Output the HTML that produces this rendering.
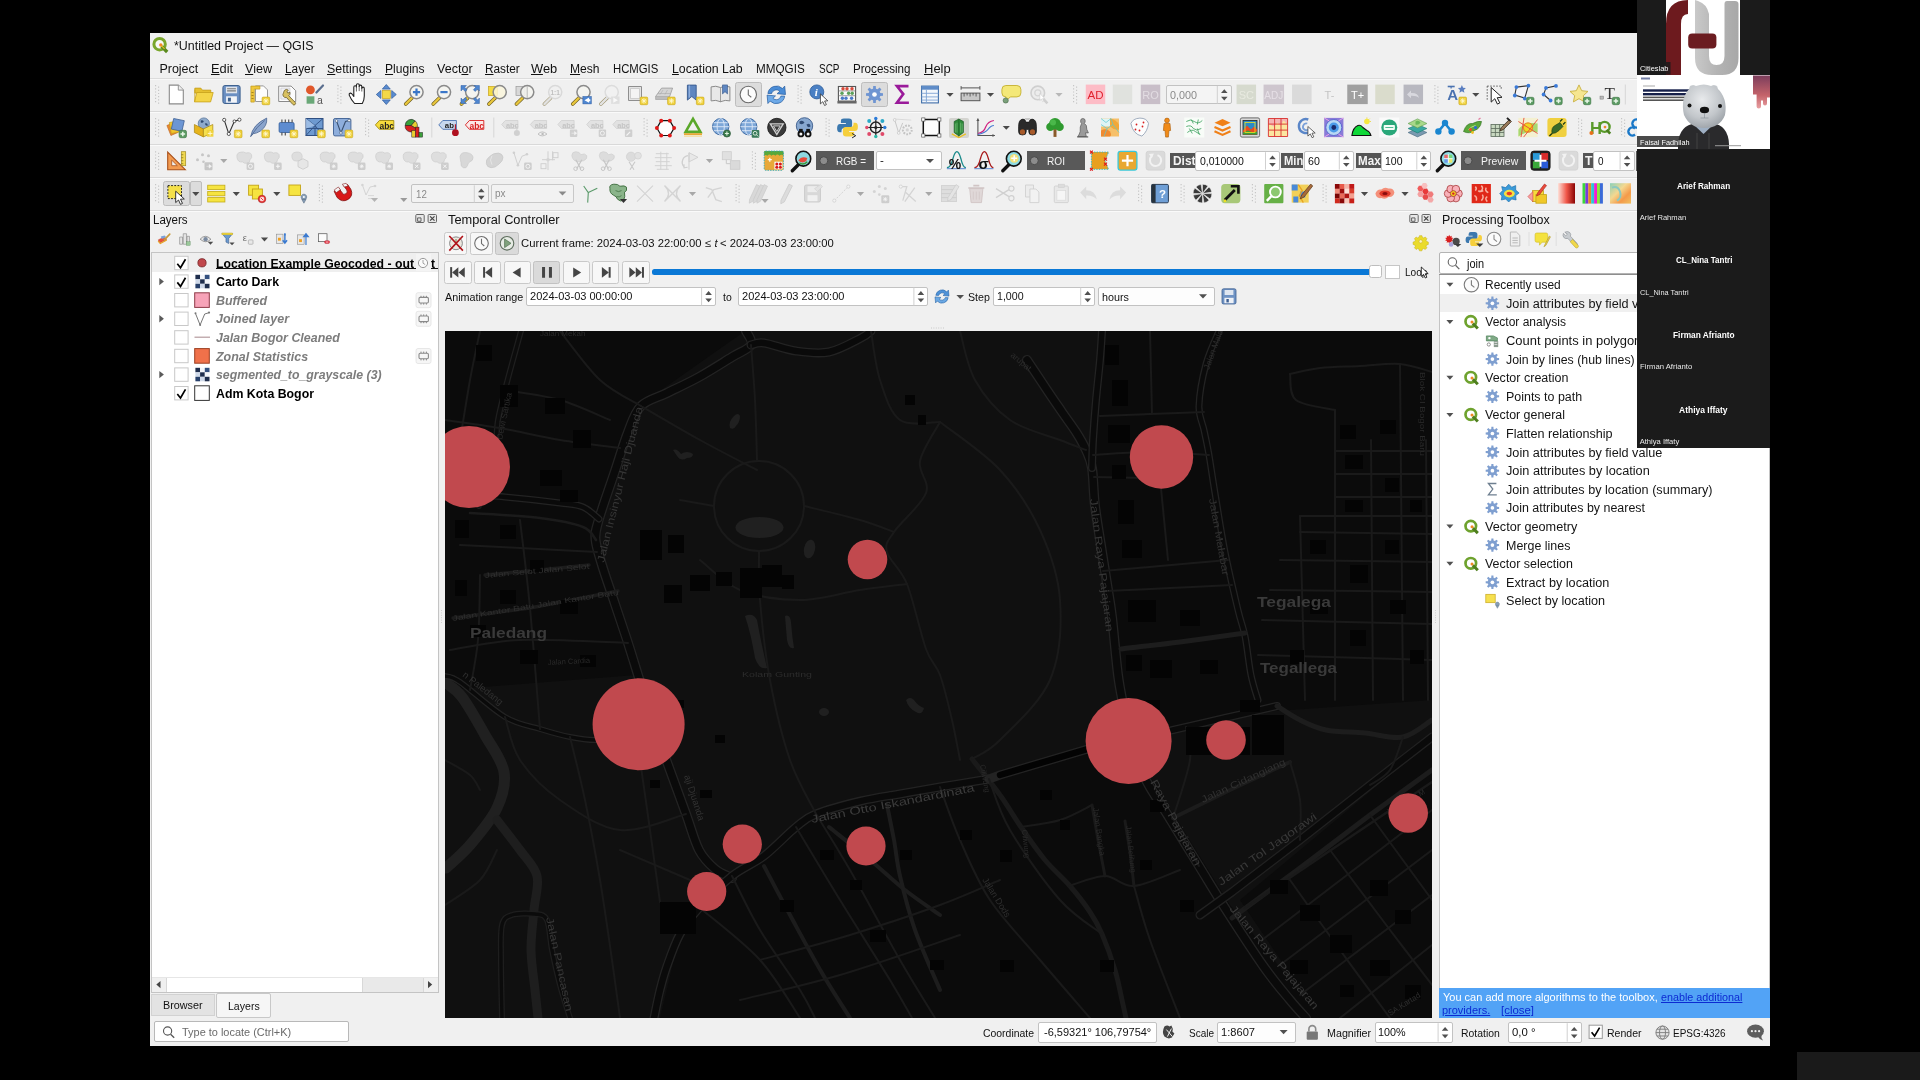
<!DOCTYPE html>
<html><head><meta charset="utf-8"><title>QGIS</title><style>
html,body{margin:0;padding:0;background:#000;}
body{width:1920px;height:1080px;position:relative;overflow:hidden;font-family:"Liberation Sans",sans-serif;}
div,span.t,svg.a{position:absolute;}
span.t{white-space:pre;transform-origin:0 0;}
u{text-decoration-thickness:1px;text-underline-offset:1px;}
text{font-family:"Liberation Sans",sans-serif;}
text.sf{font-family:"Liberation Serif",serif;}
</style></head><body>
<div id="root" style="left:0;top:0;width:1920px;height:1080px;will-change:transform;">
<div style="left:150px;top:33px;width:1620px;height:1013px;background:#f0f0f0;"></div>
<span class="t" style="left:174px;top:39.62px;font-size:12.5px;line-height:12.5px;color:#111;transform:scaleX(0.9941);">*Untitled Project — QGIS</span>
<span class="t" style="left:159.4px;top:62.52px;font-size:12.5px;line-height:12.5px;color:#111;">Project</span>
<span class="t" style="left:210.8px;top:62.52px;font-size:12.5px;line-height:12.5px;color:#111;transform:scaleX(1.0260);"><u>E</u>dit</span>
<span class="t" style="left:245.4px;top:62.52px;font-size:12.5px;line-height:12.5px;color:#111;transform:scaleX(1.0086);"><u>V</u>iew</span>
<span class="t" style="left:285px;top:62.52px;font-size:12.5px;line-height:12.5px;color:#111;transform:scaleX(0.9466);"><u>L</u>ayer</span>
<span class="t" style="left:327.1px;top:62.52px;font-size:12.5px;line-height:12.5px;color:#111;transform:scaleX(0.9919);"><u>S</u>ettings</span>
<span class="t" style="left:384.6px;top:62.52px;font-size:12.5px;line-height:12.5px;color:#111;transform:scaleX(0.9659);"><u>P</u>lugins</span>
<span class="t" style="left:437.1px;top:62.52px;font-size:12.5px;line-height:12.5px;color:#111;">Vect<u>o</u>r</span>
<span class="t" style="left:485px;top:62.52px;font-size:12.5px;line-height:12.5px;color:#111;transform:scaleX(0.9452);"><u>R</u>aster</span>
<span class="t" style="left:531.3px;top:62.52px;font-size:12.5px;line-height:12.5px;color:#111;transform:scaleX(1.0284);"><u>W</u>eb</span>
<span class="t" style="left:570px;top:62.52px;font-size:12.5px;line-height:12.5px;color:#111;transform:scaleX(0.9651);"><u>M</u>esh</span>
<span class="t" style="left:613px;top:62.52px;font-size:12.5px;line-height:12.5px;color:#111;transform:scaleX(0.9060);">HCMGIS</span>
<span class="t" style="left:671.8px;top:62.52px;font-size:12.5px;line-height:12.5px;color:#111;transform:scaleX(0.9876);"><u>L</u>ocation Lab</span>
<span class="t" style="left:756.3px;top:62.52px;font-size:12.5px;line-height:12.5px;color:#111;transform:scaleX(0.9351);">MMQGIS</span>
<span class="t" style="left:818.8px;top:62.52px;font-size:12.5px;line-height:12.5px;color:#111;transform:scaleX(0.7976);">SCP</span>
<span class="t" style="left:852.5px;top:62.52px;font-size:12.5px;line-height:12.5px;color:#111;transform:scaleX(0.9299);">Pro<u>c</u>essing</span>
<span class="t" style="left:923.8px;top:62.52px;font-size:12.5px;line-height:12.5px;color:#111;transform:scaleX(1.0385);"><u>H</u>elp</span>
<div style="left:150px;top:78px;width:1620px;height:1px;background:#dcdcdc;"></div>
<div style="left:150px;top:79px;width:1620px;height:1px;background:#f8f8f8;"></div>
<div style="left:150px;top:111px;width:1620px;height:1px;background:#d9d9d9;"></div>
<div style="left:150px;top:112px;width:1620px;height:1px;background:#fafafa;"></div>
<div style="left:150px;top:144px;width:1620px;height:1px;background:#d9d9d9;"></div>
<div style="left:150px;top:145px;width:1620px;height:1px;background:#fafafa;"></div>
<div style="left:150px;top:177px;width:1620px;height:1px;background:#d9d9d9;"></div>
<div style="left:150px;top:178px;width:1620px;height:1px;background:#fafafa;"></div>
<div style="left:150px;top:210px;width:1620px;height:1px;background:#d9d9d9;"></div>
<div style="left:150px;top:211px;width:1620px;height:1px;background:#fafafa;"></div>
<span class="t" style="left:1442px;top:214.09px;font-size:12.3px;line-height:12.3px;color:#111;transform:scaleX(1.0128);">Processing Toolbox</span>
<div style="left:1438.5px;top:252.2px;width:331.5px;height:22px;background:#ffffff;border:1px solid #b4b4b4;box-sizing:border-box;border-radius:2px;"></div>
<span class="t" style="left:1467.3px;top:257.74px;font-size:12px;line-height:12px;color:#111;transform:scaleX(0.9154);">join</span>
<div style="left:1438.5px;top:274px;width:331.5px;height:715.5px;background:#ffffff;border:1px solid #c4c4c4;box-sizing:border-box;"></div>
<div style="left:1438.5px;top:274px;width:331.5px;height:1px;background:#8e8e8e;"></div>
<div style="left:1439.5px;top:294.2px;width:330.5px;height:18px;background:#f0f0f0;"></div>
<span class="t" style="left:1485.3px;top:279.14px;font-size:12px;line-height:12px;color:#141414;transform:scaleX(0.9955);">Recently used</span>
<span class="t" style="left:1506.2px;top:297.74px;font-size:12px;line-height:12px;color:#141414;transform:scaleX(1.0561);">Join attributes by field value</span>
<span class="t" style="left:1485.3px;top:316.34px;font-size:12px;line-height:12px;color:#141414;">Vector analysis</span>
<span class="t" style="left:1506.2px;top:334.94px;font-size:12px;line-height:12px;color:#141414;transform:scaleX(1.0788);">Count points in polygon</span>
<span class="t" style="left:1506.2px;top:353.54px;font-size:12px;line-height:12px;color:#141414;transform:scaleX(1.0263);">Join by lines (hub lines)</span>
<span class="t" style="left:1485.3px;top:372.14px;font-size:12px;line-height:12px;color:#141414;transform:scaleX(1.0431);">Vector creation</span>
<span class="t" style="left:1506.2px;top:390.74px;font-size:12px;line-height:12px;color:#141414;transform:scaleX(1.0370);">Points to path</span>
<span class="t" style="left:1485.3px;top:409.34px;font-size:12px;line-height:12px;color:#141414;transform:scaleX(1.0338);">Vector general</span>
<span class="t" style="left:1506.2px;top:427.94px;font-size:12px;line-height:12px;color:#141414;transform:scaleX(1.0514);">Flatten relationship</span>
<span class="t" style="left:1506.2px;top:446.54px;font-size:12px;line-height:12px;color:#141414;transform:scaleX(1.0561);">Join attributes by field value</span>
<span class="t" style="left:1506.2px;top:465.14px;font-size:12px;line-height:12px;color:#141414;transform:scaleX(1.0619);">Join attributes by location</span>
<span class="t" style="left:1506.2px;top:483.74px;font-size:12px;line-height:12px;color:#141414;transform:scaleX(1.0532);">Join attributes by location (summary)</span>
<span class="t" style="left:1506.2px;top:502.34px;font-size:12px;line-height:12px;color:#141414;transform:scaleX(1.0367);">Join attributes by nearest</span>
<span class="t" style="left:1485.3px;top:520.94px;font-size:12px;line-height:12px;color:#141414;transform:scaleX(1.0563);">Vector geometry</span>
<span class="t" style="left:1506.2px;top:539.54px;font-size:12px;line-height:12px;color:#141414;transform:scaleX(1.0382);">Merge lines</span>
<span class="t" style="left:1485.3px;top:558.14px;font-size:12px;line-height:12px;color:#141414;transform:scaleX(1.0376);">Vector selection</span>
<span class="t" style="left:1506.2px;top:576.74px;font-size:12px;line-height:12px;color:#141414;transform:scaleX(1.0546);">Extract by location</span>
<span class="t" style="left:1506.2px;top:595.34px;font-size:12px;line-height:12px;color:#141414;transform:scaleX(1.0536);">Select by location</span>
<div style="left:1438.6px;top:988.4px;width:331.4px;height:29.8px;background:#52a3f6;"></div>
<span class="t" style="left:1442.8px;top:992.01px;font-size:10.5px;line-height:10.5px;color:#fff;transform:scaleX(1.0471);">You can add more algorithms to the toolbox, </span>
<span class="t" style="left:1660.6px;top:992.01px;font-size:10.5px;line-height:10.5px;color:#0c2ad2;transform:scaleX(1.0251);text-decoration:underline;">enable additional</span>
<span class="t" style="left:1442.3px;top:1005.01px;font-size:10.5px;line-height:10.5px;color:#0c2ad2;transform:scaleX(1.0455);text-decoration:underline;">providers.</span>
<span class="t" style="left:1501px;top:1005.01px;font-size:10.5px;line-height:10.5px;color:#0c2ad2;transform:scaleX(1.0874);text-decoration:underline;">[close]</span>
<div style="left:735px;top:82.2px;width:26.8px;height:24.8px;background:#dcdcdc;border:1px solid #bdbdbd;box-sizing:border-box;border-radius:2.5px;"></div>
<div style="left:861.3px;top:82.2px;width:26.7px;height:24.8px;background:#dcdcdc;border:1px solid #bdbdbd;box-sizing:border-box;border-radius:2.5px;"></div>
<span class="t" style="left:153.4px;top:214.09px;font-size:12.3px;line-height:12.3px;color:#111;transform:scaleX(0.9372);">Layers</span>
<div style="left:151px;top:252px;width:288px;height:741px;background:#ffffff;border:1px solid #c4c4c4;box-sizing:border-box;"></div>
<div style="left:152px;top:253px;width:286px;height:19px;background:#efefef;"></div>
<span class="t" style="left:216px;top:257.54px;font-size:12px;line-height:12px;color:#000;font-weight:bold;transform:scaleX(1.0205);">Location Example Geocoded - out</span>
<span class="t" style="left:216px;top:276.14px;font-size:12px;line-height:12px;color:#000;font-weight:bold;transform:scaleX(1.0268);">Carto Dark</span>
<span class="t" style="left:216px;top:294.74px;font-size:12px;line-height:12px;color:#7c7c7c;font-weight:bold;font-style:italic;transform:scaleX(1.0382);">Buffered</span>
<span class="t" style="left:216px;top:313.34px;font-size:12px;line-height:12px;color:#7c7c7c;font-weight:bold;font-style:italic;transform:scaleX(1.0424);">Joined layer</span>
<span class="t" style="left:216px;top:331.94px;font-size:12px;line-height:12px;color:#7c7c7c;font-weight:bold;font-style:italic;transform:scaleX(1.0372);">Jalan Bogor Cleaned</span>
<span class="t" style="left:216px;top:350.54px;font-size:12px;line-height:12px;color:#7c7c7c;font-weight:bold;font-style:italic;transform:scaleX(1.0384);">Zonal Statistics</span>
<span class="t" style="left:216px;top:369.14px;font-size:12px;line-height:12px;color:#7c7c7c;font-weight:bold;font-style:italic;transform:scaleX(1.0260);">segmented_to_grayscale (3)</span>
<span class="t" style="left:216px;top:387.74px;font-size:12px;line-height:12px;color:#000;font-weight:bold;transform:scaleX(1.0280);">Adm Kota Bogor</span>
<div style="left:216px;top:268.3px;width:222px;height:1.2px;background:#111;"></div>
<div style="left:415.5px;top:254px;width:15.5px;height:17px;background:#f4f4f4;"></div>
<span class="t" style="left:431px;top:257.54px;font-size:12px;line-height:12px;color:#000;font-weight:bold;">t</span>
<div style="left:152px;top:977px;width:286px;height:15px;background:#f0f0f0;"></div>
<div style="left:152px;top:977px;width:286px;height:1px;background:#e6e6e6;"></div>
<div style="left:166px;top:978px;width:196px;height:14px;background:#ffffff;"></div>
<div style="left:362.5px;top:978px;width:60.5px;height:14px;background:#e9e9e9;"></div>
<div style="left:165.5px;top:978px;width:1px;height:14px;background:#d8d8d8;"></div>
<div style="left:362px;top:978px;width:1px;height:14px;background:#d8d8d8;"></div>
<div style="left:423px;top:978px;width:1px;height:14px;background:#d8d8d8;"></div>
<div style="left:151px;top:994px;width:63.5px;height:21.5px;background:#e3e3e3;border:1px solid #d2d2d2;box-sizing:border-box;"></div>
<div style="left:215.5px;top:993px;width:55.5px;height:24.5px;background:#f6f6f6;border:1px solid #c8c8c8;box-sizing:border-box;border-radius:2px;"></div>
<span class="t" style="left:162.6px;top:1000.27px;font-size:11.5px;line-height:11.5px;color:#111;transform:scaleX(0.9389);">Browser</span>
<span class="t" style="left:227.5px;top:1001.27px;font-size:11.5px;line-height:11.5px;color:#111;transform:scaleX(0.9184);">Layers</span>
<div style="left:153.5px;top:1021.4px;width:195px;height:21px;background:#ffffff;border:1px solid #b8b8b8;box-sizing:border-box;border-radius:2px;"></div>
<span class="t" style="left:182.4px;top:1027.07px;font-size:11.5px;line-height:11.5px;color:#6a6a6a;transform:scaleX(0.9518);">Type to locate (Ctrl+K)</span>
<span class="t" style="left:448.3px;top:213.89px;font-size:12.3px;line-height:12.3px;color:#111;transform:scaleX(1.0398);">Temporal Controller</span>
<div style="left:444.4px;top:232.4px;width:23.1px;height:22.2px;background:#f7f7f7;border:1px solid #c9c9c9;box-sizing:border-box;border-radius:2.5px;"></div>
<div style="left:470px;top:232.4px;width:23px;height:22.2px;background:#f7f7f7;border:1px solid #c9c9c9;box-sizing:border-box;border-radius:2.5px;"></div>
<div style="left:495.2px;top:232.4px;width:23.5px;height:22.2px;background:#dadada;border:1px solid #c2c2c2;box-sizing:border-box;border-radius:2.5px;"></div>
<span class="t" style="left:521px;top:238.39px;font-size:11px;line-height:11px;color:#111;transform:scaleX(1.0252);">Current frame: 2024-03-03 22:00:00 ≤ </span>
<span class="t" style="left:714.5px;top:238.39px;font-size:11px;line-height:11px;color:#111;font-style:italic;">t</span>
<span class="t" style="left:720px;top:238.39px;font-size:11px;line-height:11px;color:#111;transform:scaleX(1.0195);">&lt; 2024-03-03 23:00:00</span>
<div style="left:444.4px;top:261.2px;width:27.5px;height:22.4px;background:#f7f7f7;border:1px solid #c9c9c9;box-sizing:border-box;border-radius:2.5px;"></div>
<div style="left:474.1px;top:261.2px;width:27.2px;height:22.4px;background:#f7f7f7;border:1px solid #c9c9c9;box-sizing:border-box;border-radius:2.5px;"></div>
<div style="left:503.6px;top:261.2px;width:27.2px;height:22.4px;background:#f7f7f7;border:1px solid #c9c9c9;box-sizing:border-box;border-radius:2.5px;"></div>
<div style="left:533.4px;top:261.2px;width:26.9px;height:22.4px;background:#dadada;border:1px solid #c2c2c2;box-sizing:border-box;border-radius:2.5px;"></div>
<div style="left:562.6px;top:261.2px;width:27.2px;height:22.4px;background:#f7f7f7;border:1px solid #c9c9c9;box-sizing:border-box;border-radius:2.5px;"></div>
<div style="left:592.4px;top:261.2px;width:26.9px;height:22.4px;background:#f7f7f7;border:1px solid #c9c9c9;box-sizing:border-box;border-radius:2.5px;"></div>
<div style="left:621.8px;top:261.2px;width:27.9px;height:22.4px;background:#f7f7f7;border:1px solid #c9c9c9;box-sizing:border-box;border-radius:2.5px;"></div>
<div style="left:652px;top:269.2px;width:722px;height:5.4px;background:#0a78d6;border-radius:2.5px;"></div>
<div style="left:1369.2px;top:265.1px;width:13.2px;height:12.5px;background:#ffffff;border:1px solid #bdbdbd;box-sizing:border-box;border-radius:2.5px;"></div>
<div style="left:1385.4px;top:264.6px;width:14.4px;height:14.2px;background:#ffffff;border:1px solid #c6c6c6;box-sizing:border-box;"></div>
<span class="t" style="left:1405px;top:267.19px;font-size:11px;line-height:11px;color:#111;transform:scaleX(0.9194);">Loop</span>
<span class="t" style="left:444.8px;top:291.57px;font-size:11.5px;line-height:11.5px;color:#111;transform:scaleX(0.9349);">Animation range</span>
<div style="left:525.8px;top:286.6px;width:190.3px;height:19.8px;background:#fff;border:1px solid #c2c2c2;box-sizing:border-box;border-radius:2px;"></div>
<span class="t" style="left:530.1px;top:291.47px;font-size:11.5px;line-height:11.5px;color:#111;transform:scaleX(0.9589);">2024-03-03 00:00:00</span>
<span class="t" style="left:723.3px;top:291.57px;font-size:11.5px;line-height:11.5px;color:#111;transform:scaleX(0.9071);">to</span>
<div style="left:737.9px;top:286.6px;width:190.5px;height:19.8px;background:#fff;border:1px solid #c2c2c2;box-sizing:border-box;border-radius:2px;"></div>
<span class="t" style="left:742.2px;top:291.47px;font-size:11.5px;line-height:11.5px;color:#111;transform:scaleX(0.9589);">2024-03-03 23:00:00</span>
<span class="t" style="left:968.3px;top:291.57px;font-size:11.5px;line-height:11.5px;color:#111;transform:scaleX(0.9257);">Step</span>
<div style="left:992.5px;top:286.6px;width:102.7px;height:19.8px;background:#fff;border:1px solid #c2c2c2;box-sizing:border-box;border-radius:2px;"></div>
<span class="t" style="left:996.6px;top:291.47px;font-size:11.5px;line-height:11.5px;color:#111;transform:scaleX(0.9243);">1,000</span>
<div style="left:1098.1px;top:286.6px;width:117.3px;height:19.8px;background:#fdfdfd;border:1px solid #c2c2c2;box-sizing:border-box;border-radius:2px;"></div>
<span class="t" style="left:1101.9px;top:291.57px;font-size:11.5px;line-height:11.5px;color:#111;transform:scaleX(0.9351);">hours</span>
<div style="left:1165.5px;top:85px;width:66.3px;height:19.4px;background:#f4f4f4;border:1px solid #c2c2c2;box-sizing:border-box;border-radius:2px;"></div>
<span class="t" style="left:1170px;top:89.67px;font-size:11.5px;line-height:11.5px;color:#8a8a8a;transform:scaleX(0.9382);">0,000</span>
<div style="left:949px;top:117.5px;width:20px;height:20px;background:#d4d4d0;border-radius:2px;"></div>
<div style="left:816.3px;top:151.1px;width:57.5px;height:19.4px;background:#595959;"></div>
<span class="t" style="left:836.3px;top:155.67px;font-size:11.5px;line-height:11.5px;color:#f4f4f4;transform:scaleX(0.8613);">RGB =</span>
<div style="left:875.5px;top:151.3px;width:66.3px;height:19px;background:#ffffff;border:1px solid #c2c2c2;box-sizing:border-box;border-radius:2px;"></div>
<span class="t" style="left:880px;top:155.07px;font-size:11.5px;line-height:11.5px;color:#111;">-</span>
<div style="left:1026.8px;top:151.1px;width:58.7px;height:19.4px;background:#595959;"></div>
<span class="t" style="left:1047px;top:155.67px;font-size:11.5px;line-height:11.5px;color:#f4f4f4;transform:scaleX(0.8804);">ROI</span>
<div style="left:1170px;top:153px;width:24.5px;height:14.9px;background:#555555;"></div>
<span class="t" style="left:1173px;top:155.24px;font-size:12px;line-height:12px;color:#f4f4f4;font-weight:bold;transform:scaleX(0.9925);">Dist</span>
<div style="left:1194.5px;top:151.2px;width:85.5px;height:19.4px;background:#fff;border:1px solid #c2c2c2;box-sizing:border-box;border-radius:2px;"></div>
<span class="t" style="left:1200px;top:155.87px;font-size:11.5px;line-height:11.5px;color:#111;transform:scaleX(0.9131);">0,010000</span>
<div style="left:1281.3px;top:153px;width:22.2px;height:14.9px;background:#555555;"></div>
<span class="t" style="left:1284px;top:155.24px;font-size:12px;line-height:12px;color:#f4f4f4;font-weight:bold;transform:scaleX(0.9293);">Min</span>
<div style="left:1303.5px;top:151.2px;width:50.3px;height:19.4px;background:#fff;border:1px solid #c2c2c2;box-sizing:border-box;border-radius:2px;"></div>
<span class="t" style="left:1307.5px;top:155.87px;font-size:11.5px;line-height:11.5px;color:#111;transform:scaleX(0.9225);">60</span>
<div style="left:1355.5px;top:153px;width:25.5px;height:14.9px;background:#555555;"></div>
<span class="t" style="left:1358px;top:155.24px;font-size:12px;line-height:12px;color:#f4f4f4;font-weight:bold;transform:scaleX(0.9681);">Max</span>
<div style="left:1381px;top:151.2px;width:50.3px;height:19.4px;background:#fff;border:1px solid #c2c2c2;box-sizing:border-box;border-radius:2px;"></div>
<span class="t" style="left:1385px;top:155.87px;font-size:11.5px;line-height:11.5px;color:#111;transform:scaleX(0.9120);">100</span>
<div style="left:1460.5px;top:151.1px;width:65.8px;height:19.4px;background:#595959;"></div>
<span class="t" style="left:1480.8px;top:155.67px;font-size:11.5px;line-height:11.5px;color:#f4f4f4;transform:scaleX(0.9095);">Preview</span>
<div style="left:1582.8px;top:153px;width:10.2px;height:14.9px;background:#555555;"></div>
<span class="t" style="left:1584.6px;top:155.24px;font-size:12px;line-height:12px;color:#f4f4f4;font-weight:bold;transform:scaleX(1.0095);">T</span>
<div style="left:1593px;top:151.2px;width:41.6px;height:19.4px;background:#fff;border:1px solid #c2c2c2;box-sizing:border-box;border-radius:2px;"></div>
<span class="t" style="left:1597.5px;top:155.87px;font-size:11.5px;line-height:11.5px;color:#111;transform:scaleX(0.8599);">0</span>
<div style="left:1636px;top:151px;width:2px;height:19.6px;background:#595959;"></div>
<div style="left:163px;top:181.3px;width:26.5px;height:24.8px;background:#dcdcdc;border:1px solid #bdbdbd;box-sizing:border-box;border-radius:2.5px;"></div>
<div style="left:189.5px;top:181.3px;width:12.3px;height:24.8px;background:#dcdcdc;border:1px solid #bdbdbd;box-sizing:border-box;border-radius:2px;"></div>
<div style="left:411.3px;top:184.3px;width:77.5px;height:19.1px;background:#f2f2f2;border:1px solid #c2c2c2;box-sizing:border-box;border-radius:2px;"></div>
<span class="t" style="left:415.5px;top:188.82px;font-size:11.5px;line-height:11.5px;color:#8a8a8a;transform:scaleX(0.8443);">12</span>
<div style="left:490.5px;top:184.3px;width:83.8px;height:19.1px;background:#f2f2f2;border:1px solid #c8c8c8;box-sizing:border-box;border-radius:2px;"></div>
<span class="t" style="left:495px;top:188.37px;font-size:11.5px;line-height:11.5px;color:#8a8a8a;transform:scaleX(0.8645);">px</span>
<svg class="a" style="left:445px;top:331px" width="987" height="687" viewBox="445 331 987 687">
<rect x="445" y="331" width="987" height="687" fill="#101010"/>
<g fill="none" stroke-linecap="round" stroke-linejoin="round">
</g>
<g fill="#0b0b0b">
<path d="M445,331 L745,331 L640,405 L598,520 L600,560 L636,675 L445,690Z"/>
<path d="M1100,331 L1432,331 L1432,700 L1262,712 L1128,741 L1112,640 L1095,500 Z"/>
<path d="M660,1018 L680,934 L732,876 L816,814 L940,788 L1086,750 L1128,741 L1230,905 L1320,1018Z"/>
<path d="M1240,900 L1432,740 L1432,1018 L1320,1018Z"/>
</g>
<g fill="none" stroke-linecap="round" stroke-linejoin="round">
<path d="M446,683 C448.7,685.3 455.5,688.3 462.0,697.0 C468.5,705.7 478.0,722.5 485.0,735.0 C492.0,747.5 502.0,759.8 504.0,772.0 C506.0,784.2 502.7,795.8 497.0,808.0 C491.3,820.2 478.5,835.0 470.0,845.0 C461.5,855.0 450.0,864.2 446.0,868.0" stroke="#202020" stroke-width="11"/>
<path d="M497,820 C500.8,825.0 513.3,840.7 520.0,850.0 C526.7,859.3 534.7,866.0 537.0,876.0 C539.3,886.0 535.0,897.7 534.0,910.0 C533.0,922.3 530.8,936.7 531.0,950.0 C531.2,963.3 533.8,978.7 535.0,990.0 C536.2,1001.3 537.5,1013.3 538.0,1018.0" stroke="#1e1e1e" stroke-width="9"/>
<path d="M972,759 C976.7,765.0 991.8,783.7 1000.0,795.0 C1008.2,806.3 1013.5,816.2 1021.0,827.0 C1028.5,837.8 1036.8,850.2 1045.0,860.0 C1053.2,869.8 1062.5,877.3 1070.0,886.0 C1077.5,894.7 1084.7,904.0 1090.0,912.0 C1095.3,920.0 1097.8,924.3 1102.0,934.0 C1106.2,943.7 1111.7,959.0 1115.0,970.0 C1118.3,981.0 1120.2,992.0 1122.0,1000.0 C1123.8,1008.0 1125.3,1015.0 1126.0,1018.0" stroke="#1a1a1a" stroke-width="5"/>
<path d="M746,331 C746.8,333.3 753.3,340.7 751.0,345.0 C748.7,349.3 740.7,351.7 732.0,357.0 C723.3,362.3 709.8,371.0 699.0,377.0 C688.2,383.0 676.7,388.2 667.0,393.0 C657.3,397.8 647.5,399.5 641.0,406.0 C634.5,412.5 632.3,421.2 628.0,432.0 C623.7,442.8 619.8,456.5 615.0,471.0 C610.2,485.5 602.2,507.7 599.0,519.0 C595.8,530.3 595.0,531.3 595.5,539.0 C596.0,546.7 598.8,554.2 602.0,565.0 C605.2,575.8 610.7,591.0 615.0,604.0 C619.3,617.0 624.2,631.2 628.0,643.0 C631.8,654.8 634.0,662.2 638.0,675.0 C642.0,687.8 647.2,705.5 652.0,720.0 C656.8,734.5 661.3,746.3 667.0,762.0 C672.7,777.7 680.7,799.3 686.0,814.0 C691.3,828.7 694.2,840.8 699.0,850.0 C703.8,859.2 709.5,864.3 715.0,869.0 C720.5,873.7 729.2,876.5 732.0,878.0" stroke="#232323" stroke-width="10"/>
<path d="M746,331 C746.8,333.3 753.3,340.7 751.0,345.0 C748.7,349.3 740.7,351.7 732.0,357.0 C723.3,362.3 709.8,371.0 699.0,377.0 C688.2,383.0 676.7,388.2 667.0,393.0 C657.3,397.8 647.5,399.5 641.0,406.0 C634.5,412.5 632.3,421.2 628.0,432.0 C623.7,442.8 619.8,456.5 615.0,471.0 C610.2,485.5 602.2,507.7 599.0,519.0 C595.8,530.3 595.0,531.3 595.5,539.0 C596.0,546.7 598.8,554.2 602.0,565.0 C605.2,575.8 610.7,591.0 615.0,604.0 C619.3,617.0 624.2,631.2 628.0,643.0 C631.8,654.8 634.0,662.2 638.0,675.0 C642.0,687.8 647.2,705.5 652.0,720.0 C656.8,734.5 661.3,746.3 667.0,762.0 C672.7,777.7 680.7,799.3 686.0,814.0 C691.3,828.7 694.2,840.8 699.0,850.0 C703.8,859.2 709.5,864.3 715.0,869.0 C720.5,873.7 729.2,876.5 732.0,878.0" stroke="#0a0a0a" stroke-width="7.4"/>
<path d="M751,345 C753.2,344.7 756.5,342.0 764.0,343.0 C771.5,344.0 785.2,349.5 796.0,351.0 C806.8,352.5 818.2,354.2 829.0,352.0 C839.8,349.8 854.0,341.5 861.0,338.0 C868.0,334.5 869.3,332.2 871.0,331.0" stroke="#232323" stroke-width="9"/>
<path d="M751,345 C753.2,344.7 756.5,342.0 764.0,343.0 C771.5,344.0 785.2,349.5 796.0,351.0 C806.8,352.5 818.2,354.2 829.0,352.0 C839.8,349.8 854.0,341.5 861.0,338.0 C868.0,334.5 869.3,332.2 871.0,331.0" stroke="#0a0a0a" stroke-width="6.4"/>
<path d="M445,493 C455.0,493.7 485.8,495.3 505.0,497.0 C524.2,498.7 547.0,501.3 560.0,503.0 C573.0,504.7 576.5,504.3 583.0,507.0 C589.5,509.7 596.3,517.0 599.0,519.0" stroke="#232323" stroke-width="7"/>
<path d="M445,493 C455.0,493.7 485.8,495.3 505.0,497.0 C524.2,498.7 547.0,501.3 560.0,503.0 C573.0,504.7 576.5,504.3 583.0,507.0 C589.5,509.7 596.3,517.0 599.0,519.0" stroke="#0a0a0a" stroke-width="4.4"/>
<path d="M470,513 C481.7,513.8 521.2,515.7 540.0,518.0 C558.8,520.3 573.7,523.3 583.0,527.0 C592.3,530.7 593.8,537.8 596.0,540.0" stroke="#1b1b1b" stroke-width="2.6"/>
<path d="M521,331 C519.7,335.8 515.7,350.2 513.0,360.0 C510.3,369.8 507.5,380.0 505.0,390.0 C502.5,400.0 499.7,410.3 498.0,420.0 C496.3,429.7 497.0,438.0 495.0,448.0 C493.0,458.0 488.7,470.3 486.0,480.0 C483.3,489.7 480.2,501.7 479.0,506.0" stroke="#1f1f1f" stroke-width="6"/>
<path d="M521,331 C519.7,335.8 515.7,350.2 513.0,360.0 C510.3,369.8 507.5,380.0 505.0,390.0 C502.5,400.0 499.7,410.3 498.0,420.0 C496.3,429.7 497.0,438.0 495.0,448.0 C493.0,458.0 488.7,470.3 486.0,480.0 C483.3,489.7 480.2,501.7 479.0,506.0" stroke="#0c0c0c" stroke-width="3.4"/>
<path d="M445,676 C447.5,677.0 450.0,675.2 460.0,682.0 C470.0,688.8 491.7,709.2 505.0,717.0 C518.3,724.8 529.2,725.7 540.0,729.0 C550.8,732.3 560.7,735.2 570.0,737.0 C579.3,738.8 587.7,740.3 596.0,740.0 C604.3,739.7 616.0,735.8 620.0,735.0" stroke="#232323" stroke-width="6"/>
<path d="M445,676 C447.5,677.0 450.0,675.2 460.0,682.0 C470.0,688.8 491.7,709.2 505.0,717.0 C518.3,724.8 529.2,725.7 540.0,729.0 C550.8,732.3 560.7,735.2 570.0,737.0 C579.3,738.8 587.7,740.3 596.0,740.0 C604.3,739.7 616.0,735.8 620.0,735.0" stroke="#0a0a0a" stroke-width="3.4"/>
<path d="M654,1018 C655.0,1013.3 657.8,998.7 660.0,990.0 C662.2,981.3 663.7,975.3 667.0,966.0 C670.3,956.7 674.7,943.7 680.0,934.0 C685.3,924.3 690.3,917.7 699.0,908.0 C707.7,898.3 721.2,884.7 732.0,876.0 C742.8,867.3 753.3,864.2 764.0,856.0 C774.7,847.8 787.3,834.0 796.0,827.0 C804.7,820.0 805.2,818.3 816.0,814.0 C826.8,809.7 847.0,804.3 861.0,801.0 C875.0,797.7 886.8,796.3 900.0,794.0 C913.2,791.7 925.2,789.5 940.0,787.0 C954.8,784.5 980.8,780.3 989.0,779.0" stroke="#232323" stroke-width="9"/>
<path d="M654,1018 C655.0,1013.3 657.8,998.7 660.0,990.0 C662.2,981.3 663.7,975.3 667.0,966.0 C670.3,956.7 674.7,943.7 680.0,934.0 C685.3,924.3 690.3,917.7 699.0,908.0 C707.7,898.3 721.2,884.7 732.0,876.0 C742.8,867.3 753.3,864.2 764.0,856.0 C774.7,847.8 787.3,834.0 796.0,827.0 C804.7,820.0 805.2,818.3 816.0,814.0 C826.8,809.7 847.0,804.3 861.0,801.0 C875.0,797.7 886.8,796.3 900.0,794.0 C913.2,791.7 925.2,789.5 940.0,787.0 C954.8,784.5 980.8,780.3 989.0,779.0" stroke="#0a0a0a" stroke-width="6.4"/>
<path d="M989,779 L1000,775 L1086,749.5 L1128,741" stroke="#232323" stroke-width="9"/>
<path d="M1000,775 L1086,749.5" stroke="#030303" stroke-width="6.4"/>
<path d="M1128,741 C1135.5,739.2 1156.8,733.8 1173.0,730.0 C1189.2,726.2 1207.7,722.0 1225.0,718.0 C1242.3,714.0 1268.3,708.0 1277.0,706.0" stroke="#232323" stroke-width="8"/>
<path d="M1128,741 C1135.5,739.2 1156.8,733.8 1173.0,730.0 C1189.2,726.2 1207.7,722.0 1225.0,718.0 C1242.3,714.0 1268.3,708.0 1277.0,706.0" stroke="#0a0a0a" stroke-width="5.4"/>
<path d="M1277,706 C1280.8,708.3 1291.8,716.0 1300.0,720.0 C1308.2,724.0 1315.2,727.8 1326.0,730.0 C1336.8,732.2 1352.2,731.8 1365.0,733.0 C1377.8,734.2 1391.8,739.2 1403.0,737.0 C1414.2,734.8 1427.2,722.8 1432.0,720.0" stroke="#1d1d1d" stroke-width="5"/>
<path d="M1027,360 C1030.3,365.0 1041.2,381.3 1047.0,390.0 C1052.8,398.7 1057.2,405.0 1062.0,412.0 C1066.8,419.0 1072.0,425.7 1076.0,432.0 C1080.0,438.3 1083.3,444.0 1086.0,450.0 C1088.7,456.0 1090.5,458.7 1092.0,468.0 C1093.5,477.3 1093.3,492.0 1095.0,506.0 C1096.7,520.0 1099.8,538.0 1102.0,552.0 C1104.2,566.0 1106.3,579.2 1108.0,590.0 C1109.7,600.8 1110.3,602.8 1112.0,617.0 C1113.7,631.2 1116.0,659.5 1118.0,675.0 C1120.0,690.5 1122.3,699.0 1124.0,710.0 C1125.7,721.0 1127.3,735.8 1128.0,741.0" stroke="#232323" stroke-width="10"/>
<path d="M1027,360 C1030.3,365.0 1041.2,381.3 1047.0,390.0 C1052.8,398.7 1057.2,405.0 1062.0,412.0 C1066.8,419.0 1072.0,425.7 1076.0,432.0 C1080.0,438.3 1083.3,444.0 1086.0,450.0 C1088.7,456.0 1090.5,458.7 1092.0,468.0 C1093.5,477.3 1093.3,492.0 1095.0,506.0 C1096.7,520.0 1099.8,538.0 1102.0,552.0 C1104.2,566.0 1106.3,579.2 1108.0,590.0 C1109.7,600.8 1110.3,602.8 1112.0,617.0 C1113.7,631.2 1116.0,659.5 1118.0,675.0 C1120.0,690.5 1122.3,699.0 1124.0,710.0 C1125.7,721.0 1127.3,735.8 1128.0,741.0" stroke="#0a0a0a" stroke-width="7.4"/>
<path d="M1102,331 C1101.7,335.8 1101.0,348.5 1100.0,360.0 C1099.0,371.5 1097.2,386.7 1096.0,400.0 C1094.8,413.3 1093.7,428.7 1093.0,440.0 C1092.3,451.3 1092.2,463.3 1092.0,468.0" stroke="#232323" stroke-width="8"/>
<path d="M1102,331 C1101.7,335.8 1101.0,348.5 1100.0,360.0 C1099.0,371.5 1097.2,386.7 1096.0,400.0 C1094.8,413.3 1093.7,428.7 1093.0,440.0 C1092.3,451.3 1092.2,463.3 1092.0,468.0" stroke="#0a0a0a" stroke-width="5.4"/>
<path d="M1128,741 C1131.2,747.8 1140.5,769.8 1147.0,782.0 C1153.5,794.2 1158.3,800.0 1167.0,814.0 C1175.7,828.0 1189.3,850.3 1199.0,866.0 C1208.7,881.7 1214.2,891.2 1225.0,908.0 C1235.8,924.8 1253.2,951.7 1264.0,967.0 C1274.8,982.3 1283.0,991.5 1290.0,1000.0 C1297.0,1008.5 1303.3,1015.0 1306.0,1018.0" stroke="#232323" stroke-width="10"/>
<path d="M1128,741 C1131.2,747.8 1140.5,769.8 1147.0,782.0 C1153.5,794.2 1158.3,800.0 1167.0,814.0 C1175.7,828.0 1189.3,850.3 1199.0,866.0 C1208.7,881.7 1214.2,891.2 1225.0,908.0 C1235.8,924.8 1253.2,951.7 1264.0,967.0 C1274.8,982.3 1283.0,991.5 1290.0,1000.0 C1297.0,1008.5 1303.3,1015.0 1306.0,1018.0" stroke="#0a0a0a" stroke-width="7.4"/>
<path d="M1219,331 C1216.8,336.5 1209.3,351.5 1206.0,364.0 C1202.7,376.5 1199.3,395.0 1199.0,406.0 C1198.7,417.0 1202.3,421.8 1204.0,430.0 C1205.7,438.2 1207.2,444.5 1209.0,455.0 C1210.8,465.5 1212.3,476.8 1215.0,493.0 C1217.7,509.2 1221.2,532.5 1225.0,552.0 C1228.8,571.5 1234.7,596.0 1238.0,610.0 C1241.3,624.0 1242.8,625.2 1245.0,636.0 C1247.2,646.8 1248.8,664.3 1251.0,675.0 C1253.2,685.7 1256.8,695.8 1258.0,700.0" stroke="#232323" stroke-width="7"/>
<path d="M1219,331 C1216.8,336.5 1209.3,351.5 1206.0,364.0 C1202.7,376.5 1199.3,395.0 1199.0,406.0 C1198.7,417.0 1202.3,421.8 1204.0,430.0 C1205.7,438.2 1207.2,444.5 1209.0,455.0 C1210.8,465.5 1212.3,476.8 1215.0,493.0 C1217.7,509.2 1221.2,532.5 1225.0,552.0 C1228.8,571.5 1234.7,596.0 1238.0,610.0 C1241.3,624.0 1242.8,625.2 1245.0,636.0 C1247.2,646.8 1248.8,664.3 1251.0,675.0 C1253.2,685.7 1256.8,695.8 1258.0,700.0" stroke="#0a0a0a" stroke-width="4.4"/>
<path d="M1121,649 C1130.8,647.8 1159.3,644.7 1180.0,642.0 C1200.7,639.3 1234.2,634.5 1245.0,633.0" stroke="#1d1d1d" stroke-width="5"/>
<path d="M1200,915 L1232,892 L1300,840 L1370,785 L1432,737" stroke="#212121" stroke-width="9"/>
<path d="M1200,915 L1232,892 L1300,840 L1370,785 L1432,737" stroke="#0a0a0a" stroke-width="6.4"/>
<path d="M1232,918 L1300,868 L1370,815 L1432,770" stroke="#1c1c1c" stroke-width="5"/>
<path d="M1245,908 L1432,782" stroke="#1a1a1a" stroke-width="2.4"/>
<path d="M1173,818 L1230,790 L1290,762" stroke="#1c1c1c" stroke-width="4"/>
<path d="M1092,805 L1098,840 L1105,876" stroke="#1a1a1a" stroke-width="3"/>
<path d="M1125,821 L1130,852 L1134,886" stroke="#1a1a1a" stroke-width="3"/>
<path d="M502,1018 C501.8,1008.3 501.0,975.5 501.0,960.0 C501.0,944.5 500.2,932.5 502.0,925.0 C503.8,917.5 506.5,916.8 512.0,915.0 C517.5,913.2 529.2,913.2 535.0,914.0 C540.8,914.8 544.2,914.0 547.0,920.0 C549.8,926.0 549.8,939.2 552.0,950.0 C554.2,960.8 557.0,973.7 560.0,985.0 C563.0,996.3 568.3,1012.5 570.0,1018.0" stroke="#1e1e1e" stroke-width="6"/>
<path d="M502,1018 C501.8,1008.3 501.0,975.5 501.0,960.0 C501.0,944.5 500.2,932.5 502.0,925.0 C503.8,917.5 506.5,916.8 512.0,915.0 C517.5,913.2 529.2,913.2 535.0,914.0 C540.8,914.8 544.2,914.0 547.0,920.0 C549.8,926.0 549.8,939.2 552.0,950.0 C554.2,960.8 557.0,973.7 560.0,985.0 C563.0,996.3 568.3,1012.5 570.0,1018.0" stroke="#0b0b0b" stroke-width="3.4"/>
<path d="M485,575 L540,570 L589,565" stroke="#1c1c1c" stroke-width="3.4"/>
<path d="M453,618 L530,608 L618,591" stroke="#1c1c1c" stroke-width="3.4"/>
<path d="M829,827 C835.8,832.5 857.3,849.5 870.0,860.0 C882.7,870.5 893.3,880.8 905.0,890.0 C916.7,899.2 934.2,910.8 940.0,915.0" stroke="#1d1d1d" stroke-width="4"/>
<path d="M887,805 C888.2,810.8 891.8,828.2 894.0,840.0 C896.2,851.8 896.5,861.0 900.0,876.0 C903.5,891.0 908.3,911.0 915.0,930.0 C921.7,949.0 935.8,980.0 940.0,990.0" stroke="#1d1d1d" stroke-width="4"/>
<path d="M764,866 C768.3,874.2 780.3,897.2 790.0,915.0 C799.7,932.8 812.0,955.8 822.0,973.0 C832.0,990.2 845.3,1010.5 850.0,1018.0" stroke="#1c1c1c" stroke-width="4"/>
</g>
<g fill="none" stroke="#1a1a1a" stroke-width="2" stroke-linecap="round" stroke-linejoin="round">
<circle cx="759" cy="506" r="45"/>
<path d="M940,422 C936.7,428.5 922.3,449.2 920.0,461.0 C917.7,472.8 930.3,481.2 926.0,493.0 C921.7,504.8 900.5,522.2 894.0,532.0 C887.5,541.8 884.8,543.3 887.0,552.0 C889.2,560.7 900.5,567.8 907.0,584.0 C913.5,600.2 920.5,633.8 926.0,649.0 C931.5,664.2 935.7,663.2 940.0,675.0 C944.3,686.8 948.7,705.8 952.0,720.0 C955.3,734.2 958.7,753.3 960.0,760.0"/>
<path d="M751,345 C751.7,354.2 754.0,380.8 755.0,400.0 C756.0,419.2 756.7,450.0 757.0,460.0"/>
<path d="M641,406 C650.8,411.7 680.7,429.3 700.0,440.0 C719.3,450.7 747.5,465.0 757.0,470.0"/>
<path d="M680,500 L714,506"/>
<path d="M804,506 C813.3,508.3 845.0,515.7 860.0,520.0 C875.0,524.3 888.3,530.0 894.0,532.0"/>
<path d="M759,551 C759.2,559.2 758.2,578.5 760.0,600.0 C761.8,621.5 765.0,653.3 770.0,680.0 C775.0,706.7 782.3,737.7 790.0,760.0 C797.7,782.3 811.7,805.0 816.0,814.0"/>
<path d="M700,560 C706.7,565.0 723.3,583.3 740.0,590.0 C756.7,596.7 780.0,600.0 800.0,600.0 C820.0,600.0 842.2,592.7 860.0,590.0 C877.8,587.3 899.2,585.0 907.0,584.0"/>
<path d="M871,331 C872.5,339.2 875.2,365.2 880.0,380.0 C884.8,394.8 890.0,413.0 900.0,420.0 C910.0,427.0 933.3,421.7 940.0,422.0"/>
<path d="M960,331 C962.5,339.2 966.7,365.2 975.0,380.0 C983.3,394.8 995.8,410.0 1010.0,420.0 C1024.2,430.0 1047.3,435.0 1060.0,440.0 C1072.7,445.0 1081.7,448.3 1086.0,450.0"/>
<path d="M940,422 C950.0,430.0 983.3,452.0 1000.0,470.0 C1016.7,488.0 1030.0,508.3 1040.0,530.0 C1050.0,551.7 1058.3,575.0 1060.0,600.0 C1061.7,625.0 1060.0,656.7 1050.0,680.0 C1040.0,703.3 1013.0,726.8 1000.0,740.0 C987.0,753.2 976.7,755.8 972.0,759.0"/>
<path d="M1100,416 C1108.3,415.7 1132.7,414.7 1150.0,414.0 C1167.3,413.3 1195.0,412.3 1204.0,412.0"/>
<path d="M1093,455 C1102.5,454.5 1130.7,452.0 1150.0,452.0 C1169.3,452.0 1199.2,454.5 1209.0,455.0"/>
<path d="M1094,477 L1150,478"/>
<path d="M1103,571 C1112.5,570.2 1139.2,567.8 1160.0,566.0 C1180.8,564.2 1216.7,561.0 1228.0,560.0"/>
<path d="M1106,591 C1116.7,590.5 1149.0,589.0 1170.0,588.0 C1191.0,587.0 1221.7,585.5 1232.0,585.0"/>
<path d="M1160,478 L1168,560"/>
<path d="M1150,331 L1152,414"/>
<path d="M1290,374 C1295.0,373.0 1308.3,369.3 1320.0,368.0 C1331.7,366.7 1346.7,366.7 1360.0,366.0 C1373.3,365.3 1388.0,363.0 1400.0,364.0 C1412.0,365.0 1426.7,370.7 1432.0,372.0"/>
<path d="M1290,374 C1291.0,378.3 1288.5,394.0 1296.0,400.0 C1303.5,406.0 1328.5,408.3 1335.0,410.0"/>
<path d="M1335,451 L1432,451"/>
<path d="M1335,474 L1432,474"/>
<path d="M1335,497 L1432,497"/>
<path d="M1300,516 L1432,516"/>
<path d="M1300,532 L1432,534"/>
<path d="M1280,560 L1432,562"/>
<path d="M1270,590 L1432,592"/>
<path d="M1262,620 L1432,624"/>
<path d="M1258,655 L1432,660"/>
<path d="M1335,410 L1335,700"/>
<path d="M1371,440 L1373,700"/>
<path d="M1400,364 L1403,700"/>
<path d="M1426,440 L1428,700"/>
<path d="M1300,516 L1305,700"/>
<path d="M445,420 C454.2,421.3 480.8,424.7 500.0,428.0 C519.2,431.3 540.0,436.7 560.0,440.0 C580.0,443.3 610.0,446.7 620.0,448.0"/>
<path d="M445,455 C452.5,455.8 481.7,461.2 490.0,460.0 C498.3,458.8 494.2,450.0 495.0,448.0"/>
<path d="M560,331 C566.7,339.2 586.5,367.5 600.0,380.0 C613.5,392.5 634.2,401.7 641.0,406.0"/>
<path d="M480,331 C478.3,339.2 473.3,361.8 470.0,380.0 C466.7,398.2 463.3,421.2 460.0,440.0 C456.7,458.8 451.7,484.2 450.0,493.0"/>
<path d="M505,390 C514.2,391.7 542.5,395.0 560.0,400.0 C577.5,405.0 601.7,416.7 610.0,420.0"/>
<path d="M460,545 C470.0,545.5 497.2,546.8 520.0,548.0 C542.8,549.2 584.2,551.3 597.0,552.0"/>
<path d="M450,650 C461.7,648.3 490.3,641.2 520.0,640.0 C549.7,638.8 610.0,642.5 628.0,643.0"/>
<path d="M520,520 C521.7,534.7 526.7,573.2 530.0,608.0 C533.3,642.8 538.3,708.8 540.0,729.0"/>
<path d="M480,575 C479.7,585.8 479.7,620.8 478.0,640.0 C476.3,659.2 471.3,681.7 470.0,690.0"/>
<path d="M505,717 C507.5,724.2 510.8,746.2 520.0,760.0 C529.2,773.8 543.3,788.3 560.0,800.0 C576.7,811.7 599.0,827.7 620.0,830.0 C641.0,832.3 675.0,816.7 686.0,814.0"/>
<path d="M570,737 C572.5,747.5 580.0,776.2 585.0,800.0 C590.0,823.8 595.5,853.3 600.0,880.0 C604.5,906.7 608.7,937.0 612.0,960.0 C615.3,983.0 618.7,1008.3 620.0,1018.0"/>
<path d="M445,905 C450.8,900.8 471.3,889.2 480.0,880.0 C488.7,870.8 494.2,855.0 497.0,850.0"/>
<path d="M445,760 C449.2,762.5 464.2,770.0 470.0,775.0 C475.8,780.0 478.3,787.5 480.0,790.0"/>
<path d="M640,760 C641.7,771.7 646.7,806.3 650.0,830.0 C653.3,853.7 658.3,890.0 660.0,902.0"/>
<path d="M620,850 L690,880"/>
<path d="M700,908 C710.0,916.7 743.3,941.7 760.0,960.0 C776.7,978.3 793.3,1008.3 800.0,1018.0"/>
<path d="M732,876 C736.7,885.0 748.7,911.0 760.0,930.0 C771.3,949.0 790.8,975.3 800.0,990.0 C809.2,1004.7 812.5,1013.3 815.0,1018.0"/>
<path d="M796,827 C803.3,839.2 824.3,874.5 840.0,900.0 C855.7,925.5 878.0,960.3 890.0,980.0 C902.0,999.7 908.3,1011.7 912.0,1018.0"/>
<path d="M816,814 C821.7,823.3 836.0,845.7 850.0,870.0 C864.0,894.3 885.8,935.3 900.0,960.0 C914.2,984.7 929.2,1008.3 935.0,1018.0"/>
<path d="M760,960 C775.0,955.8 820.0,944.2 850.0,935.0 C880.0,925.8 915.0,914.2 940.0,905.0 C965.0,895.8 990.0,884.2 1000.0,880.0"/>
<path d="M740,1000 C756.7,995.8 803.3,985.8 840.0,975.0 C876.7,964.2 940.0,941.7 960.0,935.0"/>
<path d="M940,787 C943.3,795.8 951.7,821.2 960.0,840.0 C968.3,858.8 976.7,880.0 990.0,900.0 C1003.3,920.0 1023.3,940.3 1040.0,960.0 C1056.7,979.7 1081.7,1008.3 1090.0,1018.0"/>
<path d="M989,779 C992.5,787.5 998.2,809.8 1010.0,830.0 C1021.8,850.2 1044.7,882.7 1060.0,900.0 C1075.3,917.3 1095.0,928.3 1102.0,934.0"/>
<path d="M1021,827 C1027.5,825.8 1048.2,823.7 1060.0,820.0 C1071.8,816.3 1086.7,807.5 1092.0,805.0"/>
<path d="M1069,886 C1075.0,884.3 1094.2,876.0 1105.0,876.0 C1115.8,876.0 1121.5,887.0 1134.0,886.0 C1146.5,885.0 1172.3,872.7 1180.0,870.0"/>
<path d="M1134,886 C1136.7,895.0 1142.3,918.0 1150.0,940.0 C1157.7,962.0 1175.0,1005.0 1180.0,1018.0"/>
<path d="M1262,940 L1432,810"/>
<path d="M1280,965 L1432,850"/>
<path d="M1300,995 L1432,895"/>
<path d="M1340,1018 L1432,945"/>
<path d="M1290,880 C1298.3,891.7 1323.3,927.0 1340.0,950.0 C1356.7,973.0 1381.7,1006.7 1390.0,1018.0"/>
<path d="M1330,850 C1340.0,863.3 1373.0,907.5 1390.0,930.0 C1407.0,952.5 1425.0,975.8 1432.0,985.0"/>
<path d="M1370,815 L1432,900"/>
<path d="M1173,818 C1175.8,823.3 1185.7,842.0 1190.0,850.0 C1194.3,858.0 1197.5,863.3 1199.0,866.0"/>
<path d="M1186,727 C1186.7,732.5 1192.2,744.8 1190.0,760.0 C1187.8,775.2 1175.8,808.3 1173.0,818.0"/>
<path d="M1290,762 C1291.7,768.3 1298.3,787.0 1300.0,800.0 C1301.7,813.0 1300.0,833.3 1300.0,840.0"/>
<path d="M1403,737 C1400.8,742.5 1395.5,762.0 1390.0,770.0 C1384.5,778.0 1373.3,782.5 1370.0,785.0"/>
</g>
<g fill="#040404">
<rect x="476" y="345" width="16" height="16"/>
<rect x="500" y="385" width="18" height="22"/>
<rect x="545" y="398" width="20" height="16"/>
<rect x="573" y="430" width="18" height="18"/>
<rect x="470" y="430" width="16" height="22"/>
<rect x="540" y="470" width="22" height="16"/>
<rect x="560" y="490" width="18" height="12"/>
<rect x="455" y="520" width="14" height="18"/>
<rect x="500" y="525" width="16" height="14"/>
<rect x="530" y="560" width="14" height="12"/>
<rect x="455" y="580" width="12" height="16"/>
<rect x="500" y="590" width="16" height="14"/>
<rect x="560" y="600" width="18" height="14"/>
<rect x="470" y="625" width="16" height="12"/>
<rect x="520" y="650" width="18" height="14"/>
<rect x="580" y="655" width="16" height="12"/>
<rect x="640" y="530" width="22" height="30"/>
<rect x="668" y="535" width="16" height="18"/>
<rect x="690" y="575" width="20" height="16"/>
<rect x="716" y="572" width="16" height="14"/>
<rect x="740" y="568" width="22" height="30"/>
<rect x="762" y="565" width="20" height="22"/>
<rect x="782" y="575" width="12" height="14"/>
<rect x="664" y="585" width="18" height="18"/>
<rect x="1105" y="345" width="14" height="20"/>
<rect x="1112" y="380" width="16" height="26"/>
<rect x="1108" y="425" width="22" height="18"/>
<rect x="1112" y="465" width="14" height="14"/>
<rect x="1118" y="500" width="16" height="24"/>
<rect x="1122" y="540" width="20" height="18"/>
<rect x="1128" y="600" width="28" height="22"/>
<rect x="1126" y="655" width="16" height="16"/>
<rect x="1150" y="660" width="22" height="18"/>
<rect x="1140" y="700" width="20" height="14"/>
<rect x="1180" y="610" width="20" height="16"/>
<rect x="1200" y="660" width="18" height="14"/>
<rect x="1186" y="727" width="64" height="28"/>
<rect x="1252" y="715" width="32" height="40"/>
<rect x="1240" y="700" width="20" height="12"/>
<rect x="660" y="902" width="36" height="32"/>
<rect x="672" y="700" width="12" height="8"/>
<rect x="640" y="715" width="12" height="8"/>
<rect x="650" y="780" width="10" height="8"/>
<rect x="700" y="790" width="12" height="8"/>
<rect x="715" y="735" width="10" height="8"/>
<rect x="1340" y="425" width="16" height="14"/>
<rect x="1380" y="420" width="16" height="14"/>
<rect x="1345" y="455" width="18" height="14"/>
<rect x="1385" y="478" width="14" height="14"/>
<rect x="1345" y="500" width="18" height="12"/>
<rect x="1410" y="500" width="12" height="12"/>
<rect x="1310" y="540" width="16" height="14"/>
<rect x="1350" y="565" width="18" height="18"/>
<rect x="1385" y="540" width="14" height="14"/>
<rect x="1310" y="600" width="18" height="14"/>
<rect x="1350" y="630" width="16" height="16"/>
<rect x="1390" y="600" width="16" height="14"/>
<rect x="1290" y="650" width="14" height="14"/>
<rect x="1410" y="650" width="14" height="14"/>
<rect x="1270" y="880" width="18" height="14"/>
<rect x="1300" y="905" width="20" height="16"/>
<rect x="1330" y="935" width="22" height="18"/>
<rect x="1370" y="880" width="18" height="16"/>
<rect x="1395" y="910" width="16" height="14"/>
<rect x="1290" y="960" width="18" height="14"/>
<rect x="1370" y="960" width="20" height="16"/>
<rect x="1405" y="985" width="16" height="14"/>
<rect x="1340" y="985" width="14" height="12"/>
<rect x="820" y="850" width="14" height="10"/>
<rect x="850" y="880" width="12" height="10"/>
<rect x="780" y="900" width="14" height="12"/>
<rect x="900" y="850" width="12" height="10"/>
<rect x="870" y="930" width="16" height="12"/>
<rect x="960" y="830" width="12" height="10"/>
<rect x="1000" y="850" width="12" height="12"/>
<rect x="1040" y="790" width="12" height="10"/>
<rect x="1060" y="820" width="10" height="10"/>
<rect x="1150" y="800" width="14" height="12"/>
<rect x="1140" y="860" width="12" height="10"/>
<rect x="1180" y="900" width="14" height="12"/>
<rect x="1100" y="960" width="14" height="12"/>
<rect x="1000" y="960" width="14" height="12"/>
<rect x="930" y="960" width="14" height="10"/>
<rect x="905" y="395" width="10" height="10"/>
<rect x="918" y="415" width="8" height="10"/>
</g>
<g fill="#202020"><ellipse cx="759.500" cy="527.500" rx="24" ry="10.500"/><path d="M745,616 q8,-4 12,4 q4,22 10,48 q-8,2 -12,-10 q-4,-24 -10,-42z"/><path d="M785,616 q5,-2 6,6 q1,14 3,26 q-5,2 -7,-8z"/><ellipse cx="809.500" cy="549" rx="5.500" ry="9.500" transform="rotate(12 809.5 549)"/><path d="M730,428 q-2,-6 4,-12 q4,-4 6,0 q0,6 -4,10 q-2,4 -6,2z"/><path d="M673,450 q4,-2 8,4 q6,-4 12,0 q0,4 -6,4 q-6,4 -10,-2z"/><ellipse cx="824" cy="712" rx="5" ry="4"/><path d="M906,700 q4,-4 8,0 q4,6 10,8 q-2,8 -8,4 q-8,-4 -10,-12z"/></g>
<text x="470" y="637.5" font-size="15" fill="#3a3a3a" font-weight="bold" textLength="77" lengthAdjust="spacingAndGlyphs">Paledang</text>
<text x="1257" y="606.5" font-size="15" fill="#3a3a3a" font-weight="bold" textLength="74" lengthAdjust="spacingAndGlyphs">Tegalega</text>
<text x="1260" y="672.5" font-size="15" fill="#3a3a3a" font-weight="bold" textLength="77" lengthAdjust="spacingAndGlyphs">Tegallega</text>
<text x="604" y="563" font-size="10.5" fill="#363636" transform="rotate(-76 604 563)" textLength="160" lengthAdjust="spacingAndGlyphs">Jalan Insinyur Haji Djuanda</text>
<text x="812" y="823" font-size="11" fill="#3c3c3c" transform="rotate(-11 812 823)" textLength="166" lengthAdjust="spacingAndGlyphs">Jalan Otto Iskandardinata</text>
<text x="1090" y="499" font-size="10.5" fill="#363636" transform="rotate(83 1090 499)" textLength="134" lengthAdjust="spacingAndGlyphs">Jalan Raya Pajajaran</text>
<text x="1209" y="499" font-size="10" fill="#303030" transform="rotate(80 1209 499)" textLength="78" lengthAdjust="spacingAndGlyphs">Jalan Malabar</text>
<text x="1221" y="886" font-size="11" fill="#383838" transform="rotate(-35 1221 886)" textLength="118" lengthAdjust="spacingAndGlyphs">Jalan Tol Jagorawi</text>
<text x="1229" y="909" font-size="11" fill="#383838" transform="rotate(50 1229 909)" textLength="132" lengthAdjust="spacingAndGlyphs">Jalan Raya Pajajaran</text>
<text x="1150" y="782" font-size="11" fill="#383838" transform="rotate(62 1150 782)" textLength="96" lengthAdjust="spacingAndGlyphs">Raya Pajajaran</text>
<text x="1203" y="803" font-size="9.5" fill="#303030" transform="rotate(-25 1203 803)" textLength="92" lengthAdjust="spacingAndGlyphs">Jalan Cidangiang</text>
<text x="462" y="676" font-size="9.5" fill="#303030" transform="rotate(38 462 676)">n Paledang</text>
<text x="546" y="918" font-size="10.5" fill="#363636" transform="rotate(78 546 918)" textLength="96" lengthAdjust="spacingAndGlyphs">Jalan Pancasan</text>
<text x="742" y="677" font-size="8" fill="#2c2c2c" textLength="70" lengthAdjust="spacingAndGlyphs">Kolam Gunting</text>
<text x="1420" y="372" font-size="7.5" fill="#2a2a2a" transform="rotate(90 1420 372)" textLength="84" lengthAdjust="spacingAndGlyphs">Blok CI Bogor Baru</text>
<text x="982" y="880" font-size="9" fill="#2e2e2e" transform="rotate(58 982 880)">Jalan Dods</text>
<text x="684" y="776" font-size="9.5" fill="#323232" transform="rotate(72 684 776)">aji Djuanda</text>
<text x="540" y="336" font-size="8" fill="#2a2a2a">Jalan Mekah</text>
<text x="502" y="440" font-size="8.5" fill="#2c2c2c" transform="rotate(-78 502 440)">Dewi Sartika</text>
<text x="485" y="578" font-size="7.5" fill="#2e2e2e" transform="rotate(-5 485 578)" textLength="105" lengthAdjust="spacingAndGlyphs">Jalan Selot  Jalan Selot</text>
<text x="453" y="621" font-size="7.5" fill="#2e2e2e" transform="rotate(-9 453 621)" textLength="168" lengthAdjust="spacingAndGlyphs">Jalan Kantor Batu Jalan Kantor Batu</text>
<text x="548" y="665" font-size="7.5" fill="#2a2a2a" transform="rotate(-3 548 665)">Jalan Cardia</text>
<text x="980" y="765" font-size="7.5" fill="#2a2a2a" transform="rotate(80 980 765)">Ciliwung</text>
<text x="1022" y="830" font-size="7.5" fill="#2a2a2a" transform="rotate(84 1022 830)">Ciliwung</text>
<text x="1093" y="808" font-size="8" fill="#2a2a2a" transform="rotate(82 1093 808)">Jalan Bangka</text>
<text x="1126" y="826" font-size="7.5" fill="#282828" transform="rotate(84 1126 826)">Jalan Belitung</text>
<text x="1388" y="815" font-size="7.5" fill="#2a2a2a" transform="rotate(-30 1388 815)">Jalan Bina M</text>
<text x="1390" y="1016" font-size="8" fill="#2e2e2e" transform="rotate(-32 1390 1016)">SA.Kartad</text>
<text x="1010" y="356" font-size="8.5" fill="#2c2c2c" transform="rotate(40 1010 356)">arupat</text>
<text x="1209" y="370" font-size="8.5" fill="#2c2c2c" transform="rotate(-70 1209 370)">Jalan Mala</text>
<circle cx="469" cy="467" r="41" fill="#c1494e"/>
<circle cx="867.5" cy="559.5" r="19.8" fill="#c1494e"/>
<circle cx="1161.5" cy="457" r="31.7" fill="#c1494e"/>
<circle cx="638.6" cy="724.3" r="46" fill="#c1494e"/>
<circle cx="1128.6" cy="741" r="43" fill="#c1494e"/>
<circle cx="1226" cy="740" r="19.8" fill="#c1494e"/>
<circle cx="1408.2" cy="813" r="19.8" fill="#c1494e"/>
<circle cx="742.3" cy="844.2" r="19.6" fill="#c1494e"/>
<circle cx="866" cy="846" r="19.6" fill="#c1494e"/>
<circle cx="706.7" cy="891.5" r="19.6" fill="#c1494e"/>
</svg>
<span class="t" style="left:983.4px;top:1027.73px;font-size:11.3px;line-height:11.3px;color:#111;transform:scaleX(0.9225);">Coordinate</span>
<div style="left:1038.2px;top:1022.2px;width:119px;height:20.4px;background:#fff;border:1px solid #c2c2c2;box-sizing:border-box;border-radius:2px;"></div>
<span class="t" style="left:1043.5px;top:1027.43px;font-size:11.3px;line-height:11.3px;color:#111;transform:scaleX(0.9736);">-6,59321° 106,79754°</span>
<span class="t" style="left:1189px;top:1027.73px;font-size:11.3px;line-height:11.3px;color:#111;transform:scaleX(0.8844);">Scale</span>
<div style="left:1217.2px;top:1022.2px;width:78.7px;height:20.4px;background:#fdfdfd;border:1px solid #c2c2c2;box-sizing:border-box;border-radius:2px;"></div>
<span class="t" style="left:1221px;top:1027.43px;font-size:11.3px;line-height:11.3px;color:#111;transform:scaleX(0.9837);">1:8607</span>
<span class="t" style="left:1327.2px;top:1027.73px;font-size:11.3px;line-height:11.3px;color:#111;transform:scaleX(0.9489);">Magnifier</span>
<div style="left:1374.5px;top:1022.2px;width:78.1px;height:20.4px;background:#fff;border:1px solid #c2c2c2;box-sizing:border-box;border-radius:2px;"></div>
<span class="t" style="left:1378.2px;top:1027.43px;font-size:11.3px;line-height:11.3px;color:#111;transform:scaleX(0.9550);">100%</span>
<span class="t" style="left:1460.6px;top:1027.73px;font-size:11.3px;line-height:11.3px;color:#111;transform:scaleX(0.9219);">Rotation</span>
<div style="left:1507.9px;top:1022.2px;width:73.8px;height:20.4px;background:#fff;border:1px solid #c2c2c2;box-sizing:border-box;border-radius:2px;"></div>
<span class="t" style="left:1512px;top:1027.43px;font-size:11.3px;line-height:11.3px;color:#111;transform:scaleX(1.0057);">0,0 °</span>
<span class="t" style="left:1607.2px;top:1027.73px;font-size:11.3px;line-height:11.3px;color:#111;transform:scaleX(0.9335);">Render</span>
<span class="t" style="left:1673.1px;top:1027.73px;font-size:11.3px;line-height:11.3px;color:#111;transform:scaleX(0.8814);">EPSG:4326</span>
<svg class="a" style="left:0;top:0" width="1920" height="1080" viewBox="0 0 1920 1080">
<circle cx="1452.4" cy="262" r="4.2" fill="none" stroke="#666" stroke-width="1.1"/><path d="M1455.5,265.3 l3.8,3.8" stroke="#666" stroke-width="1.3"/>
<path d="M1446.4,282.7 l3.5,4 l3.5,-4z" fill="#505050"/>
<circle cx="1471.4" cy="284.7" r="7.2" fill="#fbfbfb" stroke="#7a7a7a" stroke-width="1.1"/><path d="M1471.4,280.236 v4.752 l3,2.4" fill="none" stroke="#7a7a7a" stroke-width="1.1"/>
<polygon points="1499.12,302.28 1499.12,304.32 1497.02,304.44 1496.48,305.76 1497.87,307.34 1496.44,308.77 1494.86,307.38 1493.54,307.92 1493.42,310.02 1491.38,310.02 1491.26,307.92 1489.94,307.38 1488.36,308.77 1486.93,307.34 1488.32,305.76 1487.78,304.44 1485.68,304.32 1485.68,302.28 1487.78,302.16 1488.32,300.84 1486.93,299.26 1488.36,297.83 1489.94,299.22 1491.26,298.68 1491.38,296.58 1493.42,296.58 1493.54,298.68 1494.86,299.22 1496.44,297.83 1497.87,299.26 1496.48,300.84 1497.02,302.16" fill="#7f9fd0"/><circle cx="1492.4" cy="303.3" r="1.836" fill="#fff"/>
<path d="M1446.4,319.9 l3.5,4 l3.5,-4z" fill="#505050"/>
<g transform="translate(1471.4,321.9)"><circle cx="-.6" cy="-.4" r="5.3" fill="#fff" stroke="#6ea22e" stroke-width="2.7"/><path d="M1.4,1.6 l5,5" stroke="#4e7f1e" stroke-width="3"/><circle cx=".6" cy=".2" r="1.5" fill="#f08a24"/></g>
<g transform="translate(1492.4,340.5)"><path d="M-6,-4.6 h7 l4,2 v3 h-11z" fill="#7faa86" stroke="#4e7f5a" stroke-width=".7"/><circle cx="-3" cy="-2.4" r="1.2" fill="#fff"/><circle cx="-3.6" cy="4" r="1.6" fill="#fff" stroke="#777" stroke-width=".8"/><path d="M1.4,.6 h4.4 v6 h-4.4z" fill="#8a9a8e"/><path d="M2,2 h3 M2,4 h3" stroke="#eee" stroke-width=".7"/></g>
<polygon points="1499.12,358.08 1499.12,360.12 1497.02,360.24 1496.48,361.56 1497.87,363.14 1496.44,364.57 1494.86,363.18 1493.54,363.72 1493.42,365.82 1491.38,365.82 1491.26,363.72 1489.94,363.18 1488.36,364.57 1486.93,363.14 1488.32,361.56 1487.78,360.24 1485.68,360.12 1485.68,358.08 1487.78,357.96 1488.32,356.64 1486.93,355.06 1488.36,353.63 1489.94,355.02 1491.26,354.48 1491.38,352.38 1493.42,352.38 1493.54,354.48 1494.86,355.02 1496.44,353.63 1497.87,355.06 1496.48,356.64 1497.02,357.96" fill="#7f9fd0"/><circle cx="1492.4" cy="359.1" r="1.836" fill="#fff"/>
<path d="M1446.4,375.7 l3.5,4 l3.5,-4z" fill="#505050"/>
<g transform="translate(1471.4,377.7)"><circle cx="-.6" cy="-.4" r="5.3" fill="#fff" stroke="#6ea22e" stroke-width="2.7"/><path d="M1.4,1.6 l5,5" stroke="#4e7f1e" stroke-width="3"/><circle cx=".6" cy=".2" r="1.5" fill="#f08a24"/></g>
<polygon points="1499.12,395.28 1499.12,397.32 1497.02,397.44 1496.48,398.76 1497.87,400.34 1496.44,401.77 1494.86,400.38 1493.54,400.92 1493.42,403.02 1491.38,403.02 1491.26,400.92 1489.94,400.38 1488.36,401.77 1486.93,400.34 1488.32,398.76 1487.78,397.44 1485.68,397.32 1485.68,395.28 1487.78,395.16 1488.32,393.84 1486.93,392.26 1488.36,390.83 1489.94,392.22 1491.26,391.68 1491.38,389.58 1493.42,389.58 1493.54,391.68 1494.86,392.22 1496.44,390.83 1497.87,392.26 1496.48,393.84 1497.02,395.16" fill="#7f9fd0"/><circle cx="1492.4" cy="396.3" r="1.836" fill="#fff"/>
<path d="M1446.4,412.9 l3.5,4 l3.5,-4z" fill="#505050"/>
<g transform="translate(1471.4,414.9)"><circle cx="-.6" cy="-.4" r="5.3" fill="#fff" stroke="#6ea22e" stroke-width="2.7"/><path d="M1.4,1.6 l5,5" stroke="#4e7f1e" stroke-width="3"/><circle cx=".6" cy=".2" r="1.5" fill="#f08a24"/></g>
<polygon points="1499.12,432.48 1499.12,434.52 1497.02,434.64 1496.48,435.96 1497.87,437.54 1496.44,438.97 1494.86,437.58 1493.54,438.12 1493.42,440.22 1491.38,440.22 1491.26,438.12 1489.94,437.58 1488.36,438.97 1486.93,437.54 1488.32,435.96 1487.78,434.64 1485.68,434.52 1485.68,432.48 1487.78,432.36 1488.32,431.04 1486.93,429.46 1488.36,428.03 1489.94,429.42 1491.26,428.88 1491.38,426.78 1493.42,426.78 1493.54,428.88 1494.86,429.42 1496.44,428.03 1497.87,429.46 1496.48,431.04 1497.02,432.36" fill="#7f9fd0"/><circle cx="1492.4" cy="433.5" r="1.836" fill="#fff"/>
<polygon points="1499.12,451.08 1499.12,453.12 1497.02,453.24 1496.48,454.56 1497.87,456.14 1496.44,457.57 1494.86,456.18 1493.54,456.72 1493.42,458.82 1491.38,458.82 1491.26,456.72 1489.94,456.18 1488.36,457.57 1486.93,456.14 1488.32,454.56 1487.78,453.24 1485.68,453.12 1485.68,451.08 1487.78,450.96 1488.32,449.64 1486.93,448.06 1488.36,446.63 1489.94,448.02 1491.26,447.48 1491.38,445.38 1493.42,445.38 1493.54,447.48 1494.86,448.02 1496.44,446.63 1497.87,448.06 1496.48,449.64 1497.02,450.96" fill="#7f9fd0"/><circle cx="1492.4" cy="452.1" r="1.836" fill="#fff"/>
<polygon points="1499.12,469.68 1499.12,471.72 1497.02,471.84 1496.48,473.16 1497.87,474.74 1496.44,476.17 1494.86,474.78 1493.54,475.32 1493.42,477.42 1491.38,477.42 1491.26,475.32 1489.94,474.78 1488.36,476.17 1486.93,474.74 1488.32,473.16 1487.78,471.84 1485.68,471.72 1485.68,469.68 1487.78,469.56 1488.32,468.24 1486.93,466.66 1488.36,465.23 1489.94,466.62 1491.26,466.08 1491.38,463.98 1493.42,463.98 1493.54,466.08 1494.86,466.62 1496.44,465.23 1497.87,466.66 1496.48,468.24 1497.02,469.56" fill="#7f9fd0"/><circle cx="1492.4" cy="470.7" r="1.836" fill="#fff"/>
<path d="M1496.4,483.5 h-8 l4.4,5.6 l-4.4,5.8 h8.4" fill="none" stroke="#6e7f90" stroke-width="1.3"/>
<polygon points="1499.12,506.88 1499.12,508.92 1497.02,509.04 1496.48,510.36 1497.87,511.94 1496.44,513.37 1494.86,511.98 1493.54,512.52 1493.42,514.62 1491.38,514.62 1491.26,512.52 1489.94,511.98 1488.36,513.37 1486.93,511.94 1488.32,510.36 1487.78,509.04 1485.68,508.92 1485.68,506.88 1487.78,506.76 1488.32,505.44 1486.93,503.86 1488.36,502.43 1489.94,503.82 1491.26,503.28 1491.38,501.18 1493.42,501.18 1493.54,503.28 1494.86,503.82 1496.44,502.43 1497.87,503.86 1496.48,505.44 1497.02,506.76" fill="#7f9fd0"/><circle cx="1492.4" cy="507.9" r="1.836" fill="#fff"/>
<path d="M1446.4,524.5 l3.5,4 l3.5,-4z" fill="#505050"/>
<g transform="translate(1471.4,526.5)"><circle cx="-.6" cy="-.4" r="5.3" fill="#fff" stroke="#6ea22e" stroke-width="2.7"/><path d="M1.4,1.6 l5,5" stroke="#4e7f1e" stroke-width="3"/><circle cx=".6" cy=".2" r="1.5" fill="#f08a24"/></g>
<polygon points="1499.12,544.08 1499.12,546.12 1497.02,546.24 1496.48,547.56 1497.87,549.14 1496.44,550.57 1494.86,549.18 1493.54,549.72 1493.42,551.82 1491.38,551.82 1491.26,549.72 1489.94,549.18 1488.36,550.57 1486.93,549.14 1488.32,547.56 1487.78,546.24 1485.68,546.12 1485.68,544.08 1487.78,543.96 1488.32,542.64 1486.93,541.06 1488.36,539.63 1489.94,541.02 1491.26,540.48 1491.38,538.38 1493.42,538.38 1493.54,540.48 1494.86,541.02 1496.44,539.63 1497.87,541.06 1496.48,542.64 1497.02,543.96" fill="#7f9fd0"/><circle cx="1492.4" cy="545.1" r="1.836" fill="#fff"/>
<path d="M1446.4,561.7 l3.5,4 l3.5,-4z" fill="#505050"/>
<g transform="translate(1471.4,563.7)"><circle cx="-.6" cy="-.4" r="5.3" fill="#fff" stroke="#6ea22e" stroke-width="2.7"/><path d="M1.4,1.6 l5,5" stroke="#4e7f1e" stroke-width="3"/><circle cx=".6" cy=".2" r="1.5" fill="#f08a24"/></g>
<polygon points="1499.12,581.28 1499.12,583.32 1497.02,583.44 1496.48,584.76 1497.87,586.34 1496.44,587.77 1494.86,586.38 1493.54,586.92 1493.42,589.02 1491.38,589.02 1491.26,586.92 1489.94,586.38 1488.36,587.77 1486.93,586.34 1488.32,584.76 1487.78,583.44 1485.68,583.32 1485.68,581.28 1487.78,581.16 1488.32,579.84 1486.93,578.26 1488.36,576.83 1489.94,578.22 1491.26,577.68 1491.38,575.58 1493.42,575.58 1493.54,577.68 1494.86,578.22 1496.44,576.83 1497.87,578.26 1496.48,579.84 1497.02,581.16" fill="#7f9fd0"/><circle cx="1492.4" cy="582.3" r="1.836" fill="#fff"/>
<g transform="translate(1492.4,600.9)"><rect x="-6.6" y="-6.6" width="9.4" height="8.4" fill="#f6e04e" stroke="#c9a820" stroke-width=".7"/><path d="M5,1.2 a2,2 0 1 1 -.01,0 M5,7.4 l-1.6,-3 h3.2z" fill="#8aa0b8" stroke="#6e8298" stroke-width=".5"/></g>
<g transform="translate(1452.5,239)"><path d="M-4,-7 l1,2.2 2.2-1 -.6,2.4 2.4,.4 -1.8,1.6 1.8,1.6 -2.4,.4 .6,2.4 -2.2-1 -1,2.2 -1-2.2 -2.2,1 .6-2.4 -2.4-.4 1.8-1.6 -1.8-1.6 2.4-.4 -.6-2.4 2.2,1z" fill="#d81e1e" transform="translate(0,1.4) scale(.82)"/><circle cx="3.6" cy="2.4" r="3.6" fill="#4a4a4a"/><circle cx="-1.4" cy="5.4" r="2.3" fill="#a8a4d8"/><path d="M2,5 l3.4,3 l3.4,-3z" fill="#3a3a3a"/></g>
<g transform="translate(1473.8,239)"><path d="M-3,-7 h4 q2.6,0 2.6,2.6 v3 q0,2 -2,2 h-4 q-2.4,0 -2.4,2.4 v1 h-1.4 q-2,0 -2,-3 q0,-3.4 2.4,-3.4 h4.6 v-.8 h-4 v-1.6 q0,-2.2 2.2,-2.2z" fill="#3b78ae"/><path d="M3,7 h-4 q-2.6,0 -2.6,-2.6 v-3 q0,-2 2,-2 h4 q2.4,0 2.4,-2.4 v-1 h1.4 q2,0 2,3 q0,3.4 -2.4,3.4 h-4.6 v.8 h4 v1.6 q0,2.2 -2.2,2.2z" fill="#f6cf3c"/><path d="M2.4,4.6 l3.6,3.4 l3.6,-3.4z" fill="#3a3a3a"/></g>
<circle cx="1494" cy="239" r="6.8" fill="#fbfbfb" stroke="#8a8a8a" stroke-width="1.1"/><path d="M1494,234.784 v4.488 l3,2.4" fill="none" stroke="#8a8a8a" stroke-width="1.1"/>
<g transform="translate(1515,239)"><path d="M-4.6,-7 h6 l3.4,3.4 v10.6 h-9.4z" fill="#efefef" stroke="#b4b4b4" stroke-width=".9"/><path d="M-2.6,-1 h5.4 M-2.6,1.4 h5.4 M-2.6,3.8 h5.4" stroke="#b8b8b8" stroke-width="1"/></g>
<path d="M1529,232 v14 M1556.2,232 v14" stroke="#dedede" stroke-width="1"/>
<g transform="translate(1542.7,239)"><path d="M-6,-6 h9.4 q1.6,0 1.6,1.6 v6 q0,1.6 -1.6,1.6 h-4 l-2.6,3 v-3 h-2.8 q-1.6,0 -1.6,-1.6 v-6 q0,-1.6 1.6,-1.6z" fill="#f4e23e" stroke="#d0b822" stroke-width=".6"/><path d="M6.6,-3 l-4.4,8.6 l-1,2.2 l2,-1.4 l4.6,-8.6z" fill="#e8d04a" stroke="#a89020" stroke-width=".5"/></g>
<g transform="translate(1571.2,239)"><path d="M-6.4,-6.8 q3,-1.6 5,.4 q1.6,1.8 .6,3.6 l6.6,7 q1,1.4 -.2,2.4 q-1.2,1 -2.4,-.2 l-6.6,-7 q-2.4,.8 -4,-1 q-1.4,-1.8 -.4,-4 l2.2,2.4 l1.8,-1.6z" fill="#c8ccd0" stroke="#8a8e94" stroke-width=".6"/><path d="M1.4,0.4 l5.4,5.8 q1,1.4 -.2,2.4 q-1.2,1 -2.4,-.2 l-5.2,-5.6z" fill="#f0d84a" stroke="#b09a28" stroke-width=".5"/></g>
<path d="M155.6,85 v19 M158.6,86.5 v19" stroke="#c4c4c4" stroke-width="1.1" stroke-dasharray="1.2 2"/>
<g transform="translate(176.3,94.5)"><path d="M-7,-9.4 h9 l5,5 v13.8 h-14z" fill="#fff" stroke="#8a8a8a" stroke-width="1.1"/><path d="M2,-9.4 v5 h5" fill="#eee" stroke="#8a8a8a" stroke-width=".9"/></g>
<g transform="translate(203.8,94.5)"><path d="M-9,-6.4 h6 l1.6,2 h8.4 v3 h-16z" fill="#e6c030" stroke="#c09a18" stroke-width=".7"/><path d="M-9.4,7.4 l2.4,-9.4 h16.4 l-2.6,9.4z" fill="#f4d548" stroke="#c8a21c" stroke-width=".8"/><path d="M-9,-5 v12" stroke="#c8a21c" stroke-width=".8"/></g>
<g transform="translate(231.5,94.5)"><rect x="-8.6" y="-9" width="17.2" height="18" rx="2" fill="#6b8fc2" stroke="#3f628f" stroke-width="1"/><rect x="-5.6" y="-7.8" width="11.2" height="6.6" fill="#dfe4ec"/><path d="M-4.4,-5.8 h8.8 M-4.4,-3.6 h8.8" stroke="#7a7a7a" stroke-width="1.1"/><rect x="-5.4" y="1.8" width="10.8" height="6.4" fill="#f2f4f8"/><rect x="-3.6" y="3.2" width="3" height="3.8" fill="#3f628f"/></g>
<g transform="translate(259.5,94.5)"><path d="M-4,-8.6 h8 l4,4 v11.6 h-12z" fill="#fdfdfd" stroke="#9a9a9a" stroke-width="1"/><path d="M-8.6,-8.4 h9 v3 h-5.6 v13 h-3.4z" fill="#f0c83c" stroke="#c09a18" stroke-width=".7"/><path d="M-6,-2 h-2 M-6,1 h-2 M-6,4 h-2" stroke="#8a6a10" stroke-width=".7"/><rect x="2.6" y="2.6" width="7.6" height="7.6" rx="1" fill="#f0d23c" stroke="#c8a418" stroke-width=".6"/><path d="M6.4,3.8 v5.2 M3.8,6.4 h5.2 M4.6,4.6 l3.6,3.6 M8.2,4.6 l-3.6,3.6" stroke="#fff8d0" stroke-width=".9"/></g>
<g transform="translate(287.3,94.5)"><path d="M-8.6,-8.4 h12.4 l4.6,4.6 v10.8 h-17z" fill="#fcfcfc" stroke="#8a8a8a" stroke-width="1"/><path d="M-6.4,-6.4 h9 v11 h-9z" fill="#f0f0f4" stroke="#c0c0c8" stroke-width=".6"/><path d="M-3,-4 q2,-2 4,-.4 l-1.4,1.8 l1,1.2 l2,-1 q.8,2.4 -1.2,3.6 l6.6,6.8 q.8,1.2 -.4,2.2 q-1.2,.8 -2,-.2 l-6.4,-7 q-2,.4 -3.2,-1.2 q-1,-1.8 .2,-3.4z" fill="#d8c060" stroke="#6a5a28" stroke-width=".8"/></g>
<g transform="translate(315,94.5)"><circle cx="-4.6" cy="-4.6" r="4.4" fill="#e0572a"/><rect x="-8.4" y="1.8" width="7.8" height="7.4" fill="#6aa878"/><path d="M1.4,-2 l6.6,-7" stroke="#5a6e8e" stroke-width="2.2" stroke-linecap="round"/><text x="2" y="9" font-size="10.5" fill="#555">a</text></g>
<path d="M337.9,85 v19 M340.9,86.5 v19" stroke="#c4c4c4" stroke-width="1.1" stroke-dasharray="1.2 2"/>
<g transform="translate(358.8,94.5)"><path d="M-4.2,9 q-3.6,-4 -5.4,-8.4 q-.4,-1.6 1,-2 q1.2,-.2 2.2,1.4 l1.4,2 v-9.2 q0,-1.6 1.3,-1.6 q1.3,0 1.3,1.6 v-2 q0,-1.6 1.4,-1.6 q1.4,0 1.4,1.6 v1.2 q0,-1.4 1.3,-1.4 q1.3,0 1.3,1.6 v1.6 q.2,-1.2 1.3,-1.2 q1.2,0 1.2,1.6 v7.4 q0,4 -2,7.4z" fill="#fff" stroke="#222" stroke-width="1.1" stroke-linejoin="round"/><path d="M-2.4,-3 v-4 M.4,-3.4 v-5 M3,-3 v-4" stroke="#222" stroke-width=".7"/></g>
<g transform="translate(386.3,94.5)"><rect x="-4" y="-4" width="8" height="8" fill="#f4d848" stroke="#c8a21c" stroke-width=".7"/><path d="M0,-10 l4,4.6 h-8z M0,10 l4,-4.6 h-8z M-10,0 l4.6,-4 v8z M10,0 l-4.6,-4 v8z" fill="#5a8cd0" stroke="#2f5a9a" stroke-width=".7"/></g>
<g transform="translate(414.3,94.5)"><path d="M-2.4,3.4 l-6.2,6.2" stroke="#6a5a20" stroke-width="3.6" stroke-linecap="round"/><path d="M-2.4,3.4 l-6.2,6.2" stroke="#e8c63c" stroke-width="2.2" stroke-linecap="round"/><circle cx="2.2" cy="-2.4" r="6.6" fill="#f4f4f0" stroke="#8a8a8a" stroke-width="1.5"/><path d="M2.2,-6 v7.2 M-1.4,-2.4 h7.2" stroke="#3a76c8" stroke-width="2.2"/></g>
<g transform="translate(441.8,94.5)"><path d="M-2.4,3.4 l-6.2,6.2" stroke="#6a5a20" stroke-width="3.6" stroke-linecap="round"/><path d="M-2.4,3.4 l-6.2,6.2" stroke="#e8c63c" stroke-width="2.2" stroke-linecap="round"/><circle cx="2.2" cy="-2.4" r="6.6" fill="#f4f4f0" stroke="#8a8a8a" stroke-width="1.5"/><path d="M-1.4,-2.4 h7.2" stroke="#3a76c8" stroke-width="2.2"/></g>
<g transform="translate(470,94.5)"><path d="M-2.4,3.4 l-6.2,6.2" stroke="#6a5a20" stroke-width="3.6" stroke-linecap="round"/><path d="M-2.4,3.4 l-6.2,6.2" stroke="#e8c63c" stroke-width="2.2" stroke-linecap="round"/><circle cx="2.2" cy="-2.4" r="6.6" fill="#f4f4f0" stroke="#8a8a8a" stroke-width="1.5"/><path d="M-9,-9 h5.4 l-1.8,1.8 l2.4,2.4 l-1.8,1.8 l-2.4,-2.4 l-1.8,1.8z M9.4,-9 v5.4 l-1.8,-1.8 l-2.4,2.4 l-1.8,-1.8 l2.4,-2.4 l-1.8,-1.8z M9.4,9 h-5.4 l1.8,-1.8 l-2.4,-2.4 l1.8,-1.8 l2.4,2.4 l1.8,-1.8z M-9,9 v-5.4 l1.8,1.8 l2.4,-2.4 l1.8,1.8 l-2.4,2.4 l1.8,1.8z" fill="#4e86d0" stroke="#2a5aa0" stroke-width=".5"/></g>
<g transform="translate(497.5,94.5)"><rect x="-9" y="-8" width="9" height="9" fill="#f4dc40" stroke="#c8a21c" stroke-width=".7"/><path d="M-2.4,3.4 l-6.2,6.2" stroke="#6a5a20" stroke-width="3.6" stroke-linecap="round"/><path d="M-2.4,3.4 l-6.2,6.2" stroke="#e8c63c" stroke-width="2.2" stroke-linecap="round"/><circle cx="2.2" cy="-2.4" r="6.6" fill="rgba(250,246,220,.85)" stroke="#8a8a8a" stroke-width="1.5"/></g>
<g transform="translate(525,94.5)"><rect x="-9" y="-8" width="9" height="9" fill="#d8d8d8" stroke="#9a9a9a" stroke-width=".7"/><path d="M-2.4,3.4 l-6.2,6.2" stroke="#6a5a20" stroke-width="3.6" stroke-linecap="round"/><path d="M-2.4,3.4 l-6.2,6.2" stroke="#e8c63c" stroke-width="2.2" stroke-linecap="round"/><circle cx="2.2" cy="-2.4" r="6.6" fill="rgba(245,245,240,.85)" stroke="#8a8a8a" stroke-width="1.5"/><path d="M2.2,-8.4 v12" stroke="#aaa" stroke-width=".8"/></g>
<g transform="translate(553,94.5)" opacity="0.55"><path d="M-2.4,3.4 l-6.2,6.2" stroke="#6a5a20" stroke-width="3.6" stroke-linecap="round"/><path d="M-2.4,3.4 l-6.2,6.2" stroke="#d8d8d8" stroke-width="2.2" stroke-linecap="round"/><circle cx="2.2" cy="-2.4" r="6.6" fill="#f0f0f0" stroke="#c8c8c8" stroke-width="1.5"/><text x="-2.6" y="0.4" font-size="6.5" font-weight="bold" fill="#999">1:1</text></g>
<g transform="translate(581.3,94.5)"><path d="M-2.4,3.4 l-6.2,6.2" stroke="#6a5a20" stroke-width="3.6" stroke-linecap="round"/><path d="M-2.4,3.4 l-6.2,6.2" stroke="#e8c63c" stroke-width="2.2" stroke-linecap="round"/><circle cx="2.2" cy="-2.4" r="6.6" fill="#f4f4f0" stroke="#8a8a8a" stroke-width="1.5"/><rect x="1.6" y="2" width="8.4" height="7.4" fill="#4e86d0" stroke="#2a5aa0" stroke-width=".5"/><path d="M3.2,5.7 l4.6,-2.6 v1.6 h1.2 v2 h-1.2 v1.6z" fill="#fff"/></g>
<g transform="translate(609.5,94.5)" opacity="0.6"><path d="M-2.4,3.4 l-6.2,6.2" stroke="#6a5a20" stroke-width="3.6" stroke-linecap="round"/><path d="M-2.4,3.4 l-6.2,6.2" stroke="#dcdcdc" stroke-width="2.2" stroke-linecap="round"/><circle cx="2.2" cy="-2.4" r="6.6" fill="#f2f2f2" stroke="#d0d0d0" stroke-width="1.5"/><rect x="1.6" y="2" width="8.4" height="7.4" fill="#d4d4d4"/><path d="M8.4,5.7 l-4.6,-2.6 v5.2z" fill="#fff"/></g>
<g transform="translate(637.5,94.5)"><path d="M-9,-8 h13 v14 h-13z" fill="#e4e4e4" stroke="#8e8e8e" stroke-width="1"/><path d="M-7,-6 h9 v10 h-9z" fill="#f4f4f4" stroke="#bbb" stroke-width=".6"/><rect x="2.6" y="2.6" width="7.6" height="7.6" rx="1" fill="#f0d23c" stroke="#c8a418" stroke-width=".6"/><path d="M6.4,3.8 v5.2 M3.8,6.4 h5.2 M4.6,4.6 l3.6,3.6 M8.2,4.6 l-3.6,3.6" stroke="#fff8d0" stroke-width=".9"/></g>
<g transform="translate(665,94.5)"><path d="M-9.4,2 l6,-8.4 l11,0 l-3,8.4z" fill="#d4d4d4" stroke="#9a9a9a" stroke-width=".8"/><path d="M-9.4,2 v3 l14,0 v-3" fill="#bcbcbc" stroke="#9a9a9a" stroke-width=".6"/><path d="M-5,0 l3,-4.4 M0,0 l2.4,-4.4 M-7,-1 h12" stroke="#aaa" stroke-width=".6"/><rect x="2.6" y="2.6" width="7.6" height="7.6" rx="1" fill="#f0d23c" stroke="#c8a418" stroke-width=".6"/><path d="M6.4,3.8 v5.2 M3.8,6.4 h5.2 M4.6,4.6 l3.6,3.6 M8.2,4.6 l-3.6,3.6" stroke="#fff8d0" stroke-width=".9"/></g>
<g transform="translate(693.8,94.5)"><path d="M-6.4,-9.4 h8.8 v15 l-4.4,-3.6 l-4.4,3.6z" fill="#5e86c0" stroke="#36588c" stroke-width=".9"/><path d="M-4.4,-9 v12" stroke="#8eaedc" stroke-width="1.4"/><rect x="2.6" y="2.6" width="7.6" height="7.6" rx="1" fill="#f0d23c" stroke="#c8a418" stroke-width=".6"/><path d="M6.4,3.8 v5.2 M3.8,6.4 h5.2 M4.6,4.6 l3.6,3.6 M8.2,4.6 l-3.6,3.6" stroke="#fff8d0" stroke-width=".9"/></g>
<g transform="translate(720.5,94.5)"><path d="M-9.4,-7.6 q4.6,-1.6 9.4,.6 q4.8,-2.2 9.4,-.6 v14 q-4.6,-1.4 -9.4,.8 q-4.8,-2.2 -9.4,-.8z" fill="#e8e8e8" stroke="#8a8a8a" stroke-width="1"/><path d="M0,-7 v14.6" stroke="#8a8a8a" stroke-width=".8"/><path d="M2,-9.6 h5 v9 l-2.5,-2.2 l-2.5,2.2z" fill="#5e86c0" stroke="#36588c" stroke-width=".6"/></g>
<circle cx="748.3" cy="94.5" r="8.2" fill="#fbfbfb" stroke="#6a6a6a" stroke-width="1.1"/><path d="M748.3,89.416 v5.412 l3,2.4" fill="none" stroke="#6a6a6a" stroke-width="1.1"/>
<g transform="translate(776.3,94.5)"><path d="M-8.4,-1 a8.6,8.6 0 0 1 14.6,-5 l2.2,-2.4 l.8,8.4 l-8.4,-.8 l2.6,-2.4 a4.8,4.8 0 0 0 -8,2.2z" fill="#4a8cd6" stroke="#245a9e" stroke-width=".7"/><path d="M8.4,1.6 a8.6,8.6 0 0 1 -14.6,5 l-2.2,2.4 l-.8,-8.4 l8.4,.8 l-2.6,2.4 a4.8,4.8 0 0 0 8,-2.2z" fill="#6eaae8" stroke="#245a9e" stroke-width=".7"/></g>
<path d="M798.1,85 v19 M801.1,86.5 v19" stroke="#c4c4c4" stroke-width="1.1" stroke-dasharray="1.2 2"/>
<g transform="translate(818.8,94.5)"><circle cx="-2" cy="-2.6" r="7" fill="#4a80c4" stroke="#2a5a98" stroke-width=".8"/><text x="-4" y="1.6" class="sf" font-size="11" font-weight="bold" font-style="italic" fill="#fff">i</text><path d="M1.6,-.6 l0,10 l2.4,-2.2 l1.8,3.8 l1.8,-.9 l-1.8,-3.6 l3.2,-.2z" fill="#fff" stroke="#333" stroke-width=".8"/></g>
<g transform="translate(847,94.5)"><rect x="-8.6" y="-8" width="17.2" height="14.6" fill="#fbfbfb" stroke="#555" stroke-width="1.1"/><path d="M-8.6,-3.6 h17.2 M-8.6,1.2 h17.2" stroke="#777" stroke-width=".7"/><circle cx="-4" cy="-5.8" r="1.7" fill="#d84a3a"/><circle cx="0" cy="-5.8" r="1.7" fill="#d84a3a"/><circle cx="5" cy="-5.8" r="1.7" fill="#d84a3a"/><circle cx="-5" cy="-1.2" r="1.7" fill="#5aa05a"/><circle cx="1.6" cy="-1.2" r="1.7" fill="#5aa05a"/><circle cx="5.2" cy="-1.2" r="1.7" fill="#5aa05a"/><circle cx="-4.6" cy="3.8" r="1.7" fill="#4a7ac8"/><circle cx="-1" cy="3.8" r="1.7" fill="#4a7ac8"/><circle cx="4.6" cy="3.8" r="1.7" fill="#4a7ac8"/><path d="M-9.6,6.6 h19.2 v2.4 h-19.2z" fill="#666"/></g>
<polygon points="883.00,93.21 883.00,95.79 880.34,95.95 879.66,97.61 881.42,99.60 879.60,101.42 877.61,99.66 875.95,100.34 875.79,103.00 873.21,103.00 873.05,100.34 871.39,99.66 869.40,101.42 867.58,99.60 869.34,97.61 868.66,95.95 866.00,95.79 866.00,93.21 868.66,93.05 869.34,91.39 867.58,89.40 869.40,87.58 871.39,89.34 873.05,88.66 873.21,86.00 875.79,86.00 875.95,88.66 877.61,89.34 879.60,87.58 881.42,89.40 879.66,91.39 880.34,93.05" fill="#6f95d2"/><circle cx="874.5" cy="94.5" r="2.322" fill="#fff"/>
<g transform="translate(902.5,94.5)"><path d="M6,-8.4 h-11.6 l6.4,8 l-6.4,8.6 h12" fill="none" stroke="#9a1a9a" stroke-width="2.6" stroke-linejoin="miter"/></g>
<g transform="translate(930,94.5)"><rect x="-8.4" y="-8.4" width="16.8" height="16.8" fill="#f4f8fc" stroke="#3f6ea8" stroke-width="1.1"/><rect x="-8.4" y="-8.4" width="16.8" height="3.6" fill="#5e8cc8"/><path d="M-8.4,-1.2 h16.8 M-8.4,2.4 h16.8 M-8.4,5.6 h16.8 M-3.6,-4.8 v13.2" stroke="#7fa4d4" stroke-width=".9"/></g>
<path d="M946.4,92.9 l3.6,3.9 l3.6,-3.9z" fill="#4a4a4a"/>
<g transform="translate(970.5,94.5)"><path d="M-9.4,-6.6 h18.8" stroke="#555" stroke-width="1"/><path d="M-9.4,-8.4 v3.6 M9.4,-8.4 v3.6" stroke="#555" stroke-width="1"/><rect x="-9.4" y="-1.4" width="18.8" height="7.6" fill="#c8c8c8" stroke="#555" stroke-width="1"/><path d="M-6.4,-1.4 v3.4 M-3.4,-1.4 v2.4 M-.4,-1.4 v3.4 M2.6,-1.4 v2.4 M5.6,-1.4 v3.4" stroke="#444" stroke-width=".8"/></g>
<path d="M986.9,92.9 l3.6,3.9 l3.6,-3.9z" fill="#4a4a4a"/>
<g transform="translate(1011.3,94.5)"><path d="M-5.4,-9 h11 q4,0 4,4 v3.4 q0,4 -4,4 h-6.6 l-4.4,4.4 v-4.4 q-4,0 -4,-4 v-3.4 q0,-4 4,-4z" fill="#f4e878" stroke="#c4b030" stroke-width=".9"/><circle cx="-5.6" cy="6" r="2.6" fill="#7aa07a" stroke="#4a6a4a" stroke-width=".6"/></g>
<g transform="translate(1038.8,94.5)"><circle cx="-1" cy="-1.6" r="6.8" fill="#ececec" stroke="#cfcfcf" stroke-width="1.6"/><circle cx="-1" cy="-1.6" r="3" fill="none" stroke="#d4d4d4" stroke-width="1.2"/><path d="M3.6,3.4 l5,5.4" stroke="#d0d0d0" stroke-width="2.6"/><path d="M1,-1 l0,7 l1.6,-1.4 l1.2,2.6 l1.2,-.6 l-1.2,-2.4 l2.2,-.2z" fill="#fff" stroke="#ccc" stroke-width=".6"/></g>
<path d="M1055.4,92.9 l3.6,3.9 l3.6,-3.9z" fill="#b8b8b8"/>
<path d="M1073.6,85 v19 M1076.6,86.5 v19" stroke="#c4c4c4" stroke-width="1.1" stroke-dasharray="1.2 2"/>
<rect x="1085.75" y="84.6" width="19.5" height="19.5" fill="#fdbcc6"/>
<text x="1095.5" y="98.5" font-size="11.5" text-anchor="middle" fill="#e0222e">AD</text>
<rect x="1112.75" y="84.6" width="19.5" height="19.5" fill="#e0e2de"/>
<rect x="1140.75" y="84.6" width="19.5" height="19.5" fill="#c8bec8"/>
<text x="1150.5" y="98.5" font-size="11" text-anchor="middle" fill="#e2dce2">RO</text>
<rect x="415.8" y="214.5" width="8.4" height="8" rx="1" fill="#e8e8e8" stroke="#666" stroke-width="1"/>
<rect x="428.1" y="214.5" width="8.4" height="8" rx="1" fill="#e8e8e8" stroke="#666" stroke-width="1"/>
<path d="M417.6,217.9 h3.4 v3.4 h-3.4z" fill="none" stroke="#555" stroke-width=".9"/>
<path d="M430.1,216.3 l4.4,4.4 m0,-4.4 l-4.4,4.4" stroke="#444" stroke-width="1.2"/>
<rect x="174.7" y="256.3" width="13.4" height="13.4" fill="#fff" stroke="#c8c8c8" stroke-width="1"/>
<path d="M177.3,263.8 l3.2,4 l5,-8.6" fill="none" stroke="#000" stroke-width="1.7"/>
<rect x="174.7" y="274.9" width="13.4" height="13.4" fill="#fff" stroke="#c8c8c8" stroke-width="1"/>
<path d="M177.3,282.4 l3.2,4 l5,-8.6" fill="none" stroke="#000" stroke-width="1.7"/>
<rect x="174.7" y="293.5" width="13.4" height="13.4" fill="#fff" stroke="#c8c8c8" stroke-width="1"/>
<rect x="174.7" y="312.1" width="13.4" height="13.4" fill="#fff" stroke="#c8c8c8" stroke-width="1"/>
<rect x="174.7" y="330.7" width="13.4" height="13.4" fill="#fff" stroke="#c8c8c8" stroke-width="1"/>
<rect x="174.7" y="349.3" width="13.4" height="13.4" fill="#fff" stroke="#c8c8c8" stroke-width="1"/>
<rect x="174.7" y="367.9" width="13.4" height="13.4" fill="#fff" stroke="#c8c8c8" stroke-width="1"/>
<rect x="174.7" y="386.5" width="13.4" height="13.4" fill="#fff" stroke="#c8c8c8" stroke-width="1"/>
<path d="M177.3,394 l3.2,4 l5,-8.6" fill="none" stroke="#000" stroke-width="1.7"/>
<circle cx="423" cy="263" r="4.6" fill="#fbfbfb" stroke="#9a9a9a" stroke-width="1"/><path d="M423,260 v3.2 l2.2,1.4" fill="none" stroke="#9a9a9a" stroke-width=".9"/>
<path d="M159.3,277.9 l4.6,3.7 l-4.6,3.7z" fill="#5a5a5a"/>
<path d="M159.3,315.1 l4.6,3.7 l-4.6,3.7z" fill="#5a5a5a"/>
<path d="M159.3,370.9 l4.6,3.7 l-4.6,3.7z" fill="#5a5a5a"/>
<circle cx="202" cy="262.8" r="4.1" fill="#c0474b" stroke="#7e2a2c" stroke-width=".9"/>
<rect x="195.4" y="274.8" width="4.7" height="4.5" fill="#1f2e4d"/><rect x="200.1" y="274.8" width="4.7" height="4.5" fill="#f3f6fa"/><rect x="204.8" y="274.8" width="4.7" height="4.5" fill="#34507f"/><rect x="195.4" y="279.3" width="4.7" height="4.5" fill="#cfd9e9"/><rect x="200.1" y="279.3" width="4.7" height="4.5" fill="#1f2e4d"/><rect x="204.8" y="279.3" width="4.7" height="4.5" fill="#f3f6fa"/><rect x="195.4" y="283.8" width="4.7" height="4.5" fill="#27406b"/><rect x="200.1" y="283.8" width="4.7" height="4.5" fill="#cfd9e9"/><rect x="204.8" y="283.8" width="4.7" height="4.5" fill="#1f2e4d"/>
<rect x="195.4" y="367.8" width="4.7" height="4.5" fill="#1f2e4d"/><rect x="200.1" y="367.8" width="4.7" height="4.5" fill="#f3f6fa"/><rect x="204.8" y="367.8" width="4.7" height="4.5" fill="#34507f"/><rect x="195.4" y="372.3" width="4.7" height="4.5" fill="#cfd9e9"/><rect x="200.1" y="372.3" width="4.7" height="4.5" fill="#1f2e4d"/><rect x="204.8" y="372.3" width="4.7" height="4.5" fill="#f3f6fa"/><rect x="195.4" y="376.8" width="4.7" height="4.5" fill="#27406b"/><rect x="200.1" y="376.8" width="4.7" height="4.5" fill="#cfd9e9"/><rect x="204.8" y="376.8" width="4.7" height="4.5" fill="#1f2e4d"/>
<rect x="194.7" y="292.8" width="14.6" height="14.6" fill="#f7a3b8" stroke="#8e3a48" stroke-width="1"/>
<path d="M195.5,313.5 l4.6,11.5 l4.6,-11 l4,-1.2" fill="none" stroke="#777" stroke-width="1"/><circle cx="209" cy="312.6" r="1.1" fill="#777"/><circle cx="195.5" cy="313.3" r="1" fill="#777"/><circle cx="200.1" cy="325" r="1" fill="#777"/>
<path d="M194.5,337.2 h15.5" stroke="#b59a9e" stroke-width="1.2"/>
<rect x="194.7" y="348.6" width="14.6" height="14.6" fill="#f0714a" stroke="#9c3f22" stroke-width="1"/>
<rect x="194.7" y="385.8" width="14.6" height="14.6" fill="#fff" stroke="#333" stroke-width="1"/>
<rect x="416" y="292.7" width="15" height="15" rx="2" fill="#f6f6f6" stroke="#e2e2e2" stroke-width=".8"/>
<rect x="419" y="297.4" width="9.4" height="5.6" rx="1.2" fill="none" stroke="#8a8a8a" stroke-width="1.1"/>
<path d="M421,297.4 v-1.6 m2.7,1.6 v-1.6 m2.7,1.6 v-1.6 M421,303 v1.6 m2.7,-1.6 v1.6 m2.7,-1.6 v1.6" stroke="#8a8a8a" stroke-width="1"/>
<rect x="416" y="311.3" width="15" height="15" rx="2" fill="#f6f6f6" stroke="#e2e2e2" stroke-width=".8"/>
<rect x="419" y="316" width="9.4" height="5.6" rx="1.2" fill="none" stroke="#8a8a8a" stroke-width="1.1"/>
<path d="M421,316 v-1.6 m2.7,1.6 v-1.6 m2.7,1.6 v-1.6 M421,321.6 v1.6 m2.7,-1.6 v1.6 m2.7,-1.6 v1.6" stroke="#8a8a8a" stroke-width="1"/>
<rect x="416" y="348.5" width="15" height="15" rx="2" fill="#f6f6f6" stroke="#e2e2e2" stroke-width=".8"/>
<rect x="419" y="353.2" width="9.4" height="5.6" rx="1.2" fill="none" stroke="#8a8a8a" stroke-width="1.1"/>
<path d="M421,353.2 v-1.6 m2.7,1.6 v-1.6 m2.7,1.6 v-1.6 M421,358.8 v1.6 m2.7,-1.6 v1.6 m2.7,-1.6 v1.6" stroke="#8a8a8a" stroke-width="1"/>
<path d="M160.5,981 l-4.2,3.6 l4.2,3.6z" fill="#444"/><path d="M428,981 l4.2,3.6 l-4.2,3.6z" fill="#444"/>
<circle cx="167.6" cy="1031" r="4.1" fill="none" stroke="#555" stroke-width="1.1"/><path d="M170.6,1034.2 l3.6,3.6" stroke="#555" stroke-width="1.3"/>
<rect x="1409.8" y="214.5" width="8.4" height="8" rx="1" fill="#e8e8e8" stroke="#666" stroke-width="1"/>
<rect x="1422" y="214.5" width="8.4" height="8" rx="1" fill="#e8e8e8" stroke="#666" stroke-width="1"/>
<path d="M1411.6,217.9 h3.4 v3.4 h-3.4z" fill="none" stroke="#555" stroke-width=".9"/>
<path d="M1424,216.3 l4.4,4.4 m0,-4.4 l-4.4,4.4" stroke="#444" stroke-width="1.2"/>
<circle cx="456" cy="243.3" r="6.4" fill="#ece8e0" stroke="#8a8a8a" stroke-width="1"/><path d="M456,239 v4.5" stroke="#6a8a5a" stroke-width="1"/><path d="M449.3,236 l13.6,14.6 M462.9,236 l-13.6,14.6" stroke="#b01218" stroke-width="1.6"/>
<circle cx="481.5" cy="243.3" r="6.8" fill="#fafafa" stroke="#6e6e6e" stroke-width="1.1"/><path d="M481.5,238.8 v4.8 l2.8,2.4" fill="none" stroke="#6e6e6e" stroke-width="1.1"/>
<circle cx="507" cy="243.3" r="6.8" fill="#e6ebe4" stroke="#5e6e5e" stroke-width="1.1"/><path d="M504.6,239 l6.4,4.3 l-6.4,4.3z" fill="#7fa27c" stroke="#4e6e4e" stroke-width=".7"/>
<path d="M451.15,267.1 v10.6" stroke="#454545" stroke-width="2"/><path d="M452.15,272.4 l6.2,-5.2 l0,10.4 z M458.55,272.4 l6.2,-5.2 l0,10.4 z" fill="#454545"/>
<path d="M484.1,267.1 v10.6" stroke="#454545" stroke-width="2"/><path d="M485.1,272.4 l7,-5.3 l0,10.6 z" fill="#454545"/>
<path d="M512.6,272.4 l8,-5 l0,10 z" fill="#454545"/>
<path d="M543.55,267.1 v10.6 M550.45,267.1 v10.6" stroke="#454545" stroke-width="3"/>
<path d="M581.2,272.4 l-8,-5 l0,10 z" fill="#454545"/>
<path d="M609.65,267.1 v10.6" stroke="#454545" stroke-width="2"/><path d="M608.85,272.4 l-7,-5.3 l0,10.6 z" fill="#454545"/>
<path d="M642.95,267.1 v10.6" stroke="#454545" stroke-width="2"/><path d="M641.95,272.4 l-6.2,-5.2 l0,10.4 z M635.55,272.4 l-6.2,-5.2 l0,10.4 z" fill="#454545"/>
<path d="M1421.3,267 l0,9.4 l2.3,-2 l1.7,3.6 l1.6,-.8 l-1.7,-3.4 l3,-.2 z" fill="#fff" stroke="#000" stroke-width=".8"/>
<g transform="translate(1420.7,240.2) scale(.76)"><path d="M-1.6,-7.6h3.2l.6,2.2 1.8,.8 2-1.2 2.2,2.2-1.2,2 .8,1.8 2.2,.6v3.2l-2.2,.6-.8,1.8 1.2,2-2.2,2.2-2-1.2-1.8,.8-.6,2.2h-3.2l-.6-2.2-1.8-.8-2,1.2-2.2-2.2 1.2-2-.8-1.8-2.2-.6v-3.2l2.2-.6 .8-1.8-1.2-2 2.2-2.2 2,1.2 1.8-.8z" fill="#eadb2c" stroke="#c9b418" stroke-width=".7" transform="translate(0,1.6)"/><circle cx="0" cy="1.6" r="2.2" fill="#faf3c0" stroke="#c9a820" stroke-width=".6"/></g>
<path d="M701.6,287.6 v17.8" stroke="#d0d0d0" stroke-width="1"/>
<path d="M705.3,294.9 l3.3,-3.8 l3.3,3.8z M705.3,298.5 l3.3,3.8 l3.3,-3.8z" fill="#505050"/>
<path d="M913.9,287.6 v17.8" stroke="#d0d0d0" stroke-width="1"/>
<path d="M917.6,294.9 l3.3,-3.8 l3.3,3.8z M917.6,298.5 l3.3,3.8 l3.3,-3.8z" fill="#505050"/>
<g transform="translate(942,296.3)"><path d="M-6.2,-1 a6.4,6.4 0 0 1 11,-3.4 l1.6,-1.8 l.6,6 l-6,-.6 l1.8,-1.7 a3.8,3.8 0 0 0 -6.2,1.7z" fill="#4e92d8" stroke="#2a66a8" stroke-width=".6"/><path d="M6.2,1.4 a6.4,6.4 0 0 1 -11,3.4 l-1.6,1.8 l-.6,-6 l6,.6 l-1.8,1.7 a3.8,3.8 0 0 0 6.2,-1.7z" fill="#6aa8e4" stroke="#2a66a8" stroke-width=".6"/></g>
<path d="M956.4,295 l3.8,4 l3.8,-4z" fill="#505050"/>
<path d="M1080.7,287.6 v17.8" stroke="#d0d0d0" stroke-width="1"/>
<path d="M1084.4,294.9 l3.3,-3.8 l3.3,3.8z M1084.4,298.5 l3.3,3.8 l3.3,-3.8z" fill="#505050"/>
<path d="M1199,294.3 l4,4.2 l4,-4.2z" fill="#505050"/>
<g transform="translate(1229,296.4)"><rect x="-7" y="-7.6" width="14" height="15.2" rx="1.6" fill="#6f93c4" stroke="#3d5f92" stroke-width=".8"/><rect x="-4.4" y="-6.4" width="8.8" height="5" fill="#dfe6f0"/><rect x="-4.6" y="1.4" width="9.2" height="5.4" fill="#eef1f6"/><rect x="-2.6" y="2.6" width="2.4" height="3.4" fill="#3d5f92"/></g>
<path d="M931,328 h14" stroke="#c8c8c8" stroke-width="1" stroke-dasharray="1 1.4"/>
<path d="M1217.3,86 v17.4" stroke="#d0d0d0" stroke-width="1"/>
<path d="M1221,93.1 l3.3,-3.8 l3.3,3.8z M1221,96.7 l3.3,3.8 l3.3,-3.8z" fill="#505050"/>
<rect x="1236.55" y="84.6" width="19.5" height="19.5" fill="#d6dace"/>
<text x="1246.3" y="98.5" font-size="11" text-anchor="middle" fill="#e8eae0">SC</text>
<rect x="1263.55" y="84.6" width="20.5" height="19.5" fill="#cec6ce"/>
<text x="1273.8" y="98.5" font-size="10" text-anchor="middle" fill="#e6e0e6">ADJ</text>
<rect x="1292.05" y="84.6" width="19.5" height="19.5" fill="#dadada"/>
<rect x="1319.75" y="84.6" width="19.5" height="19.5" fill="#f0f0f0"/>
<text x="1329.5" y="98.5" font-size="11" text-anchor="middle" fill="#c4c4c4">T-</text>
<rect x="1347.25" y="84.6" width="20.5" height="19.5" fill="#a0a0a0"/>
<text x="1357.5" y="98.5" font-size="11" text-anchor="middle" fill="#fff">T+</text>
<rect x="1375.25" y="84.6" width="19.5" height="19.5" fill="#dadccc"/>
<rect x="1403.55" y="84.6" width="19.5" height="19.5" fill="#b8b8c0"/>
<path d="M1407,94.5 l4,-4 v2.6 q7,-.4 8,5 q-2.4,-2.6 -8,-2.4 v2.6z" fill="#d8d8de"/>
<path d="M1434.9,85 v19 M1437.9,86.5 v19" stroke="#c4c4c4" stroke-width="1.1" stroke-dasharray="1.2 2"/>
<g transform="translate(1456.3,94.5)"><text x="-9" y="5" font-size="15" font-weight="bold" fill="#4a72b0">A</text><path d="M-8.6,-8 h7" stroke="#4a72b0" stroke-width="1.6"/><path d="M-5.2,-8 v2" stroke="#4a72b0" stroke-width="1.2"/><path d="M5.6,-9.4 l1.2,2.6 2.8,.3 -2.1,1.9 .6,2.8 -2.5,-1.4 -2.5,1.4 .6,-2.8 -2.1,-1.9 2.8,-.3z" fill="#5a7ec0"/><rect x="2.6" y="2.6" width="7.6" height="7.6" rx="1" fill="#f0d23c" stroke="#c8a418" stroke-width=".6"/><path d="M6.4,3.8 v5.2 M3.8,6.4 h5.2 M4.6,4.6 l3.6,3.6 M8.2,4.6 l-3.6,3.6" stroke="#fff8d0" stroke-width=".9"/></g>
<path d="M1472.2,92.9 l3.6,3.9 l3.6,-3.9z" fill="#4a4a4a"/>
<g transform="translate(1495.8,94.5)"><path d="M-8.6,-8.4 h14 v3" fill="none" stroke="#555" stroke-width=".9" stroke-dasharray="1.6 1.4"/><path d="M-8.6,-8.4 v14" fill="none" stroke="#555" stroke-width=".9" stroke-dasharray="1.6 1.4"/><path d="M-4.6,-7 l0,14.6 l3.6,-3.4 l2.6,5.4 l2.4,-1.2 l-2.6,-5.2 l4.8,-.4z" fill="#fff" stroke="#222" stroke-width="1"/></g>
<g transform="translate(1523.8,94.5)"><path d="M-7.4,-7.4 l12,-1.4 l-3.6,12.4 l-10,-3z" fill="#f4f4f8" stroke="#333" stroke-width="1.1"/><circle cx="-7.4" cy="-7.4" r="1.9" fill="#3a7ad8"/><circle cx="4.6" cy="-8.8" r="1.9" fill="#3a7ad8"/><circle cx="-9" cy="1" r="1.9" fill="#3a7ad8"/><circle cx="1" cy="4" r="1.9" fill="#3a7ad8"/><rect x="2.8" y="2.8" width="7.4" height="7.4" rx="1.6" fill="#5a9a62" stroke="#3a7442" stroke-width=".6"/><path d="M6.5,4.2 v4.6 M4.2,6.5 h4.6" stroke="#e8f6e8" stroke-width="1.5"/></g>
<g transform="translate(1552,94.5)"><path d="M4,-8.6 l-10,2 l-2.4,6.6 l7,6" fill="none" stroke="#333" stroke-width="1.1"/><circle cx="4" cy="-8.6" r="1.9" fill="#3a7ad8"/><circle cx="-6" cy="-6.6" r="1.9" fill="#3a7ad8"/><circle cx="-8.4" cy="0" r="1.9" fill="#3a7ad8"/><circle cx="-1.4" cy="6" r="1.9" fill="#3a7ad8"/><rect x="2.8" y="2.8" width="7.4" height="7.4" rx="1.6" fill="#5a9a62" stroke="#3a7442" stroke-width=".6"/><path d="M6.5,4.2 v4.6 M4.2,6.5 h4.6" stroke="#e8f6e8" stroke-width="1.5"/></g>
<g transform="translate(1580.6,94.5)"><path d="M-1.6,-9.6 l2.7,5.8 6.3,.7 -4.7,4.3 1.3,6.2 -5.6,-3.2 -5.6,3.2 1.3,-6.2 -4.7,-4.3 6.3,-.7z" fill="#f6e690" stroke="#c8b040" stroke-width=".9"/><rect x="2.8" y="2.8" width="7.4" height="7.4" rx="1.6" fill="#5a9a62" stroke="#3a7442" stroke-width=".6"/><path d="M6.5,4.2 v4.6 M4.2,6.5 h4.6" stroke="#e8f6e8" stroke-width="1.5"/></g>
<g transform="translate(1609.4,94.5)"><text x="-5" y="4" class="sf" font-size="17" fill="#333">T</text><rect x="-9.4" y="1.6" width="3.4" height="3" fill="#bbb" stroke="#777" stroke-width=".5"/><rect x="2.8" y="2.8" width="7.4" height="7.4" rx="1.6" fill="#5a9a62" stroke="#3a7442" stroke-width=".6"/><path d="M6.5,4.2 v4.6 M4.2,6.5 h4.6" stroke="#e8f6e8" stroke-width="1.5"/></g>
<path d="M1625.3,84.5 v20" stroke="#d6d6d6" stroke-width="1"/>
<g transform="translate(160,44.6)"><circle cx="-.4" cy="-.4" r="5.700" fill="#f8f8f8" stroke="#7aa62c" stroke-width="3"/><path d="M1.600,1.800 l5.600,5.600" stroke="#5a8a1e" stroke-width="3.400"/><circle cx=".8" cy=".4" r="1.700" fill="#f08a24"/><path d="M1.600,1.200 l3,3" stroke="#e8c020" stroke-width="1.200"/></g>
<path d="M155.6,118 v19 M158.6,119.5 v19" stroke="#c4c4c4" stroke-width="1.1" stroke-dasharray="1.2 2"/>
<g transform="translate(176.3,127.5)"><path d="M-9.4,-2 l7,-3 l4,10 l-7,3z" fill="#e88a30" stroke="#b8601a" stroke-width=".6"/><path d="M-7,-5 l8,-1.6 l2,11 l-8,1.6z" fill="#f2c42c" stroke="#c09a18" stroke-width=".6"/><path d="M-2.6,-9 l10.6,2.2 l-2.4,10.6 l-10.6,-2.2z" fill="#6c96d4" stroke="#3f5f92" stroke-width=".8"/><rect x="2.8" y="2.8" width="7.4" height="7.4" rx="1.6" fill="#5a9a62" stroke="#3a7442" stroke-width=".6"/><path d="M6.5,4.2 v4.6 M4.2,6.5 h4.6" stroke="#e8f6e8" stroke-width="1.5"/></g>
<g transform="translate(203.8,127.5)"><circle cx="0" cy="-4" r="5.6" fill="#8eaacc" stroke="#4a6a92" stroke-width=".7"/><path d="M-3,-7 q2,-1 3,1 q-1,2 -3,1z M1,-4 q3,-1 3,2 q-2,1 -3,-2z" fill="#2f4a72"/><path d="M-9.4,-3 l9,4.4 v8 l-9,-4.4z" fill="#e6b41c" stroke="#a88410" stroke-width=".7"/><path d="M-.4,1.4 l9.4,-4.4 v8 l-9.4,4.4z" fill="#f6e04e" stroke="#a88410" stroke-width=".7"/><rect x="3" y="2.6" width="6.6" height="6.6" fill="#f0d23c"/><path d="M6.3,3.6 v4.6 M4,5.9 h4.6" stroke="#fff8d0" stroke-width="1"/></g>
<g transform="translate(231.8,127.5)"><path d="M-7.6,-7.6 l4.6,14 l5.6,-12.6 l5,-1.6" fill="none" stroke="#333" stroke-width="1.1"/><circle cx="-7.6" cy="-7.6" r="1.6" fill="#fff" stroke="#333" stroke-width=".8"/><circle cx="-3" cy="6.4" r="1.6" fill="#fff" stroke="#333" stroke-width=".8"/><circle cx="2.6" cy="-6.2" r="1.4" fill="#fff" stroke="#333" stroke-width=".8"/><circle cx="7.6" cy="-7.8" r="1.6" fill="#fff" stroke="#333" stroke-width=".8"/><rect x="2.6" y="2.6" width="7.6" height="7.6" rx="1" fill="#f0d23c" stroke="#c8a418" stroke-width=".6"/><path d="M6.4,3.8 v5.2 M3.8,6.4 h5.2 M4.6,4.6 l3.6,3.6 M8.2,4.6 l-3.6,3.6" stroke="#fff8d0" stroke-width=".9"/></g>
<g transform="translate(259.3,127.5)"><path d="M-8.6,9 q2,-12 16,-18.4 q.8,8 -6.4,13 q-4,2.4 -7,2.6z" fill="#8aa4cc" stroke="#4a6490" stroke-width=".8"/><path d="M-8.6,9 q6,-10 14,-16" fill="none" stroke="#4a6490" stroke-width=".8"/><rect x="2.6" y="2.6" width="7.6" height="7.6" rx="1" fill="#f0d23c" stroke="#c8a418" stroke-width=".6"/><path d="M6.4,3.8 v5.2 M3.8,6.4 h5.2 M4.6,4.6 l3.6,3.6 M8.2,4.6 l-3.6,3.6" stroke="#fff8d0" stroke-width=".9"/></g>
<g transform="translate(287.5,127.5)"><rect x="-8.4" y="-5" width="15" height="10" rx="1.4" fill="#5e8cd0" stroke="#2f5a9a" stroke-width=".8"/><path d="M-5.6,-5 v-3 M-2.2,-5 v-3 M1.2,-5 v-3 M4.6,-5 v-3 M-5.6,5 v3 M-2.2,5 v3" stroke="#555" stroke-width="1.2"/><rect x="2.6" y="2.6" width="7.6" height="7.6" rx="1" fill="#f0d23c" stroke="#c8a418" stroke-width=".6"/><path d="M6.4,3.8 v5.2 M3.8,6.4 h5.2 M4.6,4.6 l3.6,3.6 M8.2,4.6 l-3.6,3.6" stroke="#fff8d0" stroke-width=".9"/></g>
<g transform="translate(315,127.5)"><rect x="-9" y="-9" width="17" height="17" fill="#6e9ad0" stroke="#2f4f82" stroke-width="1"/><path d="M-9,-9 l9,7 l8,-7 M0,-2 v10 M-9,1 h17 M-9,8 l9,-10 l8,10" stroke="#2f4f82" stroke-width=".9" fill="none"/><path d="M-9,-9 l9,7 l-9,3z" fill="#a8c4e8" opacity=".8"/><rect x="2.6" y="2.6" width="7.6" height="7.6" rx="1" fill="#f0d23c" stroke="#c8a418" stroke-width=".6"/><path d="M6.4,3.8 v5.2 M3.8,6.4 h5.2 M4.6,4.6 l3.6,3.6 M8.2,4.6 l-3.6,3.6" stroke="#fff8d0" stroke-width=".9"/></g>
<g transform="translate(342.5,127.5)"><rect x="-9" y="-9" width="17.4" height="17.4" rx="1.6" fill="#8eaedc" stroke="#4a6a9a" stroke-width="1"/><path d="M-6,-6.6 l4.4,12 l4.6,-11.4 l3.6,-1" fill="none" stroke="#39506f" stroke-width="1.1"/><circle cx="-6" cy="-6.6" r="1.3" fill="#fff" stroke="#39506f" stroke-width=".6"/><circle cx="-1.6" cy="5.4" r="1.3" fill="#fff" stroke="#39506f" stroke-width=".6"/><circle cx="6.6" cy="-7" r="1.3" fill="#fff" stroke="#39506f" stroke-width=".6"/><rect x="2.6" y="2.6" width="7.6" height="7.6" rx="1" fill="#f0d23c" stroke="#c8a418" stroke-width=".6"/><path d="M6.4,3.8 v5.2 M3.8,6.4 h5.2 M4.6,4.6 l3.6,3.6 M8.2,4.6 l-3.6,3.6" stroke="#fff8d0" stroke-width=".9"/></g>
<path d="M365.6,118 v19 M368.6,119.5 v19" stroke="#c4c4c4" stroke-width="1.1" stroke-dasharray="1.2 2"/>
<g transform="translate(385,125.9)"><path d="M-9.6,-1 l4,-4.4 h14.4 v8.8 h-14.4z" fill="#f6dc3c" stroke="#a08a10" stroke-width=".9"/><text x="1.8" y="2.6" font-size="8.4" font-weight="bold" text-anchor="middle" fill="#222">abc</text></g>
<g transform="translate(413.8,127.5)"><path d="M-8.6,-2 a6,6 0 0 1 10,-4.6 l-4,4.6z" fill="#3aa03a" stroke="#222" stroke-width=".6"/><path d="M1.4,-6.6 a6,6 0 0 1 1.2,8 l-5.2,-3.4z" fill="#e8d030" stroke="#222" stroke-width=".6"/><path d="M2.6,1.4 a6,6 0 0 1 -11.2,-3.4 l6,0z" fill="#d82020" stroke="#222" stroke-width=".6"/><rect x="-2" y="3" width="3.6" height="6.6" fill="#e8d030" stroke="#222" stroke-width=".5"/><rect x="1.6" y="-.4" width="3.6" height="10" fill="#d82020" stroke="#222" stroke-width=".5"/><rect x="5.2" y="5" width="3.6" height="4.6" fill="#3aa03a" stroke="#222" stroke-width=".5"/></g>
<path d="M431.8,117.5 v20" stroke="#d6d6d6" stroke-width="1"/>
<g transform="translate(448.8,125.9)"><path d="M-10,-1 l4,-4.4 h13.6 v8.8 h-13.6z" fill="#c8d8ee" stroke="#4a72b0" stroke-width=".9"/><text x="0.6" y="2.2" font-size="7.8" font-weight="bold" text-anchor="middle" fill="#222">ab</text><circle cx="6.6" cy="6.8" r="3.4" fill="#b01020"/><path d="M6.6,3.4 v-5" stroke="#b01020" stroke-width="1.1"/></g>
<g transform="translate(475,125.9)"><path d="M-9.6,-1 l4,-4.4 h14.4 v8.8 h-14.4z" fill="#fce8e8" stroke="#d81e1e" stroke-width=".9"/><text x="1.8" y="2.6" font-size="8.4" font-weight="bold" text-anchor="middle" fill="#d81e1e">abc</text></g>
<path d="M493.8,117.5 v20" stroke="#d6d6d6" stroke-width="1"/>
<g transform="translate(511.3,127.5)"><path d="M-9.6,-3 l3.6,-4 h12.6 v8 h-12.6z" fill="#e2e2e2" stroke="#cfcfcf" stroke-width=".8"/><text x="1" y="0.2" font-size="7.4" font-weight="bold" text-anchor="middle" fill="#c4c4c4">abc</text><circle cx="5.6" cy="5.6" r="3" fill="#d0d0d0"/><path d="M5.6,2.6 v-4" stroke="#d0d0d0" stroke-width="1"/></g>
<g transform="translate(540,127.5)"><path d="M-9.6,-3 l3.6,-4 h12.6 v8 h-12.6z" fill="#e2e2e2" stroke="#cfcfcf" stroke-width=".8"/><text x="1" y="0.2" font-size="7.4" font-weight="bold" text-anchor="middle" fill="#c4c4c4">abc</text><path d="M-2,6.6 q4,-4.4 9,0 q-5,3.6 -9,0z" fill="none" stroke="#bbb" stroke-width=".9"/><circle cx="2.6" cy="6.4" r="1.2" fill="#bbb"/></g>
<g transform="translate(567.5,127.5)"><path d="M-9.6,-3 l3.6,-4 h12.6 v8 h-12.6z" fill="#e2e2e2" stroke="#cfcfcf" stroke-width=".8"/><text x="1" y="0.2" font-size="7.4" font-weight="bold" text-anchor="middle" fill="#c4c4c4">abc</text><rect x="2.4" y="2" width="7.4" height="7.4" rx="1" fill="#cfcfcf"/><path d="M4,5.7 h3 v-1.6 l2.2,1.6 l-2.2,1.6 v-1.6" fill="#f4f4f4" stroke="#f4f4f4" stroke-width=".6"/></g>
<g transform="translate(596.3,127.5)"><path d="M-9.6,-3 l3.6,-4 h12.6 v8 h-12.6z" fill="#e2e2e2" stroke="#cfcfcf" stroke-width=".8"/><text x="1" y="0.2" font-size="7.4" font-weight="bold" text-anchor="middle" fill="#c4c4c4">abc</text><rect x="2.4" y="2" width="7.4" height="7.4" rx="1" fill="#cfcfcf"/><circle cx="6.1" cy="5.7" r="2" fill="none" stroke="#f4f4f4" stroke-width=".9"/></g>
<g transform="translate(622.5,127.5)"><path d="M-9.6,-3 l3.6,-4 h12.6 v8 h-12.6z" fill="#e2e2e2" stroke="#cfcfcf" stroke-width=".8"/><text x="1" y="0.2" font-size="7.4" font-weight="bold" text-anchor="middle" fill="#c4c4c4">abc</text><rect x="2.4" y="2" width="7.4" height="7.4" rx="1" fill="#cfcfcf"/><path d="M4,8 l3.6,-3.6" stroke="#f4f4f4" stroke-width="1.1"/></g>
<path d="M644.1,118 v19 M647.1,119.5 v19" stroke="#c4c4c4" stroke-width="1.1" stroke-dasharray="1.2 2"/>
<g transform="translate(665.5,128.1)"><polygon points="8.6,0.0 4.3,7.4 -4.3,7.4 -8.6,0.0 -4.3,-7.4 4.3,-7.4" fill="#fff" stroke="#111" stroke-width="1.2"/><circle cx="8.6" cy="0.0" r="2" fill="#e01818"/><circle cx="4.3" cy="7.4" r="2" fill="#e01818"/><circle cx="-4.3" cy="7.4" r="2" fill="#e01818"/><circle cx="-8.6" cy="0.0" r="2" fill="#e01818"/><circle cx="-4.3" cy="-7.4" r="2" fill="#e01818"/><circle cx="4.3" cy="-7.4" r="2" fill="#e01818"/></g>
<g transform="translate(693,127.5)"><path d="M0,-8.6 l7.4,13 h-14.8z" fill="none" stroke="#5aa82a" stroke-width="2.6" stroke-linejoin="miter"/><path d="M-9,6.6 h18" stroke="#e8a020" stroke-width="1.6"/><path d="M-9,8.6 h18" stroke="#f4d890" stroke-width="1.2"/></g>
<g transform="translate(721.3,127.5)"><circle cx="-.6" cy="-.8" r="8.2" fill="#7da7d8" stroke="#3a66a0" stroke-width=".9"/><ellipse cx="-.6" cy="-.8" rx="3.6" ry="8.2" fill="none" stroke="#dfeaf8" stroke-width=".9"/><path d="M-8.8,-.8 h16.4 M-7.6,-4.8 h14 M-7.6,3.2 h14" stroke="#dfeaf8" stroke-width=".9"/><circle cx="5.6" cy="6" r="3.6" fill="#3a7a4a" stroke="#1e4a2a" stroke-width=".6"/><path d="M5.6,4 v4 M3.6,6 h4" stroke="#dff0df" stroke-width="1.1"/></g>
<g transform="translate(749.3,127.5)"><circle cx="-.6" cy="-.8" r="8.2" fill="#7da7d8" stroke="#3a66a0" stroke-width=".9"/><ellipse cx="-.6" cy="-.8" rx="3.6" ry="8.2" fill="none" stroke="#dfeaf8" stroke-width=".9"/><path d="M-8.8,-.8 h16.4 M-7.6,-4.8 h14 M-7.6,3.2 h14" stroke="#dfeaf8" stroke-width=".9"/><rect x="2.4" y="2.6" width="7.6" height="7.6" rx="1" fill="#3a7a5a"/><circle cx="5.8" cy="5.8" r="1.9" fill="none" stroke="#e8f6e8" stroke-width=".9"/><path d="M7.2,7.2 l1.8,1.8" stroke="#e8f6e8" stroke-width=".9"/></g>
<g transform="translate(776.8,127.5)"><circle r="9.2" fill="#3a3a3a" stroke="#111" stroke-width=".8"/><path d="M-6.4,-3.6 h12.8 l-6.4,10.6z" fill="none" stroke="#d0d0d0" stroke-width="1.4"/><path d="M-3.4,-1.6 h6.8 l-3.4,5.6z" fill="none" stroke="#d0d0d0" stroke-width="1"/></g>
<g transform="translate(804.5,127.5)"><circle cx="0" cy="-1.6" r="8.2" fill="#88a8d0" stroke="#3a5a8a" stroke-width=".9"/><path d="M-5,-6 q3,-2 5,1 q-2,3 -5,1z M2,-3 q4,-2 4,2 q-3,2 -4,-2z" fill="#2f4a72"/><circle cx="-3.6" cy="6.4" r="3.4" fill="#111"/><circle cx="3.6" cy="6.4" r="3.4" fill="#111"/><rect x="-5.4" y="1.4" width="3.6" height="5" fill="#111"/><rect x="1.8" y="1.4" width="3.6" height="5" fill="#111"/><circle cx="-3.6" cy="6.6" r="1.5" fill="#f4f4f4"/><circle cx="3.6" cy="6.6" r="1.5" fill="#f4f4f4"/></g>
<path d="M826.1,118 v19 M829.1,119.5 v19" stroke="#c4c4c4" stroke-width="1.1" stroke-dasharray="1.2 2"/>
<g transform="translate(847.5,127.5)"><path d="M-3.6,-9 h5 q3.2,0 3.2,3.2 v3.6 q0,2.6 -2.6,2.6 h-5 q-3,0 -3,3 v1.4 h-1.8 q-2.6,0 -2.6,-4 q0,-4.4 3,-4.4 h5.8 v-1 h-5 v-2 q0,-2.4 3,-2.4z" fill="#3b78ae"/><path d="M3.6,9 h-5 q-3.2,0 -3.2,-3.2 v-3.6 q0,-2.6 2.6,-2.6 h5 q3,0 3,-3 v-1.4 h1.8 q2.6,0 2.6,4 q0,4.4 -3,4.4 h-5.8 v1 h5 v2 q0,2.400 -3,2.400z" fill="#f6cf3c"/><path d="M4.6,6 l3.6,2.2 l-3.6,2.2" fill="none" stroke="#222" stroke-width="1"/></g>
<g transform="translate(875.8,127.5)"><circle r="5.4" fill="none" stroke="#222" stroke-width="1.5"/><path d="M0,-9 v18 M-9,0 h18" stroke="#222" stroke-width="1.2"/><circle cx="-6.6" cy="-6.6" r="2" fill="#2aa8c8"/><circle cx="6.6" cy="-6.6" r="2" fill="#2aa8c8"/><circle cx="-6.6" cy="6.6" r="2" fill="#e04a6a"/><circle cx="6.6" cy="6.6" r="2" fill="#e04a6a"/><circle cx="0" cy="-9" r="1.7" fill="#2a7ad8"/><circle cx="0" cy="9" r="1.7" fill="#2ab8a8"/><circle cx="-9" cy="0" r="1.7" fill="#e04a6a"/><circle cx="9" cy="0" r="1.7" fill="#2a7ad8"/><circle r="1.6" fill="#222"/></g>
<g transform="translate(903.3,127.5)"><path d="M-8.6,-7.6 l4,13 l4,-10" fill="none" stroke="#c8c8c8" stroke-width="1"/><circle cx="-8.6" cy="-7.6" r="1.4" fill="#f4f4f4" stroke="#c4c4c4" stroke-width=".7"/><circle cx="-4.6" cy="5.4" r="1.4" fill="#f4f4f4" stroke="#c4c4c4" stroke-width=".7"/><circle cx="4" cy="2.4" r="4.4" fill="none" stroke="#c4c4c4" stroke-width="2" stroke-dasharray="1.8 1.2"/><circle cx="4" cy="2.4" r="1.6" fill="#d4d4d4"/><path d="M-8,-8.4 l16,1" stroke="#d4d4d4" stroke-width=".8"/></g>
<g transform="translate(931.3,127.5)"><rect x="-8" y="-8" width="16" height="16" fill="#fcfcfc" stroke="#111" stroke-width="1.5"/><rect x="-9.6" y="-9.6" width="3.2" height="3.2" fill="#fff" stroke="#555" stroke-width=".7"/><rect x="6.4" y="-9.6" width="3.2" height="3.2" fill="#fff" stroke="#555" stroke-width=".7"/><rect x="-9.600" y="6.4" width="3.2" height="3.2" fill="#fff" stroke="#555" stroke-width=".7"/><rect x="6.4" y="6.4" width="3.2" height="3.2" fill="#fff" stroke="#555" stroke-width=".7"/></g>
<g transform="translate(958.8,127.5)"><path d="M-4.600,-6 l4.600,-2.400 l4.600,2.400 v11 l-4.600,3.400 l-4.600,-3.400z" fill="#2f8a3a" stroke="#1a5a22" stroke-width=".7"/><path d="M0,-8.4 v17.800" stroke="#1a5a22" stroke-width=".6"/><path d="M-3.400,-4 v9 M-1.800,-4.800 v10 M1.800,-4.800 v10 M3.400,-4 v9" stroke="#8ed08e" stroke-width=".5"/><path d="M-7,6.400 l7,3.600 l7,-3.600" fill="none" stroke="#e8c020" stroke-width="1.3"/></g>
<g transform="translate(986.3,127.5)"><path d="M-8.400,-9 v17 h17" fill="none" stroke="#555" stroke-width="1.1"/><path d="M-8.400,6 q6,-1 8,-7 q2,-5 8,-6" fill="none" stroke="#d02080" stroke-width="1.2"/><path d="M-8.400,7 q8,-2 10,-5 q3,-4 6,-4" fill="none" stroke="#4a7ad0" stroke-width="1.100"/><path d="M-8.400,-9 l-1.600,2.400 h3.200z M8.600,8 l-2.400,-1.600 v3.200z" fill="#555"/></g>
<path d="M1002.7,125.9 l3.6,3.9 l3.6,-3.9z" fill="#4a4a4a"/>
<g transform="translate(1027.5,127.5)"><path d="M-9,-1 q0,-7 4.400,-7.400 q2.600,0 3,3 h3.200 q.4,-3 3,-3 q4.400,.4 4.400,7.400 v5 q0,3.600 -4,3.600 q-3.800,0 -3.800,-3.600 v-2 h-2.400 v2 q0,3.600 -3.800,3.600 q-4,0 -4,-3.600z" fill="#2a2a2a" stroke="#111" stroke-width=".6"/><circle cx="-5" cy="4.400" r="2.600" fill="#a85a2a"/><circle cx="5" cy="4.400" r="2.600" fill="#a85a2a"/><path d="M-3,-9.400 l1.200,1.800 h3.600 l1.200,-1.800z" fill="#c8c8c8"/></g>
<g transform="translate(1055,127.5)"><circle cx="0" cy="-3.400" r="6" fill="#2f9a2f"/><circle cx="-4.600" cy="-.6" r="4.200" fill="#2f9a2f"/><circle cx="4.600" cy="-.6" r="4.200" fill="#2f9a2f"/><circle cx="-2" cy="-5" r="3" fill="#4ab84a"/><rect x="-1.500" y="2" width="3" height="7.400" fill="#8a5a2a"/></g>
<g transform="translate(1083.8,127.5)"><path d="M-1,-9 q2.400,0 2.400,2.400 q0,1.600 -1,2.400 q3,1.600 2.600,6 l1.600,3.600 h-3 l1,3.600 h-8.600 q1.600,-2 2.400,-5 q-.6,-5 1.400,-8 q-1,-.8 -1,-2.600 q0,-2.400 2.200,-2.400z" fill="#9a9a9a" stroke="#5a5a5a" stroke-width=".7"/><path d="M-6.600,9.400 h11" stroke="#5a5a5a" stroke-width="1.2"/></g>
<g transform="translate(1110,127.5)"><rect x="-9" y="-9" width="18" height="18" fill="#f6c06a"/><path d="M-9,-9 h9 v8 h-9z" fill="#dff4f4"/><path d="M0,-9 q6,1 9,6 v5 q-5,1 -9,-3z" fill="#f2a838"/><path d="M-9,3 q5,-3 9,1 q2,4 0,5 h-9z" fill="#f08a30"/><path d="M-9,-3 l6,4 l-3,8 M-3,1 l6,-4 l6,8 M3,-3 l-2,-6 M-9,-9 l5,4 l5,-4" fill="none" stroke="#5ac8d0" stroke-width=".7"/></g>
<g transform="translate(1139.5,127.5)"><path d="M-8.600,-4 q2,-5 9,-5.400 q7,0 8.600,5.400 q-1,8 -6.600,12.600 q-9,-2 -11,-12.600z" fill="#fdfdfd" stroke="#8a9ab0" stroke-width=".8"/><circle cx="-3" cy="-3" r=".9" fill="#d82020"/><circle cx="3" cy="-1" r=".9" fill="#d82020"/><circle cx="0" cy="3" r=".9" fill="#d82020"/><circle cx="-4" cy="2" r=".9" fill="#d82020"/><circle cx="4" cy="-5" r=".9" fill="#d82020"/></g>
<g transform="translate(1167,127.5)"><circle cx="0" cy="-7" r="2.400" fill="#f08a18" stroke="#a85a08" stroke-width=".6"/><path d="M-3,-4 h6 l.6,7 h-1.600 l-.6,6.600 h-2.800 l-.6,-6.600 h-1.600z" fill="#f08a18" stroke="#a85a08" stroke-width=".6"/></g>
<g transform="translate(1194.3,127.5)"><rect x="-10" y="-10" width="20" height="20" fill="#f8fcf8"/><path d="M-8,-6 q4,-3 8,0 q4,3 8,-1 M-8,-1 q5,-2 7,2 q3,3 8,0 M-7,5 q5,-4 8,-1 l5,3 M-3,-8 l2,4 M4,-8 l-1,5 M-5,1 l3,5 M3,1 l2,6" fill="none" stroke="#4aa86a" stroke-width=".9"/></g>
<g transform="translate(1222.5,127.5)"><path d="M0,-8.400 l8,3.600 l-8,3.600 l-8,-3.600z" fill="#f08018"/><path d="M-8,-.6 l8,3.600 l8,-3.600" fill="none" stroke="#f08018" stroke-width="2.200"/><path d="M-8,3.800 l8,3.600 l8,-3.600" fill="none" stroke="#f08018" stroke-width="2.200"/></g>
<g transform="translate(1250,127.5)"><rect x="-9.600" y="-9.600" width="19.200" height="19.200" rx="1.600" fill="#d8d8d8" stroke="#6a6a6a" stroke-width="1"/><rect x="-7" y="-7" width="14" height="14" fill="#2a8ac8" stroke="#222" stroke-width=".8"/><path d="M-7,3 l4,-5 l4,4 l3,-3 l3,3 v5 h-14z" fill="#e84a20"/><path d="M-7,5 l5,-2 l5,2 l4,-1 v3 h-14z" fill="#3aa03a"/><rect x="-5" y="-5" width="10" height="10" fill="none" stroke="#f0e020" stroke-width=".8"/></g>
<g transform="translate(1278,127.5)"><rect x="-9.600" y="-9" width="19.200" height="18" fill="#fbe6a0"/><path d="M-9.600,-9 h19.200 v6 l-4,-4 l-3,5 l-3,-3 l-4,4 l-5.200,-3z" fill="#f4b4b4"/><path d="M-9.600,-3.400 h19.200 M-9.600,2.600 h19.200 M-9.600,-9 h19.200 M-9.600,9 h19.200 M-3.400,-9 v18 M3,-9 v18 M-9.600,-9 v18 M9.600,-9 v18" stroke="#d83030" stroke-width=".9"/></g>
<g transform="translate(1306.3,127.5)"><path d="M2,-8 a7,7 0 1 0 2,12" fill="none" stroke="#5a86c8" stroke-width="2.400"/><path d="M1,-4 a3.400,3.400 0 1 0 2,5" fill="none" stroke="#7aa0d8" stroke-width="1.800"/><path d="M1.600,-1 l0,9.600 l2.400,-2.200 l1.800,3.800 l1.700,-.8 l-1.800,-3.700 l3.200,-.2z" fill="#fff" stroke="#444" stroke-width=".8"/></g>
<g transform="translate(1333.8,127.5)"><rect x="-9.600" y="-9.600" width="19.200" height="19.200" fill="#8a7ad8"/><circle r="8" fill="#b8d8f4" stroke="#4a5ac8" stroke-width=".8"/><circle r="5" fill="#4a9ae8"/><circle r="2.400" fill="#1a2a6a"/><path d="M-9.600,-9.600 l5,3 M9.600,-9.600 l-5,3 M-9.600,9.600 l5,-3 M9.600,9.600 l-5,-3" stroke="#e8a0e8" stroke-width="1"/></g>
<g transform="translate(1361.3,127.5)"><path d="M-9.400,8 q1,-8 6,-10 q3,-1 5,2 l4,3 q3,1 4,5z" fill="#10d838" stroke="#111" stroke-width="1.100"/><circle cx="5.600" cy="-6" r="2.800" fill="#f6e840"/><path d="M5.600,-10 v1.200 M9.600,-6 h-1.200 M8.400,-8.800 l-.8,.8" stroke="#e8d020" stroke-width=".8"/></g>
<g transform="translate(1389.3,127.5)"><rect x="-10" y="-10" width="20" height="20" fill="#fafafa"/><circle r="8" fill="#2aa87a"/><rect x="-5.600" y="-2.400" width="11.200" height="4.800" rx=".8" fill="#f4fff8"/><path d="M-4,0 h8" stroke="#2aa87a" stroke-width=".8"/></g>
<g transform="translate(1417.5,127.5)"><path d="M0,1 l9.400,4 l-9.400,4.400 l-9.400,-4.400z" fill="#7a9ab0" stroke="#4a6a80" stroke-width=".6"/><path d="M0,-3 l9.400,4 l-9.400,4.400 l-9.400,-4.400z" fill="#3aa8a0" stroke="#1a7a72" stroke-width=".6"/><path d="M0,-8.600 l9.400,4.600 l-9.400,4.400 l-9.400,-4.400z" fill="#a8d88a" stroke="#5a9a4a" stroke-width=".6"/><path d="M-2,-6 q3,-2 5,1 q-2,3 -5,2z" fill="#6ab85a"/></g>
<g transform="translate(1445,127.5)"><path d="M-6.600,4 l6.600,-8 l6.600,8" fill="none" stroke="#1a86d0" stroke-width="2.600" stroke-linecap="round"/><circle cx="0" cy="-4.600" r="3.200" fill="#1a86d0"/><circle cx="-6.600" cy="4" r="3.200" fill="#1a86d0"/><circle cx="6.600" cy="4" r="3.200" fill="#1a86d0"/></g>
<g transform="translate(1472.5,127.5)"><path d="M-9,4 q3,-9 9,-8 q6,-3 9,-2 q-1,7 -7,9 q-5,4 -11,1z" fill="#5aa83a" stroke="#2a6a1a" stroke-width=".6"/><path d="M-4,2 q3,-3 7,-4" stroke="#d8f0a0" stroke-width=".8" fill="none"/><circle cx="-2" cy="2" r="1.600" fill="#e84a2a"/><circle cx="3" cy="0" r="1.600" fill="#2a6ad8"/><circle cx="0" cy="5" r="1.400" fill="#f0c020"/><path d="M6,-8 l2,-1.400" stroke="#e07a9a" stroke-width="1.200"/></g>
<g transform="translate(1500,127.5)"><rect x="-9" y="-3" width="13" height="12" fill="#c8d8c0" stroke="#5a6a5a" stroke-width=".8"/><path d="M-9,1 h13 M-9,5 h13 M-4.600,-3 v12 M-.4,-3 v12" stroke="#5a6a5a" stroke-width=".8"/><path d="M9.400,-8 l-8,8 l-1.400,3.400 l3.400,-1.400 l8,-8z" fill="#9a7a5a" stroke="#3a2a1a" stroke-width=".8"/><path d="M7,-9.600 l3,3" stroke="#222" stroke-width="2"/></g>
<g transform="translate(1528,127.5)"><rect x="-9.600" y="-9.600" width="19.200" height="19.200" fill="#f4f0d0"/><path d="M-9.600,2 q6,-8 19.200,-6 v9 q-8,-3 -19.200,4z" fill="#a8d870"/><circle cx="0" cy="0" r="4.600" fill="#f0d820" stroke="#e88a20" stroke-width="1.200"/><path d="M-9.600,-6 l19.200,12 M-4,-9.600 l-3,19.200 M9.600,-8 l-14,17.600" stroke="#e84a3a" stroke-width=".9"/></g>
<g transform="translate(1557,127.5)"><rect x="-9.600" y="-9.600" width="19.200" height="19.200" rx="3" fill="#f0d040"/><path d="M-5,6 q-1,-6 3,-8 l5,-3 l3,4 l-4,4 q-3,3 -7,3z" fill="#3a6a2a" stroke="#1a3a12" stroke-width=".6"/><path d="M3,-6 l2.400,-2.400 M6,-3 l2.400,-2.400" stroke="#1a3a12" stroke-width="1.300"/><path d="M-5,6 l-2.600,2.600" stroke="#1a3a12" stroke-width="1.400"/></g>
<path d="M1578.6,118 v19 M1581.6,119.5 v19" stroke="#c4c4c4" stroke-width="1.1" stroke-dasharray="1.2 2"/>
<g transform="translate(1600,127.5)"><text x="-10" y="6" font-size="17" font-weight="bold" fill="#5a9a2a" textLength="12" lengthAdjust="spacingAndGlyphs">H</text><circle cx="4.600" cy="-.6" r="5" fill="none" stroke="#5a9a2a" stroke-width="2.400"/><path d="M6.600,2.400 l3.600,3.800" stroke="#4a7f1e" stroke-width="2.600"/><circle cx="5" cy="-.4" r="1.400" fill="#f08a24"/><circle cx="-8.600" cy="5.400" r="2" fill="#e8701a"/></g>
<path d="M1621.6,118 v19 M1624.6,119.5 v19" stroke="#c4c4c4" stroke-width="1.1" stroke-dasharray="1.2 2"/>
<g transform="translate(1637,127.5)"><path d="M2,-7 a4,4 0 1 0 0,6 M-2,1 a4,4 0 1 0 0,6" fill="none" stroke="#1a78c8" stroke-width="2.400"/></g>
<path d="M155.6,151.2 v19 M158.6,152.7 v19" stroke="#c4c4c4" stroke-width="1.1" stroke-dasharray="1.2 2"/>
<g transform="translate(176.3,160.7)"><path d="M-8.600,9 v-17.600 l17.600,17.600z" fill="#f29a50" stroke="#a8501a" stroke-width="1.100"/><path d="M-4.600,5 v-5.600 l5.600,5.600z" fill="#f0f0f0" stroke="#a8501a" stroke-width=".8"/><rect x="5" y="-9" width="4.400" height="14" fill="#f0d850" stroke="#a08a20" stroke-width=".7"/><path d="M5,-6 h2 M5,-3 h2 M5,0 h2 M5,3 h2" stroke="#6a5a10" stroke-width=".6"/></g>
<g transform="translate(204.5,160.7)"><circle cx="-7" cy="-1" r="1.500" fill="#c6c6c6"/><circle cx="-2" cy="-6" r="1.500" fill="#c6c6c6"/><circle cx="4" cy="-5" r="1.500" fill="#c6c6c6"/><circle cx="-1" cy="1" r="1.300" fill="#c6c6c6"/><rect x="0" y="1.600" width="8" height="8" rx="1.200" fill="#c6c6c6"/><path d="M2,5.600 h2.600 v-1.800 l2.400,1.800 l-2.400,1.800 v-1.800" fill="#f6f6f6" stroke="#f6f6f6" stroke-width=".5"/></g>
<path d="M220.2,159.1 l3.6,3.9 l3.6,-3.9z" fill="#a8a8a8"/>
<g transform="translate(245,160.7)"><path d="M-8,-3 q-1,-5 4,-5.600 q3,-.6 5,1 q4,-1.400 5.600,1.600 q1,3 -1.600,5 q0,3 -3,3.600 q-3,.4 -4.400,-1.400 q-4.600,.8 -5.600,-4.200z" fill="#dedede" stroke="#cdcdcd" stroke-width=".7"/><rect x="1.600" y="1.800" width="7.600" height="7.600" rx="1.400" fill="#cdcdcd"/><circle cx="5.400" cy="5.600" r="2" fill="none" stroke="#f6f6f6" stroke-width=".9"/></g>
<g transform="translate(272.5,160.7)"><path d="M-8,-3 q-1,-5 4,-5.600 q3,-.6 5,1 q4,-1.400 5.600,1.600 q1,3 -1.600,5 q0,3 -3,3.600 q-3,.4 -4.400,-1.400 q-4.600,.8 -5.600,-4.200z" fill="#dedede" stroke="#cdcdcd" stroke-width=".7"/><rect x="1.600" y="1.800" width="7.600" height="7.600" rx="1.400" fill="#cdcdcd"/><path d="M3.400,5.600 h4 M5.400,3.600 v4" stroke="#f6f6f6" stroke-width="1.100"/></g>
<g transform="translate(328.3,160.7)"><path d="M-8,-3 q-1,-5 4,-5.600 q3,-.6 5,1 q4,-1.400 5.600,1.600 q1,3 -1.600,5 q0,3 -3,3.600 q-3,.4 -4.400,-1.400 q-4.600,.8 -5.600,-4.200z" fill="#dedede" stroke="#cdcdcd" stroke-width=".7"/><rect x="1.600" y="1.800" width="7.600" height="7.600" rx="1.400" fill="#cdcdcd"/><path d="M5.400,3.600 v4 M3.400,5.600 h4 M4,4.200 l2.800,2.800 M6.800,4.200 l-2.800,2.800" stroke="#f6f6f6" stroke-width=".8"/></g>
<g transform="translate(356.3,160.7)"><path d="M-8,-3 q-1,-5 4,-5.600 q3,-.6 5,1 q4,-1.400 5.600,1.600 q1,3 -1.600,5 q0,3 -3,3.600 q-3,.4 -4.400,-1.400 q-4.600,.8 -5.600,-4.200z" fill="#dedede" stroke="#cdcdcd" stroke-width=".7"/><rect x="1.600" y="1.800" width="7.600" height="7.600" rx="1.400" fill="#cdcdcd"/><path d="M5.400,3.600 v4 M3.400,5.600 h4 M4,4.200 l2.800,2.800 M6.800,4.200 l-2.800,2.800" stroke="#f6f6f6" stroke-width=".8"/></g>
<g transform="translate(383.8,160.7)"><path d="M-8,-3 q-1,-5 4,-5.600 q3,-.6 5,1 q4,-1.400 5.600,1.600 q1,3 -1.600,5 q0,3 -3,3.600 q-3,.4 -4.400,-1.400 q-4.600,.8 -5.600,-4.200z" fill="#dedede" stroke="#cdcdcd" stroke-width=".7"/><rect x="1.600" y="1.800" width="7.600" height="7.600" rx="1.400" fill="#cdcdcd"/><path d="M5.400,3.600 v4 M3.400,5.600 h4 M4,4.200 l2.800,2.800 M6.800,4.200 l-2.800,2.800" stroke="#f6f6f6" stroke-width=".8"/></g>
<g transform="translate(411.3,160.7)"><path d="M-8,-3 q-1,-5 4,-5.600 q3,-.6 5,1 q4,-1.400 5.600,1.600 q1,3 -1.600,5 q0,3 -3,3.600 q-3,.4 -4.400,-1.400 q-4.600,.8 -5.600,-4.200z" fill="#dedede" stroke="#cdcdcd" stroke-width=".7"/><rect x="1.600" y="1.800" width="7.600" height="7.600" rx="1.400" fill="#cdcdcd"/><path d="M3.800,4 l3.200,3.200 M7,4 l-3.200,3.200" stroke="#f6f6f6" stroke-width="1"/></g>
<g transform="translate(439.5,160.7)"><path d="M-8,-3 q-1,-5 4,-5.600 q3,-.6 5,1 q4,-1.400 5.600,1.600 q1,3 -1.600,5 q0,3 -3,3.600 q-3,.4 -4.400,-1.400 q-4.600,.8 -5.600,-4.200z" fill="#dedede" stroke="#cdcdcd" stroke-width=".7"/><rect x="1.600" y="1.800" width="7.600" height="7.600" rx="1.400" fill="#cdcdcd"/><path d="M3.800,4 l3.200,3.200 M7,4 l-3.200,3.200" stroke="#f6f6f6" stroke-width="1"/></g>
<g transform="translate(300,160.7)"><path d="M-8,-3 q-1,-5 4,-5.600 q5,-.6 6,3 q1,4 -3,5.600 q-6,1.400 -7,-3z" fill="#dedede" stroke="#cdcdcd" stroke-width=".7"/><polygon points="3,-2 8,.6 8,6 3,8.600 -2,6 -2,.6" fill="#e6e6e6" stroke="#cacaca" stroke-width=".8"/></g>
<g transform="translate(467,160.7)"><path d="M-7,-4 q1,-5 7,-4 q6,1 6,5 q0,3 -3,4 q-2,1 -2.600,4 q-1,3 -4,2 q-3,-1 -2.400,-5 q-.6,-3 -1,-6z" fill="#d8d8d8" stroke="#cacaca" stroke-width=".7"/></g>
<g transform="translate(495,160.7)"><path d="M-8.600,3 q-1,-4 3,-7 q4,-4 9,-3.600 q4,.6 4.600,4 q0,4 -4,7 q-4,4 -8,3.600 q-4,-.4 -4.600,-4z" fill="#d4d4d4" stroke="#c6c6c6" stroke-width=".7"/><path d="M-3,-5 q-3,4 0,9" fill="none" stroke="#e6e6e6" stroke-width="1"/></g>
<g transform="translate(522.5,160.7)"><path d="M-8.600,-8 l4,12.600 l4,-9 l5,-2" fill="none" stroke="#d0d0d0" stroke-width="1"/><circle cx="-8.600" cy="-8" r="1.300" fill="#d0d0d0"/><circle cx="-4.600" cy="4.600" r="1.300" fill="#d0d0d0"/><circle cx="4.400" cy="-6.400" r="1.300" fill="#d0d0d0"/><rect x="1.600" y="1.800" width="7.600" height="7.600" rx="1.400" fill="#cdcdcd"/><circle cx="5.400" cy="5.600" r="2" fill="none" stroke="#f6f6f6" stroke-width=".9"/></g>
<g transform="translate(550,160.7)"><path d="M-2,-9.400 v18.800 M-8,-1 h13 M2.600,-9.400 v9" stroke="#d0d0d0" stroke-width="1"/><rect x="-9" y="3" width="5" height="5" fill="none" stroke="#cdcdcd" stroke-width=".9"/><rect x="3" y="-8" width="5" height="5" fill="none" stroke="#cdcdcd" stroke-width=".9"/><circle cx="-2" cy="-1" r="1.800" fill="#d4d4d4"/></g>
<g transform="translate(578.8,160.7)"><path d="M-7,-5 q0,-4 4,-4 q4,0 5,3 q4,-2 6,1 q1,3 -3,5 l-5,1 q-6,0 -7,-6z" fill="#dcdcdc" stroke="#cdcdcd" stroke-width=".6"/><path d="M-3,-1 l5,9 M3,-1 l-5,9" stroke="#c6c6c6" stroke-width="1.200"/><circle cx="-3.200" cy="8" r="1.800" fill="none" stroke="#c6c6c6" stroke-width="1"/><circle cx="3.200" cy="8" r="1.800" fill="none" stroke="#c6c6c6" stroke-width="1"/></g>
<g transform="translate(606.3,160.7)"><path d="M-7,-5 q0,-4 4,-4 q4,0 5,3 q4,-2 6,1 q1,3 -3,5 l-5,1 q-6,0 -7,-6z" fill="#dcdcdc" stroke="#cdcdcd" stroke-width=".6"/><path d="M-3,-1 l5,9 M3,-1 l-5,9" stroke="#c6c6c6" stroke-width="1.200"/><circle cx="-3.200" cy="8" r="1.800" fill="none" stroke="#c6c6c6" stroke-width="1"/><circle cx="3.200" cy="8" r="1.800" fill="none" stroke="#c6c6c6" stroke-width="1"/></g>
<g transform="translate(635,160.7)"><circle cx="-4" cy="-4" r="4.600" fill="#dcdcdc" stroke="#cdcdcd" stroke-width=".6"/><circle cx="3" cy="-5" r="3.400" fill="#e2e2e2" stroke="#cdcdcd" stroke-width=".6"/><path d="M-6,1 l5,8 M0,1 l-5,8" stroke="#c8c8c8" stroke-width="1.100"/></g>
<g transform="translate(663.8,160.7)"><path d="M-8,-7 h13 M-9,-3 h17 M-8,1 h14 M-9,5 h17 M-7,8.600 h12 M-3,-9 v18 M3,-8 v17" stroke="#d2d2d2" stroke-width="1"/></g>
<g transform="translate(690,160.7)"><path d="M-6,6 a6.600,6.600 0 0 1 4,-11" fill="none" stroke="#cfcfcf" stroke-width="1.300"/><path d="M-6,3.600 l0,3.600 l3.600,-.6" fill="none" stroke="#cfcfcf" stroke-width="1.100"/><path d="M-1,-8 l9,4.600 l-9,4.600z" fill="#e8e8e8" stroke="#cfcfcf" stroke-width=".9"/><path d="M-1,-8 v17" stroke="#cfcfcf" stroke-width="1"/></g>
<path d="M705.9,159.1 l3.6,3.9 l3.6,-3.9z" fill="#a8a8a8"/>
<g transform="translate(731.3,160.7)"><rect x="-9" y="-9" width="9" height="8" fill="#e0e0e0" stroke="#cdcdcd" stroke-width=".8"/><rect x="-1" y="0" width="9.600" height="8.600" fill="#dadada" stroke="#cacaca" stroke-width=".8"/><path d="M-5,-1 v4 h4" fill="none" stroke="#c8c8c8" stroke-width="1"/></g>
<path d="M752.4,151.2 v19 M755.4,152.7 v19" stroke="#c4c4c4" stroke-width="1.1" stroke-dasharray="1.2 2"/>
<g transform="translate(773.8,160.7)"><rect x="-9.600" y="-9.600" width="19.200" height="19.200" rx="1.600" fill="#e8a838"/><path d="M-9.600,-9.600 h19.200 v4.600 q-2,-2 -4,0 q-2,-2.400 -4,0 q-2,-2 -4,0 q-2,-2.400 -4,0 q-2,-1.600 -3.200,0z" fill="#5aa83a"/><rect x="-9.600" y="-9.600" width="19.200" height="19.200" rx="1.600" fill="none" stroke="#2aa8b8" stroke-width=".9" stroke-dasharray="1.400 1.200"/><path d="M-6,-1 h4 M-4,-3 v4" stroke="#fff" stroke-width="1.200"/><rect x=".6" y="1" width="8" height="7.600" fill="#f8f8f8"/><circle cx="3" cy="3.400" r="1.500" fill="#d81818"/><circle cx="6.600" cy="3.400" r="1.500" fill="#d81818"/><circle cx="3" cy="6.600" r="1.500" fill="#d81818"/><circle cx="6.600" cy="6.600" r="1.500" fill="#d81818"/></g>
<g transform="translate(801.3,160.7)"><path d="M-3,4 l-6,6" stroke="#111" stroke-width="3.400" stroke-linecap="round"/><circle cx="2" cy="-2" r="7.400" fill="#8ed8e0" stroke="#111" stroke-width="1.600"/><path d="M-3,0 q3,-5 9,-2.600 l-1,3 q-4,3 -8,-.4z" fill="#e84a3a"/><path d="M-2,2 q4,3 8,-1" stroke="#3a9a3a" stroke-width="1.400" fill="none"/></g>
<circle cx="823.8" cy="160.7" r="4" fill="#8c8c8c" stroke="#4a4a4a" stroke-width="1"/>
<path d="M926,158.9 l4,4.200 l4,-4.200z" fill="#505050"/>
<g transform="translate(956.3,160.7)"><path d="M-9.400,7 q4,0 6,-9 q2,-7 4,-7 q2,0 4,7 q2,9 5,9" fill="none" stroke="#1a8a8a" stroke-width="1.300"/><path d="M-9.400,8 h19" stroke="#4a7ad0" stroke-width=".9"/><text x="-7.600" y="8.400" font-size="14" font-weight="bold" fill="#111">%</text></g>
<g transform="translate(983.8,160.7)"><path d="M-9.400,7 q4,0 6,-9 q2,-7 4,-7 q2,0 4,7 q2,9 5,9" fill="none" stroke="#a81818" stroke-width="1.300"/><path d="M-9.400,8 h19" stroke="#4a7ad0" stroke-width=".9"/><text x="-5.400" y="8.400" font-size="15" font-weight="bold" fill="#111">σ</text></g>
<g transform="translate(1011.8,160.7)"><path d="M-3,4 l-6,6" stroke="#111" stroke-width="3.400" stroke-linecap="round"/><circle cx="2" cy="-2" r="7.400" fill="#8edce4" stroke="#111" stroke-width="1.600"/><circle cx="2.400" cy="-2.400" r="4.400" fill="#f4e27a"/><path d="M2.400,-5.400 v6 M-.6,-2.400 h6" stroke="#fff" stroke-width="1.500"/></g>
<circle cx="1034.3" cy="160.7" r="4" fill="#8c8c8c" stroke="#4a4a4a" stroke-width="1"/>
<g transform="translate(1100,160.7)"><path d="M-8.600,-8.600 h17.200 l-3.600,8.600 l3.600,8.600 h-17.200z" fill="#e8a020"/><path d="M-8.600,-8.600 h17.200 l-3.600,8.600 l3.600,8.600 h-17.200z" fill="none" stroke="#2ab8c8" stroke-width=".9" stroke-dasharray="1.400 1.200"/><path d="M4,-3 l3,3 M7,-3 l-3,3 M4,2 l3,3 M7,2 l-3,3 M-10,-10 l2.800,2.800 M-7.200,-10 l-2.800,2.800 M-10,7.200 l2.800,2.800 M-7.200,7.200 l-2.800,2.800" stroke="#e01818" stroke-width="1.100"/></g>
<g transform="translate(1127.5,160.7)"><rect x="-9.400" y="-9.400" width="18.800" height="18.800" rx="2.400" fill="#e8a830" stroke="#3ac8d8" stroke-width="1.300"/><path d="M0,-5.600 v11.200 M-5.600,0 h11.200" stroke="#fff" stroke-width="2.200"/></g>
<g transform="translate(1155.5,160.7)"><rect x="-9.400" y="-9.400" width="18.800" height="18.800" rx="2.400" fill="#dadada" stroke="#cfcfcf" stroke-width=".8"/><path d="M-3.600,-4.600 a5.600,5.600 0 1 0 5.600,-1" fill="none" stroke="#f2f2f2" stroke-width="2"/><path d="M-6.600,-6.600 l5,-.6 l-2,4.600z" fill="#f2f2f2"/></g>
<path d="M1265.5,152.2 v17.4" stroke="#d0d0d0" stroke-width="1"/>
<path d="M1269.2,159.3 l3.3,-3.8 l3.3,3.8z M1269.2,162.9 l3.3,3.8 l3.3,-3.8z" fill="#505050"/>
<path d="M1339.3,152.2 v17.4" stroke="#d0d0d0" stroke-width="1"/>
<path d="M1343,159.3 l3.3,-3.8 l3.3,3.8z M1343,162.9 l3.3,3.8 l3.3,-3.8z" fill="#505050"/>
<path d="M1416.8,152.2 v17.4" stroke="#d0d0d0" stroke-width="1"/>
<path d="M1420.5,159.3 l3.3,-3.8 l3.3,3.8z M1420.5,162.9 l3.3,3.8 l3.3,-3.8z" fill="#505050"/>
<g transform="translate(1446.3,160.7)"><path d="M-3,4 l-6,6" stroke="#111" stroke-width="3.400" stroke-linecap="round"/><circle cx="2" cy="-2" r="7.400" fill="#8edce4" stroke="#111" stroke-width="1.600"/><rect x="-2" y="-6" width="4" height="4" fill="#e86a6a"/><rect x="2" y="-6" width="4" height="4" fill="#7ad87a"/><rect x="-2" y="-2" width="4" height="4" fill="#6a9ae8"/><rect x="2" y="-2" width="4" height="4" fill="#e8e86a"/><path d="M2,-6.600 v9 M-2.600,-2 h9" stroke="#fff" stroke-width=".9"/></g>
<circle cx="1468" cy="160.7" r="4" fill="#8c8c8c" stroke="#4a4a4a" stroke-width="1"/>
<g transform="translate(1540.5,160.7)"><rect x="-9.600" y="-9.600" width="19.200" height="19.200" rx="3" fill="#222" stroke="#111" stroke-width=".8"/><rect x="-7.600" y="-7.600" width="7" height="7" fill="#2a9ad8"/><rect x=".6" y="-7.600" width="7" height="7" fill="#d82a2a"/><rect x="-7.600" y=".6" width="7" height="7" fill="#3aa83a"/><rect x=".6" y=".6" width="7" height="7" fill="#2a5ad8"/><path d="M0,-6 v12 M-6,0 h12" stroke="#fff" stroke-width="2"/></g>
<g transform="translate(1568.5,160.7)"><rect x="-9.400" y="-9.400" width="18.800" height="18.800" rx="2.400" fill="#dadada" stroke="#cfcfcf" stroke-width=".8"/><path d="M-3.600,-4.600 a5.600,5.600 0 1 0 5.600,-1" fill="none" stroke="#f2f2f2" stroke-width="2"/><path d="M-6.600,-6.600 l5,-.6 l-2,4.600z" fill="#f2f2f2"/></g>
<path d="M1620.1,152.2 v17.4" stroke="#d0d0d0" stroke-width="1"/>
<path d="M1623.8,159.3 l3.3,-3.8 l3.3,3.8z M1623.8,162.9 l3.3,3.8 l3.3,-3.8z" fill="#505050"/>
<path d="M155.6,184.1 v19 M158.6,185.6 v19" stroke="#c4c4c4" stroke-width="1.1" stroke-dasharray="1.2 2"/>
<g transform="translate(176.3,193.6)"><rect x="-8.400" y="-8" width="13.600" height="13" fill="#f4e04a" stroke="#222" stroke-width="1" stroke-dasharray="1.800 1.400"/><path d="M-.6,-2.400 l0,11.400 l2.800,-2.600 l2,4.400 l2,-1 l-2,-4.200 l3.800,-.2z" fill="#fff" stroke="#222" stroke-width=".9"/></g>
<path d="M192.2,192 l3.6,3.9 l3.6,-3.9z" fill="#4a4a4a"/>
<g transform="translate(216.3,193.6)"><rect x="-8.600" y="-8.400" width="17.200" height="4.400" fill="#f6e440" stroke="#c4ac18" stroke-width=".8"/><rect x="-8.600" y="-2.200" width="17.200" height="4.400" fill="#f6e440" stroke="#c4ac18" stroke-width=".8"/><rect x="-8.600" y="4" width="17.200" height="4.400" fill="#f6e440" stroke="#c4ac18" stroke-width=".8"/></g>
<path d="M232.7,192 l3.6,3.9 l3.6,-3.9z" fill="#4a4a4a"/>
<g transform="translate(257,193.6)"><rect x="-8.400" y="-8.400" width="10" height="10" fill="#f6e440" stroke="#c4a418" stroke-width=".9"/><rect x="-4.600" y="-4.600" width="10" height="10" fill="#f6e440" stroke="#c4a418" stroke-width=".9"/><circle cx="5" cy="5.400" r="3.800" fill="#e83a3a" stroke="#a81818" stroke-width=".6"/><circle cx="5" cy="5.400" r="1.800" fill="none" stroke="#fff" stroke-width=".9"/><path d="M3.600,6.800 l2.800,-2.800" stroke="#fff" stroke-width=".9"/></g>
<path d="M273.2,192 l3.6,3.9 l3.6,-3.9z" fill="#4a4a4a"/>
<g transform="translate(297.5,193.6)"><rect x="-8.600" y="-8.600" width="11.600" height="10.400" fill="#f6e440" stroke="#c4a418" stroke-width=".9"/><path d="M6.400,.6 a2.800,2.800 0 1 1 -.01,0 M6.400,9.600 l-2.200,-4 h4.400z" fill="#8aa0b8" stroke="#5e7288" stroke-width=".6"/><circle cx="6.400" cy="3.400" r="1" fill="#fff"/></g>
<path d="M319.4,184.1 v19 M322.4,185.6 v19" stroke="#c4c4c4" stroke-width="1.1" stroke-dasharray="1.2 2"/>
<g transform="translate(341.3,193.6)"><path d="M-7.400,-1 l4,-4 l4,4 q2,2.400 4,.4 q2,-2 0,-4 l-4,-4 l4,-1.400 l4,4 q4,6 -1,10.600 q-5,4.400 -11,0z" fill="#d81818" stroke="#7a0808" stroke-width=".7" transform="rotate(10)"/><path d="M-7.600,-2.400 l3.600,-3.600 l2.400,2.400 l-3.600,3.600z M-.6,-9.400 l3.600,-1.600 l2.400,2.400 l-3.600,1.600z" fill="#f4f4f4" stroke="#7a0808" stroke-width=".5" transform="rotate(10)"/></g>
<g transform="translate(370,193.6)"><path d="M-7.600,-8.600 l3.600,10 l4,-8 l5,-1" fill="none" stroke="#d4d4d4" stroke-width="1"/><circle cx="-7.600" cy="-8.600" r="1.300" fill="#d4d4d4"/><circle cx="5" cy="-7.600" r="1.300" fill="#d4d4d4"/><path d="M-2,2 h6 M-2,5 h5" stroke="#d8d8d8" stroke-width="1"/></g>
<path d="M370.9,198 l3.6,3.9 l3.6,-3.9z" fill="#b4b4b4"/>
<path d="M400.2,198 l3.6,3.9 l3.6,-3.9z" fill="#9a9a9a"/>
<path d="M474.3,185.3 v17.1" stroke="#d0d0d0" stroke-width="1"/>
<path d="M478,192.25 l3.3,-3.8 l3.3,3.8z M478,195.85 l3.3,3.8 l3.3,-3.8z" fill="#505050"/>
<path d="M558.600,191.6 l3.900,4 l3.900,-4z" fill="#8a8a8a"/>
<g transform="translate(589.3,193.6)"><path d="M-5.600,-7.600 l4.600,6.600 l-.6,10 M-1,-1 l9,-4.400" fill="none" stroke="#5a9a6a" stroke-width="1.100"/></g>
<g transform="translate(617.5,193.6)"><path d="M-7.600,-5 q-1,-4 4,-4.400 q4,-.4 6,2 q5,-1 6.600,1 q1,4 -2,5 q1,5 -1,8 q-3,2 -6,-1 q-1,-3 -4,-4 q-4,-2 -3.600,-6.600z" fill="#8ab48a" stroke="#3a6a3a" stroke-width=".9"/><path d="M-2,-3 q3,2 6,0 M-1,3 q3,1 5,-1" stroke="#3a6a3a" stroke-width=".7" fill="none"/></g>
<path d="M619.9,199 l3.6,3.9 l3.6,-3.9z" fill="#333"/>
<g transform="translate(645,193.6)"><path d="M-8,-8 l16,16 M8,-8 l-16,16" stroke="#d4d4d4" stroke-width="1.200"/></g>
<g transform="translate(672.5,193.6)"><path d="M-8,-8 q8,8 0,16 M8,-8 q-8,8 0,16 M-8,-8 l16,16 M8,-8 l-16,16" stroke="#d4d4d4" stroke-width="1.400" fill="none"/></g>
<path d="M688.9,192 l3.6,3.9 l3.6,-3.9z" fill="#a8a8a8"/>
<g transform="translate(713.8,193.6)"><path d="M-8,-6 l6,2 l4,10 l6,2 M-6,4 l6,-8 l8,-2" stroke="#d4d4d4" stroke-width="1.400" fill="none"/></g>
<path d="M736.1,184.1 v19 M739.1,185.6 v19" stroke="#c4c4c4" stroke-width="1.1" stroke-dasharray="1.2 2"/>
<g transform="translate(757.5,193.6)"><path d="M-1,-9 l3.400,1.600 l-7,15 l-3.600,2 l.2,-3.600z" fill="#d8d8d8" stroke="#cacaca" stroke-width=".7"/><path d="M3,-9 l3.400,1.600 l-7,15 l-3.600,2 l.2,-3.600z" fill="#d8d8d8" stroke="#cacaca" stroke-width=".7"/><path d="M6.6,-9 l3.400,1.600 l-7,15 l-3.600,2 l.2,-3.600z" fill="#d8d8d8" stroke="#cacaca" stroke-width=".7"/></g>
<path d="M761.4,199 l3.6,3.9 l3.6,-3.9z" fill="#a8a8a8"/>
<g transform="translate(785,193.6)"><path d="M4,-9.400 l3.400,1.600 l-8,16 l-3.600,2 l.2,-3.600z" fill="#dcdcdc" stroke="#cacaca" stroke-width=".8"/></g>
<g transform="translate(812.5,193.6)"><rect x="-8" y="-8.600" width="16" height="17" rx="1.800" fill="#d8d8d8" stroke="#cacaca" stroke-width=".9"/><rect x="-5" y="-7.400" width="10" height="6" fill="#ececec"/><rect x="-5" y="1.600" width="10" height="6" fill="#f0f0f0"/><path d="M2,-5 l6,-4 l2,2 l-5,5z" fill="#e2e2e2" stroke="#cfcfcf" stroke-width=".6"/></g>
<g transform="translate(841.3,193.6)"><path d="M-7,7 l14,-14" stroke="#d4d4d4" stroke-width="1" stroke-dasharray="2 1.400"/><circle cx="-7" cy="7" r="1.600" fill="#f4f4f4" stroke="#d4d4d4" stroke-width=".9"/><circle cx="7" cy="-7" r="1.600" fill="#f4f4f4" stroke="#d4d4d4" stroke-width=".9"/></g>
<path d="M856.9,192 l3.6,3.9 l3.6,-3.9z" fill="#a8a8a8"/>
<g transform="translate(881.3,193.6)"><circle cx="-7" cy="-2" r="1.500" fill="#d4d4d4"/><circle cx="-2" cy="-7" r="1.500" fill="#d4d4d4"/><circle cx="4" cy="-5" r="1.500" fill="#d4d4d4"/><circle cx="-2" cy="1" r="1.300" fill="#d4d4d4"/><rect x="0" y="1.600" width="8" height="8" rx="1.200" fill="#cdcdcd"/><path d="M4,3.400 v4.400 M1.800,5.600 h4.400 M2.400,4 l3.200,3.200 M5.600,4 l-3.200,3.200" stroke="#f6f6f6" stroke-width=".8"/></g>
<g transform="translate(908.8,193.6)"><path d="M-8,-7 l6,0 l-4,14 M-3,-1 l10,9 M6,-6 l-10,14" stroke="#d4d4d4" stroke-width="1.300" fill="none"/><circle cx="-8" cy="-7" r="1.600" fill="#f4f4f4" stroke="#d4d4d4" stroke-width=".9"/></g>
<path d="M925.2,192 l3.6,3.9 l3.6,-3.9z" fill="#a8a8a8"/>
<g transform="translate(950,193.6)"><rect x="-8.600" y="-8" width="15" height="16" fill="#dedede" stroke="#cfcfcf" stroke-width=".8"/><path d="M-8.600,-4 h15 M-8.600,0 h15 M-8.600,4 h15" stroke="#cacaca" stroke-width=".8"/><path d="M6,-9 l3,2 l-8,13 l-3.400,1.400 l.4,-3.400z" fill="#e4e4e4" stroke="#cacaca" stroke-width=".7"/></g>
<g transform="translate(976.3,193.6)"><path d="M-6.600,-5 h13.200 l-1.400,14 h-10.400z" fill="#e0d8d8" stroke="#d0c4c4" stroke-width=".9"/><path d="M-8,-5.600 h16 M-3,-8 h6" stroke="#d0c4c4" stroke-width="1.600"/><path d="M-3,-2 v8 M0,-2 v8 M3,-2 v8" stroke="#d4c8c8" stroke-width=".9"/></g>
<g transform="translate(1005,193.6)"><path d="M-9,-5 l13,8 M-9,4 l13,-8" stroke="#d0d0d0" stroke-width="1.300"/><circle cx="6.400" cy="4.600" r="2.600" fill="none" stroke="#d0d0d0" stroke-width="1.200"/><circle cx="6.400" cy="-5" r="2.600" fill="none" stroke="#d0d0d0" stroke-width="1.200"/></g>
<g transform="translate(1032.5,193.6)"><path d="M-7,-8.600 h8 v12 h-8z" fill="#ececec" stroke="#d0d0d0" stroke-width=".9"/><path d="M-2.600,-4.600 h6 l3,3 v10.600 h-9z" fill="#f2f2f2" stroke="#d0d0d0" stroke-width=".9"/></g>
<g transform="translate(1061.3,193.6)"><rect x="-7" y="-7.600" width="14" height="16.600" rx="1" fill="#e8e8e8" stroke="#d0d0d0" stroke-width=".9"/><rect x="-3" y="-9.400" width="6" height="3.400" fill="#dcdcdc" stroke="#d0d0d0" stroke-width=".6"/><rect x="-4.400" y="-3" width="8.800" height="9.600" fill="#f6f6f6" stroke="#d8d8d8" stroke-width=".6"/></g>
<g transform="translate(1088.8,193.6)"><path d="M-8.600,-1 l6,-6 v3.600 q9,0 10.600,9.400 q-4,-4.400 -10.600,-4 v3.600z" fill="#dcdcdc"/></g>
<g transform="translate(1117.5,193.6)"><path d="M8.600,-1 l-6,-6 v3.600 q-9,0 -10.600,9.400 q4,-4.400 10.600,-4 v3.600z" fill="#dcdcdc"/></g>
<path d="M1138.6,184.1 v19 M1141.6,185.6 v19" stroke="#c4c4c4" stroke-width="1.1" stroke-dasharray="1.2 2"/>
<g transform="translate(1160,193.6)"><rect x="-8.400" y="-9.200" width="16.800" height="18.400" rx="1.200" fill="#6f9fd6" stroke="#2a3e58" stroke-width="1"/><rect x="-8.400" y="-9.200" width="4" height="18.400" fill="#27323c"/><text x="2.400" y="4.400" font-size="11.500" font-weight="bold" text-anchor="middle" fill="#ffffff">?</text></g>
<path d="M1181.1,184.1 v19 M1184.1,185.6 v19" stroke="#c4c4c4" stroke-width="1.1" stroke-dasharray="1.2 2"/>
<g transform="translate(1202.5,193.6)"><path d="M0,0 L9.4,0.0 A9.400,9.400 0 0 1 7.7,5.5 Z" fill="#3a3a3a" stroke="#eee" stroke-width=".6"/><path d="M0,0 L6.6,6.6 A9.400,9.400 0 0 1 1.5,9.3 Z" fill="#3a3a3a" stroke="#eee" stroke-width=".6"/><path d="M0,0 L0.0,9.4 A9.400,9.400 0 0 1 -5.5,7.7 Z" fill="#3a3a3a" stroke="#eee" stroke-width=".6"/><path d="M0,0 L-6.6,6.6 A9.400,9.400 0 0 1 -9.3,1.5 Z" fill="#3a3a3a" stroke="#eee" stroke-width=".6"/><path d="M0,0 L-9.4,0.0 A9.400,9.400 0 0 1 -7.7,-5.5 Z" fill="#3a3a3a" stroke="#eee" stroke-width=".6"/><path d="M0,0 L-6.6,-6.6 A9.400,9.400 0 0 1 -1.5,-9.3 Z" fill="#3a3a3a" stroke="#eee" stroke-width=".6"/><path d="M0,0 L-0.0,-9.4 A9.400,9.400 0 0 1 5.5,-7.7 Z" fill="#3a3a3a" stroke="#eee" stroke-width=".6"/><path d="M0,0 L6.6,-6.6 A9.400,9.400 0 0 1 9.3,-1.5 Z" fill="#3a3a3a" stroke="#eee" stroke-width=".6"/></g>
<g transform="translate(1230.8,193.6)"><rect x="-9.600" y="-9.600" width="19.200" height="19.200" rx="3.600" fill="#a8c878"/><path d="M-6,6.400 l10,-10" stroke="#111" stroke-width="2.800"/><path d="M0,-7.400 h7.600 v7.600" fill="none" stroke="#111" stroke-width="2.600"/><path d="M-7,7.400 l2.400,-.4" stroke="#f0e020" stroke-width="2.400"/></g>
<path d="M1252.4,184.1 v19 M1255.4,185.6 v19" stroke="#c4c4c4" stroke-width="1.1" stroke-dasharray="1.2 2"/>
<g transform="translate(1273.8,193.6)"><rect x="-9.600" y="-9.600" width="19.200" height="19.200" rx="1" fill="#66b046"/><circle cx="1.600" cy="-1.600" r="5.400" fill="#8cc870" stroke="#fff" stroke-width="1.900"/><path d="M-2.400,2.600 l-4.600,4.600" stroke="#fff" stroke-width="2.400"/></g>
<g transform="translate(1301.3,193.6)"><rect x="-9.600" y="-9" width="17" height="18" fill="#f2d058"/><path d="M-9.600,-9 h6 v6 h-6z M-1,-2 h5 v6 h-5z M-8,3 h5 v6 h-5z" fill="#4a8ad8"/><path d="M-3,-9 l4,6 l-3,5 l4,7" fill="none" stroke="#e8a020" stroke-width="1.200"/><path d="M9.400,-9.600 l-9,11 l-1.600,4 l4,-2 l8.600,-11z" fill="#a86a3a" stroke="#5a3a1a" stroke-width=".7"/></g>
<path d="M1323.1,184.1 v19 M1326.1,185.6 v19" stroke="#c4c4c4" stroke-width="1.1" stroke-dasharray="1.2 2"/>
<g transform="translate(1344.5,193.6)"><rect x="-9.6" y="-9.6" width="4.900" height="4.900" fill="#8a0808"/><rect x="-4.8" y="-9.6" width="4.900" height="4.900" fill="#e85a4a"/><rect x="0" y="-9.6" width="4.900" height="4.900" fill="#f4b4a8"/><rect x="4.8" y="-9.6" width="4.900" height="4.900" fill="#c01818"/><rect x="-9.6" y="-4.8" width="4.900" height="4.900" fill="#f08a7a"/><rect x="-4.8" y="-4.8" width="4.900" height="4.900" fill="#a01010"/><rect x="0" y="-4.8" width="4.900" height="4.900" fill="#fce0d8"/><rect x="4.8" y="-4.8" width="4.900" height="4.900" fill="#d83a2a"/><rect x="-9.6" y="0" width="4.900" height="4.900" fill="#7a0404"/><rect x="-4.8" y="0" width="4.900" height="4.900" fill="#e86a5a"/><rect x="0" y="0" width="4.900" height="4.900" fill="#b01414"/><rect x="4.8" y="0" width="4.900" height="4.900" fill="#f4a090"/><rect x="-9.6" y="4.8" width="4.900" height="4.900" fill="#d02a1e"/><rect x="-4.8" y="4.8" width="4.900" height="4.900" fill="#8a0808"/><rect x="0" y="4.8" width="4.900" height="4.900" fill="#f8c8bc"/><rect x="4.8" y="4.8" width="4.900" height="4.900" fill="#c82018"/></g>
<path d="M1360.9,192 l3.6,3.9 l3.6,-3.9z" fill="#4a4a4a"/>
<g transform="translate(1385,193.6)"><path d="M-9.600,0 q2,-5 6,-4 q3,-3 7,-1 q5,-1 6,4 q-1,5 -6,4.400 q-3,3 -7,1 q-5,1 -6,-4.400z" fill="#f4907a"/><ellipse cx="0" cy="0" rx="5.600" ry="3.200" fill="#e03a2a"/><ellipse cx="0" cy="0" rx="2.600" ry="1.500" fill="#8a0c0c"/></g>
<path d="M1401.4,192 l3.6,3.9 l3.6,-3.9z" fill="#4a4a4a"/>
<g transform="translate(1425.5,193.6)"><polygon points="-1.8,-5.0 -3.4,-2.2 -6.6,-2.2 -8.2,-5.0 -6.6,-7.8 -3.4,-7.8" fill="#f05a5a"/><polygon points="3.2,-2.2 1.6,0.6 -1.6,0.6 -3.2,-2.2 -1.6,-5.0 1.6,-5.0" fill="#e83a3a"/><polygon points="-1.8,0.6 -3.4,3.4 -6.6,3.4 -8.2,0.6 -6.6,-2.2 -3.4,-2.2" fill="#f4a0a0"/><polygon points="8.2,0.6 6.6,3.4 3.4,3.4 1.8,0.6 3.4,-2.2 6.6,-2.2" fill="#f07a7a"/><polygon points="3.2,3.4 1.6,6.2 -1.6,6.2 -3.2,3.4 -1.6,0.6 1.6,0.6" fill="#e84a4a"/><polygon points="8.2,6.2 6.6,9.0 3.4,9.0 1.8,6.2 3.4,3.4 6.6,3.4" fill="#f4a8a8"/><polygon points="2.2,-7.8 0.6,-5.0 -2.6,-5.0 -4.2,-7.8 -2.6,-10.6 0.6,-10.6" fill="#f8c0c0"/></g>
<g transform="translate(1453.3,193.6)"><circle cx="5.2" cy="0.0" r="3.800" fill="#f8b0b8" stroke="#a83a3a" stroke-width=".8"/><circle cx="2.6" cy="4.5" r="3.800" fill="#f8b0b8" stroke="#a83a3a" stroke-width=".8"/><circle cx="-2.6" cy="4.5" r="3.800" fill="#f8b0b8" stroke="#a83a3a" stroke-width=".8"/><circle cx="-5.2" cy="0.0" r="3.800" fill="#f8b0b8" stroke="#a83a3a" stroke-width=".8"/><circle cx="-2.6" cy="-4.5" r="3.800" fill="#f8b0b8" stroke="#a83a3a" stroke-width=".8"/><circle cx="2.6" cy="-4.5" r="3.800" fill="#f8b0b8" stroke="#a83a3a" stroke-width=".8"/><circle r="3" fill="#f0d020" stroke="#a83a3a" stroke-width=".8"/><circle r="1.200" fill="#d82020"/></g>
<g transform="translate(1481.3,193.6)"><rect x="-9.600" y="-9.600" width="19.200" height="19.200" fill="#e02818"/><path d="M-6,-7 q2,2 0,4 M0,-8 q3,3 -1,6 M5,-6 q-2,3 2,5 M-7,2 q3,1 2,5 M1,1 q2,3 -1,6 M6,3 q-3,2 0,5 M-3,-3 q2,2 5,0" stroke="#f8b0a0" stroke-width="1.500" fill="none"/></g>
<g transform="translate(1509.3,193.6)"><path d="M-9.600,0 l3,-3 l-1,-4 l4,1 l3,-3.400 l3,3 l4,-1.600 l0,4.400 l3.400,3 l-3.400,2.600 l.4,4.400 l-4.400,-1 l-3,3 l-3,-3 l-4.400,1 l.6,-4z" fill="#3a9ad8" stroke="#1a6aa8" stroke-width=".6"/><ellipse rx="5.400" ry="3.800" fill="#f4e040"/><ellipse rx="2.800" ry="1.800" fill="#e83a2a"/></g>
<g transform="translate(1537.5,193.6)"><rect x="-5" y="-3" width="11" height="11" fill="#f6dc3c" stroke="#c4a418" stroke-width=".8"/><rect x="-1.600" y="1" width="10.600" height="8.600" fill="#f0c828" stroke="#c4a418" stroke-width=".8"/><path d="M-9.600,3 l5,-5 v10z" fill="#f4a0a0" stroke="#d84a4a" stroke-width=".6"/><path d="M7,-9.600 l-7,9 l-1,3 l3,-1.400 l7,-9z" fill="#e84a3a" stroke="#a81818" stroke-width=".6"/></g>
<defs><linearGradient id="rg" x1="0" x2="1"><stop offset="0" stop-color="#fde0d8"/><stop offset=".5" stop-color="#f0584a"/><stop offset="1" stop-color="#8a0404"/></linearGradient><linearGradient id="tg" x1="0" y1="0" x2="1" y2="1"><stop offset="0" stop-color="#8ad0b8"/><stop offset=".4" stop-color="#f4d890"/><stop offset=".7" stop-color="#f49a4a"/><stop offset="1" stop-color="#f0c060"/></linearGradient></defs>
<rect x="1558" y="183.2" width="17" height="20.400" fill="url(#rg)"/>
<rect x="1582.5" y="183.2" width="3" height="20.400" fill="#3ad83a"/><rect x="1585.4" y="183.2" width="3" height="20.400" fill="#7a3ad8"/><rect x="1588.3" y="183.2" width="3" height="20.400" fill="#e88a20"/><rect x="1591.2" y="183.2" width="3" height="20.400" fill="#2ac8d8"/><rect x="1594.1" y="183.2" width="3" height="20.400" fill="#f020d0"/><rect x="1597" y="183.2" width="3" height="20.400" fill="#8ae83a"/><rect x="1599.9" y="183.2" width="3" height="20.400" fill="#3a6ad8"/>
<rect x="1610" y="183.2" width="21" height="20.400" fill="url(#tg)"/><path d="M1612,187.6 q6,-2 8,4 q2,6 -3,9" fill="none" stroke="#8ac8c0" stroke-width="2"/>
<g transform="translate(163.6,239.2)"><g transform="scale(.72)"><path d="M-7.600,1 l8,-4 l4,3 l-9,5z" fill="#e8503a" stroke="#a82a1a" stroke-width=".5"/><path d="M-7.600,2.600 l3,3.400 l9,-5" fill="none" stroke="#e8a020" stroke-width="1.600"/><path d="M-4,-3.600 l5.600,-1.600 l2,2.600 l-6,2.400z" fill="#7aa0d8"/><path d="M1,1 l7.600,-8" stroke="#c89a3a" stroke-width="2.200" stroke-linecap="round"/></g></g>
<g transform="translate(184.4,239.2)"><g transform="scale(.72)"><path d="M-6.600,-3 h4 v10 h-4z M-1.600,-7.600 h4.600 v14.600 h-4.600z M3.600,-4 h3.400 v11 h-3.400z" fill="#e4e4e4" stroke="#8a8a8a" stroke-width=".9"/><rect x="2.600" y="3.600" width="5.400" height="5" fill="#9ac89a" stroke="#5a8a5a" stroke-width=".5"/></g></g>
<g transform="translate(206.3,239.2)"><g transform="scale(.72)"><path d="M-8.600,0 q7,-8 15,0 q-7,7 -15,0z" fill="#e8e8e8" stroke="#7a7a7a" stroke-width="1"/><circle cx="-1" cy="0" r="3" fill="#7a8aa0"/><path d="M2,3.600 l3.800,4 l3.800,-4z" fill="#4a4a4a"/></g></g>
<g transform="translate(227.7,239.2)"><g transform="scale(.72)"><path d="M-8,-8 h15 l-5.600,7 v7 l-3.800,-2 v-5z" fill="#6a9ad0" stroke="#3a5a8a" stroke-width=".8"/><rect x="-8" y="-8.600" width="15" height="2.600" fill="#f0d840" stroke="#c4a418" stroke-width=".5"/><path d="M2.400,4.600 l3.600,3.800 l3.600,-3.800z" fill="#4a4a4a"/></g></g>
<g transform="translate(248.4,239.2)"><g transform="scale(.72)"><text x="-8" y="3" font-size="13" fill="#6a6a6a">ε</text><rect x="0" y="1" width="6.400" height="6" rx="1" fill="#e8e8e8" stroke="#9a9a9a" stroke-width=".8"/></g></g>
<path d="M260.9,237.6 l3.6,3.9 l3.6,-3.9z" fill="#4a4a4a"/>
<g transform="translate(282,239.2)"><g transform="scale(.72)"><rect x="-7.600" y="-7" width="9" height="13" fill="#e8e8e8" stroke="#8a8a8a" stroke-width=".8"/><rect x="-5.600" y="-2" width="4" height="4" fill="#f0a020"/><path d="M4,-8 v12 M1,1.400 l3,4 l3,-4" stroke="#3a7ad0" stroke-width="2" fill="none"/><path d="M4,-5 v-3" stroke="#3a7ad0" stroke-width="2"/></g></g>
<g transform="translate(303.1,239.2)"><g transform="scale(.72)"><rect x="-7.600" y="-6" width="9" height="13" fill="#e8e8e8" stroke="#8a8a8a" stroke-width=".8"/><rect x="-5.600" y="0" width="4" height="4" fill="#f0a020"/><path d="M4,8 v-13 M.6,-3.400 l3.400,-4.400 l3.400,4.400z" stroke="#3a7ad0" stroke-width="1.600" fill="#3a7ad0"/></g></g>
<g transform="translate(323.4,239.2)"><g transform="scale(.72)"><rect x="-7" y="-7.600" width="12" height="11" fill="#fcfcfc" stroke="#555" stroke-width="1"/><rect x="1.600" y="2" width="7" height="4" rx="1.600" fill="#e83a4a" stroke="#a81828" stroke-width=".5"/><path d="M3.400,4 h3.400" stroke="#fff" stroke-width=".9"/></g></g>
<path d="M1279.6,1030 l4,4.2 l4,-4.2z" fill="#505050"/>
<path d="M1438.1,1023.2 v18.4" stroke="#d0d0d0" stroke-width="1"/>
<path d="M1441.8,1030.8 l3.3,-3.8 l3.3,3.8z M1441.8,1034.4 l3.3,3.8 l3.3,-3.8z" fill="#505050"/>
<path d="M1567.2,1023.2 v18.4" stroke="#d0d0d0" stroke-width="1"/>
<path d="M1570.9,1030.8 l3.3,-3.8 l3.3,3.8z M1570.9,1034.4 l3.3,3.8 l3.3,-3.8z" fill="#505050"/>
<rect x="1589.1" y="1025.2" width="13.2" height="13.2" fill="#fff" stroke="#9a9a9a" stroke-width="1"/><path d="M1591.6,1032.2 l3,3.8 l5,-8.4" fill="none" stroke="#000" stroke-width="1.6"/>
<g transform="translate(1169.4,1032.6)"><path d="M-5,-6 q3,-2 5,0 l2,-1 q2,3 1,6 l2,2 l-2.4,4 q-4,2 -7.6,-1 q-3,-4 0,-10z" fill="#444"/><path d="M-3,-3 l6,7 M2,-4 l-4,8" stroke="#eee" stroke-width="1"/></g>
<g transform="translate(1312.3,1033)"><rect x="-5.6" y="-1.6" width="11.2" height="8.4" rx="1" fill="#777"/><path d="M-3.4,-1.6 v-2.4 a3.4,3.4 0 0 1 6.8,0 v2.4" fill="none" stroke="#8a8a8a" stroke-width="1.6"/></g>
<g transform="translate(1662.5,1032.6)" fill="none" stroke="#7a7a7a" stroke-width=".9"><circle r="6.6" fill="#e4e4e4"/><ellipse rx="3" ry="6.6"/><path d="M-6.6,0 h13.2 M-5.6,-3.4 h11.2 M-5.6,3.4 h11.2"/></g>
<g transform="translate(1755.5,1032.2)"><ellipse cx="0" cy="-1" rx="8.4" ry="6.6" fill="#5e5e5e"/><path d="M2,3.6 q2,4 5.6,4.6 q-2.4,-2.4 -1.6,-5.6z" fill="#5e5e5e"/><circle cx="-3.6" cy="-1" r="1.1" fill="#eee"/><circle cx="0" cy="-1" r="1.1" fill="#eee"/><circle cx="3.6" cy="-1" r="1.1" fill="#eee"/></g>
<path d="M441.5,610 v14 M1435.5,610 v14" stroke="#cfcfcf" stroke-width="1" stroke-dasharray="1 1.4"/>
</svg>
<div style="left:1637px;top:0px;width:133px;height:447.5px;background:#1b1b1b;"></div>
<div style="left:1666px;top:0px;width:74px;height:74.6px;background:#ffffff;"></div>
<svg class="a" style="left:1637px;top:0" width="133" height="75" viewBox="1637 0 133 75">
<defs><linearGradient id="gu" x1="0" x2="1"><stop offset="0" stop-color="#c9c9c9"/><stop offset=".5" stop-color="#b4b4b4"/><stop offset="1" stop-color="#a8a8a8"/></linearGradient></defs>
<path d="M1666,75 L1666,24 Q1666,0 1688,0 L1688,14 Q1681,14 1681,24 L1681,75 Z" fill="#6d1a1e"/>
<path d="M1695,0 L1695,58 Q1695,75 1712,75 L1722,75 Q1738.5,75 1738.5,58 L1738.5,4 Q1738.5,1 1735,1 L1727,1 Q1724.5,1 1724.5,4 L1724.5,56 Q1724.5,65 1716.5,65 Q1709,65 1709,56 L1709,14 Q1707,4 1698,1 Z" fill="url(#gu)"/>
<rect x="1688.2" y="33.6" width="28.2" height="14.8" rx="4" fill="#6b1c20"/>
<rect x="1637" y="62" width="33.5" height="12.6" fill="#1b1b1b" opacity=".85"/>
</svg>
<span class="t" style="left:1640px;top:65.03px;font-size:8px;line-height:8px;color:#fff;transform:scaleX(0.9289);">Citieslab</span>
<div style="left:1637px;top:75.4px;width:133px;height:73.8px;background:#ffffff;"></div>
<svg class="a" style="left:1637px;top:75px" width="133" height="75" viewBox="1637 75 133 75">
<defs><radialGradient id="ot" cx=".45" cy=".35" r=".7"><stop offset="0" stop-color="#e8eaec"/><stop offset=".6" stop-color="#c3c7cb"/><stop offset="1" stop-color="#9aa0a6"/></radialGradient>
<linearGradient id="rd" x1="0" y1="0" x2="0" y2="1"><stop offset="0" stop-color="#7b3d5c"/><stop offset=".6" stop-color="#c4636a"/><stop offset="1" stop-color="#e9a0a2"/></linearGradient></defs>
<rect x="1641" y="77.5" width="9" height="2" fill="#3a4a80" opacity=".7"/>
<rect x="1643" y="85.5" width="12" height="1" fill="#aaa"/>
<rect x="1643" y="89.3" width="47" height="2.4" fill="#16204a"/>
<rect x="1643" y="93" width="47" height="2.4" fill="#16204a"/>
<rect x="1643" y="96.6" width="45" height="1.6" fill="#555"/>
<rect x="1643" y="99.4" width="42" height="1.6" fill="#555"/>
<path d="M1753,75.4 h17 v22 h-3 v6 q0,2 -2,2 q-2,0 -2,-2 v-3 h-2 v6 q0,2 -2.2,2 q-2.2,0 -2.2,-2 v-12 h-3.6 z" fill="url(#rd)"/>
<path d="M1678,149.2 Q1677,128 1692,124 L1716,124 Q1730,128 1729,149.2 Z" fill="#2a2a2c"/>
<path d="M1693,124 L1703.5,134 L1714,124 Z" fill="#9fb0c4"/>
<path d="M1697,133 L1697,149 M1709,133 L1709,149" stroke="#555" stroke-width=".6"/>
<circle cx="1692.5" cy="88.5" r="3.2" fill="#c9cdd1"/><circle cx="1714.500" cy="88.500" r="3.200" fill="#c9cdd1"/><path d="M1684,115 Q1680,98 1690,88 Q1692,84 1696,86 Q1704,83 1711,86 Q1715,84 1717,88 Q1728,98 1725,115 Q1720,128 1704,128 Q1690,128 1684,115 Z" fill="url(#ot)"/>
<ellipse cx="1704.5" cy="110" rx="4.6" ry="3.2" fill="#111"/>
<circle cx="1689.5" cy="105.5" r="2" fill="#111"/><circle cx="1720" cy="106" r="2" fill="#111"/>
<path d="M1704.5,113 v5 m-4,0 h8" stroke="#8e969c" stroke-width=".7" fill="none"/>
<rect x="1637" y="136" width="52" height="11" fill="#2a2a2a" opacity=".85"/>
<rect x="1715" y="145.2" width="26" height="1" fill="#999"/>
</svg>
<span class="t" style="left:1639.5px;top:139.23px;font-size:8px;line-height:8px;color:#fff;transform:scaleX(0.9124);">Faisal Fadhilah</span>
<span class="t" style="left:1677.2px;top:181.52px;font-size:8.6px;line-height:8.6px;color:#fff;font-weight:bold;transform:scaleX(0.9515);">Arief Rahman</span>
<span class="t" style="left:1639.7px;top:213.97px;font-size:7.6px;line-height:7.6px;color:#e8e8e8;">Arief Rahman</span>
<span class="t" style="left:1675.5px;top:256.12px;font-size:8.6px;line-height:8.6px;color:#fff;font-weight:bold;transform:scaleX(0.9335);">CL_Nina Tantri</span>
<span class="t" style="left:1639.7px;top:288.57px;font-size:7.6px;line-height:7.6px;color:#e8e8e8;transform:scaleX(0.9694);">CL_Nina Tantri</span>
<span class="t" style="left:1672.7px;top:331.12px;font-size:8.6px;line-height:8.6px;color:#fff;font-weight:bold;transform:scaleX(0.9685);">Firman Afrianto</span>
<span class="t" style="left:1639.7px;top:363.07px;font-size:7.6px;line-height:7.6px;color:#e8e8e8;transform:scaleX(1.0149);">Firman Afrianto</span>
<span class="t" style="left:1679.3px;top:405.72px;font-size:8.6px;line-height:8.6px;color:#fff;font-weight:bold;transform:scaleX(0.9874);">Athiya Iffaty</span>
<span class="t" style="left:1639.7px;top:437.67px;font-size:7.6px;line-height:7.6px;color:#e8e8e8;">Athiya Iffaty</span>
<div style="left:1797px;top:1052px;width:123px;height:28px;background:#1a1a1a;"></div>
</div>
</body></html>
